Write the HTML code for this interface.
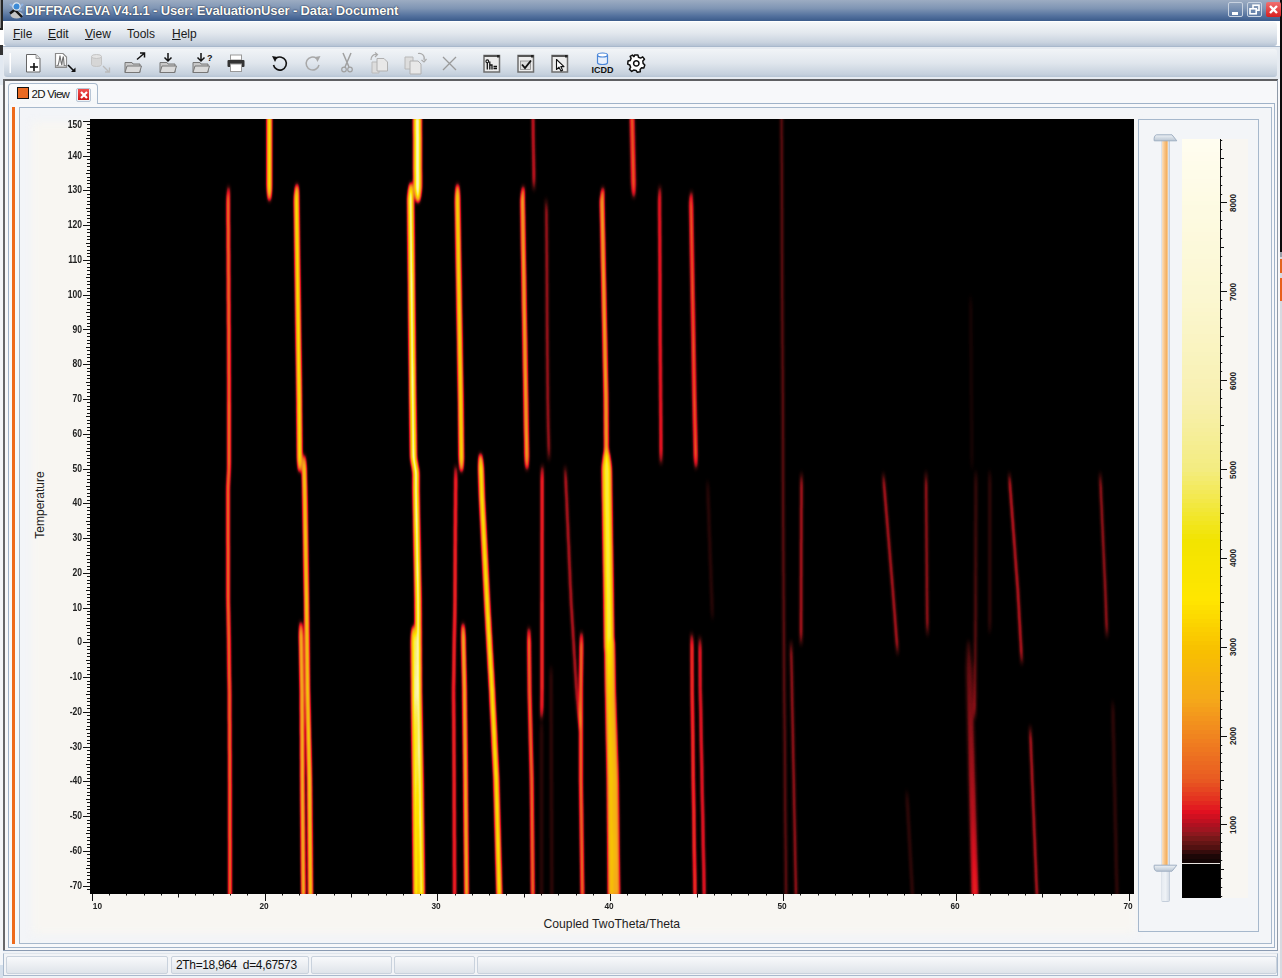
<!DOCTYPE html>
<html><head><meta charset="utf-8">
<style>
*{margin:0;padding:0;box-sizing:border-box}
html,body{width:1282px;height:978px;overflow:hidden;background:#f3f5f8;font-family:"Liberation Sans",sans-serif}
.a{position:absolute}
#title{left:3px;top:0;width:1277px;height:21px;background:linear-gradient(#9cacc2 0%,#7f95b4 40%,#54729e 75%,#3b5b8b 100%)}
#title .t{left:22px;top:3px;font:bold 13px "Liberation Sans",sans-serif;letter-spacing:-0.14px;color:#fdfcf6;text-shadow:0 0 1px #1a2a4a,0 0 2px #2a3a5a;white-space:nowrap}
#menu{left:3px;top:21px;width:1277px;height:26px;background:#fff}
#menu .bg{left:1px;top:1px;width:1273px;height:24px;border-radius:3px;background:linear-gradient(#f5f7f9 0%,#e3e8ee 45%,#c9d3df 85%,#b5c3d4 100%)}
#menu span{position:absolute;top:6px;font-size:12px;color:#1a1a1a;white-space:nowrap}
#tool{left:3px;top:47px;width:1277px;height:33px;background:#e6ebf1}
#tool .bg{left:1px;top:1.5px;width:1273px;height:28px;border-radius:3px;background:linear-gradient(#f1f4f7 0%,#e0e6ed 50%,#c6d1dd 90%,#b6c4d4 100%)}
.yl{position:absolute;left:52px;width:30px;text-align:right;font-weight:bold;font-size:10.3px;line-height:12px;color:#222;transform:scaleX(0.83);transform-origin:right center}
.xl{position:absolute;top:900px;text-align:center;font-weight:bold;font-size:9px;line-height:12px;color:#222;transform:scaleX(0.92)}
.cl{position:absolute;left:1222px;width:22px;height:20px;font-weight:bold;font-size:9px;line-height:20px;color:#222;transform:rotate(-90deg) scaleX(0.9);text-align:center;transform-origin:center}
.tb{position:absolute}
</style></head><body>
<!-- desktop strips -->
<div class="a" style="left:0;top:0;width:3px;height:978px;background:#f4f6f9"></div>
<div class="a" style="left:0;top:55px;width:3px;height:30px;background:#e2e9f1"></div>
<div class="a" style="left:0;top:965px;width:3px;height:13px;background:#d5e0ec"></div>
<div class="a" style="left:0;top:0;width:3px;height:28px;background:#262626;border-left:1px solid #8a8a8a"></div>
<div class="a" style="left:0;top:28px;width:3px;height:18px;background:#fff;border-top:2px solid #222;"></div>
<div class="a" style="left:0;top:45px;width:3px;height:10px;background:#333"></div>
<div class="a" style="left:1280px;top:0;width:2px;height:978px;background:#d6dae0"></div>
<div class="a" style="left:1280px;top:0;width:2px;height:252px;background:#0c0c0c"></div>
<div class="a" style="left:1280px;top:252px;width:2px;height:5px;background:#9aa0a8"></div>
<div class="a" style="left:1280px;top:259px;width:2px;height:14px;background:#e2641e"></div>
<div class="a" style="left:1280px;top:278px;width:2px;height:23px;background:#e8601c"></div>

<div id="title" class="a"><svg class="a" style="left:3px;top:1px" width="20" height="19">
<path d="M4,3 L8,6.5 M17,3 L13,6.5 M16,9 L12,8 M17,14 L13,12" stroke="#8fb2e0" stroke-width="2.2"/>
<ellipse cx="10.5" cy="14" rx="6" ry="3.5" fill="#c4c4c4"/>
<path d="M4,12.5 L11,7 M9,9 L16,16" stroke="#141414" stroke-width="2.4"/>
<circle cx="10.5" cy="5.5" r="3.6" fill="#3c8ad6" stroke="#dfe7ef" stroke-width="1.2"/>
</svg><div class="a t">DIFFRAC.EVA V4.1.1 - User: EvaluationUser - Data: Document</div>
<!-- window buttons -->
<div class="a" style="left:1225px;top:2px;width:15px;height:15px;border:1px solid #c8d2e0;border-radius:2px;background:linear-gradient(#8fa2bc,#5a78a4)"><div class="a" style="left:3px;top:9px;width:6px;height:3px;background:#fff"></div></div>
<div class="a" style="left:1244px;top:2px;width:15px;height:15px;border:1px solid #c8d2e0;border-radius:2px;background:linear-gradient(#8fa2bc,#5a78a4)"><svg class="a" style="left:0;top:0" width="13" height="13"><rect x="5" y="2.2" width="6" height="5" fill="none" stroke="#fff" stroke-width="1.6"/><rect x="2" y="5.8" width="6.2" height="5" fill="#6a86ae" stroke="#fff" stroke-width="1.6"/></svg></div>
<div class="a" style="left:1263px;top:2px;width:15px;height:15px;border-radius:2px;background:linear-gradient(#f07070,#d82020)"><svg class="a" style="left:3px;top:3px" width="9" height="9"><path d="M1,1 L8,8 M8,1 L1,8" stroke="#fff" stroke-width="2.4"/></svg></div>
</div>


<div id="menu" class="a"><div class="a bg"></div>
<span style="left:10px"><u>F</u>ile</span>
<span style="left:45px"><u>E</u>dit</span>
<span style="left:82px"><u>V</u>iew</span>
<span style="left:124px">Tools</span>
<span style="left:169px"><u>H</u>elp</span>
</div>
<div class="a" style="left:3px;top:46px;width:1277px;height:1px;background:#a8b8cc"></div>
<div id="tool" class="a"><div class="a bg"></div></div>
<svg class="a" style="left:0;top:44px" width="700" height="40">
<rect x="9.5" y="9" width="1.5" height="20" fill="#ffffff"/>
<!-- new doc -->
<path d="M26.5,10.5 L36,10.5 L40,14.5 L40,28 L26.5,28 Z" fill="#fff" stroke="#666" stroke-width="1"/>
<path d="M36,10.5 L36,14.5 L40,14.5" fill="#ddd" stroke="#888" stroke-width="0.8"/>
<path d="M30,23 L38,23 M34,19 L34,27" stroke="#111" stroke-width="1.6"/>
<!-- import scan -->
<path d="M55.5,9.5 L63,9.5 L66.5,13 L66.5,23.5 L55.5,23.5 Z" fill="#fff" stroke="#8a8a8a" stroke-width="1.2"/>
<path d="M56.5,21.5 L58,21.5 L59,18 L60,11.5 L61,18 L61.8,21 L62.6,15 L63.4,12.5 L64.2,21.5 L65.8,21.5" fill="none" stroke="#707070" stroke-width="1.1"/>
<path d="M56,22.2 L66,22.2" stroke="#9a9a9a" stroke-width="1"/>
<path d="M68,21 L74,27" stroke="#111" stroke-width="1.6"/><path d="M71,28 L75.5,28 L75.5,23.5 Z" fill="#111"/>
<!-- db grey -->
<path d="M91.5,12.5 L91.5,20.5 A5,2 0 0 0 101.5,20.5 L101.5,12.5" fill="#d6d6d6" stroke="#c4c4c4" stroke-width="1"/>
<ellipse cx="96.5" cy="12.5" rx="5" ry="2" fill="#e4e4e4" stroke="#c4c4c4" stroke-width="1"/>
<path d="M103,22 L109,28 M105,28 L109.5,28 L109.5,23.5" stroke="#bbb" stroke-width="1.3" fill="none"/>
<!-- folder export -->
<path d="M125,28.5 L125,18.5 L132,18.5 L133,20 L140,20 L140,28.5 Z" fill="#c8c8c8" stroke="#777" stroke-width="1"/>
<path d="M125,28.5 L127,22 L141.5,22 L139.5,28.5 Z" fill="#dadada" stroke="#777" stroke-width="1"/>
<path d="M137,15.5 L144,9.5 M140,9 L144.5,9 L144.5,13.5" stroke="#111" stroke-width="1.5" fill="none"/>
<!-- folder import -->
<path d="M160,28.5 L160,18.5 L167,18.5 L168,20 L175,20 L175,28.5 Z" fill="#c8c8c8" stroke="#777" stroke-width="1"/>
<path d="M160,28.5 L162,22 L176.5,22 L174.5,28.5 Z" fill="#dadada" stroke="#777" stroke-width="1"/>
<path d="M168,9 L168,17 M164.5,13.5 L168,17 L171.5,13.5" stroke="#111" stroke-width="1.5" fill="none"/>
<!-- folder import ? -->
<path d="M193,28.5 L193,18.5 L200,18.5 L201,20 L208,20 L208,28.5 Z" fill="#c8c8c8" stroke="#777" stroke-width="1"/>
<path d="M193,28.5 L195,22 L209.5,22 L207.5,28.5 Z" fill="#dadada" stroke="#777" stroke-width="1"/>
<path d="M201,9 L201,17 M197.5,13.5 L201,17 L204.5,13.5" stroke="#111" stroke-width="1.5" fill="none"/>
<text x="207" y="17" font-family="Liberation Sans" font-weight="bold" font-size="9" fill="#111">?</text>
<!-- printer -->
<rect x="230.5" y="11" width="11" height="5" fill="#fff" stroke="#999" stroke-width="1"/>
<rect x="227.5" y="16" width="17" height="7" rx="1" fill="#333"/>
<rect x="230.5" y="20" width="11" height="7.5" fill="#fff" stroke="#999" stroke-width="1"/>
<!-- undo -->
<path d="M273.5,21 A6.5,6.5 0 1 0 276,14.3" fill="none" stroke="#111" stroke-width="1.6"/>
<path d="M272,12 L277.5,13 L275,18 Z" fill="#111"/>
<!-- redo grey -->
<path d="M319,21 A6.5,6.5 0 1 1 316.5,14.3" fill="none" stroke="#a8a8a8" stroke-width="1.5"/>
<path d="M320.5,12 L315,13 L317.5,18 Z" fill="#a8a8a8"/>
<!-- scissors -->
<path d="M343,9 L349,23 M351,9 L345,23" stroke="#a0a0a0" stroke-width="1.5"/>
<circle cx="344" cy="25.5" r="2.3" fill="none" stroke="#a0a0a0" stroke-width="1.2"/>
<circle cx="350" cy="25.5" r="2.3" fill="none" stroke="#a0a0a0" stroke-width="1.2"/>
<!-- copy grey -->
<path d="M372,18 L379,18 L379,29 L372,29 Z" fill="#ddd" stroke="#bbb" stroke-width="1"/>
<path d="M377,14.5 L384,14.5 L387.5,18 L387.5,27 L377,27 Z" fill="#e8e8e8" stroke="#b0b0b0" stroke-width="1"/>
<path d="M371,16 A5,5 0 0 1 377,10.5 M375,8.5 L377.5,10.5 L375,13" stroke="#aaa" stroke-width="1.2" fill="none"/>
<!-- paste grey -->
<path d="M405,13 L413,13 L413,25 L405,25 Z" fill="#ddd" stroke="#b8b8b8" stroke-width="1"/>
<path d="M410,17 L418,17 L421,20 L421,30 L410,30 Z" fill="#e8e8e8" stroke="#b0b0b0" stroke-width="1"/>
<path d="M418,9.5 A5,5 0 0 1 424,16 M421.5,16 L424,18 L426.5,15" stroke="#aaa" stroke-width="1.2" fill="none"/>
<!-- X -->
<path d="M443,13 L456,26 M456,13 L443,26" stroke="#9a9a9a" stroke-width="1.3"/>
<!-- window icons -->
<rect x="484" y="11.5" width="15.5" height="16.5" fill="#ececec" stroke="#6e6e6e" stroke-width="1.5"/>
<rect x="484" y="11" width="15.5" height="2" fill="#555"/><rect x="497" y="11" width="2.5" height="2.5" fill="#222"/>
<circle cx="487.3" cy="17.3" r="1.4" fill="none" stroke="#111" stroke-width="1.1"/>
<path d="M487.3,18.8 L487.3,25.5 M489.8,17.5 L489.8,25.5 M489.8,21 L492,21 L492,25.5 M493.5,22.5 L497,22.5 M493.5,24.5 L497,24.5" stroke="#111" stroke-width="1.3" fill="none"/>
<rect x="518" y="11.5" width="15.5" height="16.5" fill="#ececec" stroke="#6e6e6e" stroke-width="1.5"/>
<rect x="518" y="11" width="15.5" height="2" fill="#555"/><rect x="531" y="11" width="2.5" height="2.5" fill="#222"/>
<rect x="520.5" y="17" width="10" height="8.5" fill="#dcdcdc" stroke="#888" stroke-width="0.8"/>
<path d="M522,20.5 L525,24 L531,16.5" stroke="#111" stroke-width="1.9" fill="none"/>
<rect x="552" y="11.5" width="15.5" height="16.5" fill="#ececec" stroke="#6e6e6e" stroke-width="1.5"/>
<rect x="552" y="11" width="15.5" height="2" fill="#555"/><rect x="565" y="11" width="2.5" height="2.5" fill="#222"/>
<path d="M556.5,15.5 L556.5,25.5 L559,23.2 L561,27 L562.6,26.2 L560.8,22.6 L564,22.6 Z" fill="#fff" stroke="#111" stroke-width="1.1" stroke-linejoin="round"/>
<!-- ICDD -->
<path d="M597.5,11 L597.5,18.5 A5,2 0 0 0 607.5,18.5 L607.5,11" fill="#e8f0fc" stroke="#4a86d8" stroke-width="1.2"/>
<ellipse cx="602.5" cy="11" rx="5" ry="2" fill="#fff" stroke="#4a86d8" stroke-width="1.2"/>
<text x="591.5" y="29" font-family="Liberation Sans" font-weight="bold" font-size="9" fill="#111" textLength="22">ICDD</text>
<!-- gear -->
<g transform="translate(636.3,19.4)">
<path d="M-1.6,-8.5 L1.6,-8.5 L2.2,-6.2 L4.3,-5.3 L6.4,-6.5 L8.2,-4.2 L6.5,-2.4 L6.8,0 L8.5,1.6 L7.6,4.5 L5.3,4.4 L3.8,6.1 L4,8.3 L1,8.9 L-0.2,7 L-2.6,6.7 L-4.6,8 L-6.9,5.9 L-5.7,3.9 L-6.5,1.6 L-8.6,0.7 L-8.3,-2.3 L-6.2,-2.8 L-5.2,-5 L-6.2,-7.1 L-3.9,-8.3 L-2.3,-6.8 Z" fill="#fff" stroke="#111" stroke-width="1.5" stroke-linejoin="round"/>
<circle cx="0" cy="0" r="2.7" fill="none" stroke="#111" stroke-width="1.5"/>
</g>
</svg>

<!-- document area -->
<div class="a" style="left:3px;top:79px;width:1277px;height:873px;background:#f7f8fa"></div>
<div class="a" style="left:3px;top:79px;width:1275px;height:2px;background:#5f6063"></div>
<div class="a" style="left:3px;top:79px;width:2px;height:872px;background:#66676a"></div>
<div class="a" style="left:1277px;top:80px;width:1px;height:871px;background:#8f9aa8"></div>
<div class="a" style="left:3px;top:950px;width:1275px;height:1px;background:#8a9bb2"></div>

<!-- tab -->
<div class="a" style="left:8px;top:103px;width:1267px;height:845px;border:1px solid #9fb2c8;border-top-color:#9fb2c8;background:#f7f8fa"></div>
<div class="a" style="left:8px;top:83px;width:90px;height:21px;border:1px solid #a9bacd;border-bottom:none;border-radius:4px 4px 0 0;background:linear-gradient(#fbfcfd,#f4f6f8)"></div>
<div class="a" style="left:17px;top:87px;width:12px;height:12px;background:#ea6a22;border:1.5px solid #111"></div>
<div class="a" style="left:31.5px;top:87.5px;font-size:11.5px;letter-spacing:-0.7px;color:#111;white-space:nowrap">2D View</div>
<div class="a" style="left:76px;top:88px;width:15px;height:14px;border:1px solid #b8c6d6;border-radius:2px;background:#eef2f6"></div>
<div class="a" style="left:78px;top:89px;width:11px;height:11px;background:linear-gradient(#f05050,#d01818)"><svg class="a" style="left:1.5px;top:1.5px" width="8" height="8"><path d="M1,1 L7,7 M7,1 L1,7" stroke="#fff" stroke-width="2.2"/></svg></div>

<!-- plot panel -->
<div class="a" style="left:12px;top:107px;width:3px;height:837px;background:#ee6a1c"></div>
<div class="a" style="left:19px;top:107px;width:1253px;height:837px;border:1px solid #a6b8cc;background:#f3f5f8;overflow:hidden"><div class="a" style="left:12px;top:14px;width:1104px;height:812px;background:#f8f6f2;filter:blur(5px)"></div></div>

<!-- heat map -->
<svg class="a" style="left:90px;top:119px;overflow:hidden" width="1044" height="775">
<defs>
<filter id="heat" filterUnits="userSpaceOnUse" x="-30" y="-30" width="1104" height="834" color-interpolation-filters="sRGB">
<feGaussianBlur stdDeviation="1.5 2.5"/>
<feComponentTransfer>
<feFuncR type="table" tableValues="0.000 0.047 0.094 0.141 0.188 0.282 0.376 0.471 0.565 0.643 0.722 0.800 0.878 0.885 0.891 0.897 0.904 0.910 0.915 0.920 0.925 0.931 0.936 0.941 0.944 0.948 0.951 0.954 0.958 0.961 0.963 0.965 0.967 0.969 0.971 0.973 0.978 0.984 0.989 0.995 1.000 0.995 0.989 0.984 0.978 0.973 0.978 0.984 0.989 0.995 1.000"/>
<feFuncG type="table" tableValues="0.000 0.008 0.016 0.024 0.031 0.039 0.047 0.055 0.063 0.063 0.063 0.063 0.063 0.113 0.163 0.213 0.264 0.314 0.345 0.376 0.408 0.439 0.471 0.502 0.528 0.554 0.580 0.607 0.633 0.659 0.680 0.701 0.722 0.742 0.763 0.784 0.808 0.831 0.855 0.878 0.902 0.910 0.918 0.925 0.933 0.941 0.951 0.962 0.972 0.982 0.992"/>
<feFuncB type="table" tableValues="0.000 0.008 0.016 0.024 0.031 0.047 0.063 0.078 0.094 0.102 0.110 0.118 0.125 0.125 0.125 0.125 0.125 0.125 0.125 0.125 0.125 0.125 0.125 0.125 0.122 0.118 0.114 0.110 0.106 0.102 0.085 0.068 0.051 0.034 0.017 0.000 0.000 0.000 0.000 0.000 0.000 0.100 0.201 0.301 0.402 0.502 0.590 0.678 0.765 0.853 0.941"/>
<feFuncA type="table" tableValues="1 1"/>
</feComponentTransfer>
</filter>
</defs>
<g filter="url(#heat)">
<rect x="-30" y="-30" width="1104" height="834" fill="#000"/>
<path d="M181.1,-4.0 L181.1,-2.0 L181.1,0.0 L181.1,2.0 L181.1,4.0 L181.1,6.0 L181.1,8.0 L181.1,10.0 L181.1,12.0 L181.1,14.0 L181.1,16.0 L181.1,18.0 L181.1,20.0 L181.1,22.0 L181.1,24.0 L181.1,26.0 L181.1,28.0 L181.1,30.0 L181.1,32.0 L181.1,34.0 L181.1,36.0 L181.1,38.0 L181.1,40.0 L181.1,42.0 L181.1,44.0 L181.1,46.0 L181.1,48.0 L181.1,50.0 L181.1,52.0 L181.1,54.0 L181.1,56.0 L181.1,58.0 L181.1,60.0 L181.1,62.0 L181.1,64.0 L181.1,66.0 L181.1,68.0 L181.0,70.0 L181.0,71.0 L180.9,72.0 L180.7,74.0 L180.5,76.0 L180.3,78.0 L180.1,80.0 L179.4,82.0 L179.4,82.0 L178.7,80.0 L178.5,78.0 L178.3,76.0 L178.1,74.0 L177.9,72.0 L177.8,71.0 L177.8,70.0 L177.6,68.0 L177.6,66.0 L177.6,64.0 L177.6,62.0 L177.6,60.0 L177.6,58.0 L177.6,56.0 L177.6,54.0 L177.6,52.0 L177.6,50.0 L177.6,48.0 L177.6,46.0 L177.6,44.0 L177.6,42.0 L177.6,40.0 L177.6,38.0 L177.6,36.0 L177.6,34.0 L177.6,32.0 L177.6,30.0 L177.6,28.0 L177.6,26.0 L177.6,24.0 L177.6,22.0 L177.6,20.0 L177.6,18.0 L177.6,16.0 L177.6,14.0 L177.6,12.0 L177.6,10.0 L177.6,8.0 L177.6,6.0 L177.6,4.0 L177.6,2.0 L177.6,0.0 L177.6,-2.0 L177.6,-4.0Z" fill="rgb(255,255,255)"/>
<path d="M330.9,-4.0 L330.9,-2.0 L330.9,-0.0 L330.9,2.0 L330.9,4.0 L330.9,6.0 L330.9,8.0 L330.9,10.0 L330.9,12.0 L330.9,14.0 L331.0,16.0 L331.0,18.0 L331.0,20.0 L331.0,22.0 L331.0,24.0 L331.0,26.0 L331.0,28.0 L331.0,30.0 L331.0,32.0 L331.0,34.0 L331.0,36.0 L331.0,38.0 L331.0,40.0 L331.0,42.0 L331.0,44.0 L331.0,46.0 L331.0,48.0 L331.0,50.0 L331.0,52.0 L331.1,54.0 L331.1,56.0 L331.1,58.0 L331.1,60.0 L331.1,62.0 L331.1,64.0 L331.1,66.0 L331.1,68.0 L331.0,70.0 L330.8,71.0 L330.7,71.9 L330.5,73.9 L330.2,75.9 L329.9,77.9 L329.5,79.9 L328.9,82.0 L328.0,83.0 L328.0,83.0 L327.0,82.0 L326.3,80.0 L325.7,78.1 L325.3,76.1 L324.9,74.1 L324.5,72.1 L324.4,71.0 L324.2,70.0 L324.1,68.0 L324.1,66.0 L324.1,64.0 L324.1,62.0 L324.1,60.0 L324.1,58.0 L324.1,56.0 L324.1,54.0 L324.0,52.0 L324.0,50.0 L324.0,48.0 L324.0,46.0 L324.0,44.0 L324.0,42.0 L324.0,40.0 L324.0,38.0 L324.0,36.0 L324.0,34.0 L324.0,32.0 L324.0,30.0 L324.0,28.0 L324.0,26.0 L324.0,24.0 L324.0,22.0 L324.0,20.0 L324.0,18.0 L324.0,16.0 L323.9,14.0 L323.9,12.0 L323.9,10.0 L323.9,8.0 L323.9,6.0 L323.9,4.0 L323.9,2.0 L323.9,0.0 L323.9,-2.0 L323.9,-4.0Z" fill="rgb(242,242,242)"/>
<path d="M443.7,-4.0 L443.8,-2.0 L443.8,-0.0 L443.8,2.0 L443.9,4.0 L443.9,6.0 L443.9,8.0 L443.9,10.0 L444.0,12.0 L444.0,14.0 L444.0,16.0 L444.0,18.0 L444.1,20.0 L444.1,22.0 L444.1,24.0 L444.1,26.0 L444.2,28.0 L444.2,30.0 L444.2,32.0 L444.2,34.0 L444.3,36.0 L444.3,38.0 L444.3,40.0 L444.4,42.0 L444.4,44.0 L444.4,46.0 L444.4,48.0 L444.5,50.0 L444.5,52.0 L444.5,54.0 L444.5,56.0 L444.6,58.0 L444.5,60.0 L444.5,62.0 L444.5,64.0 L444.4,66.0 L444.3,68.0 L444.3,70.0 L444.0,72.0 L444.0,72.0 L444.0,72.0 L444.0,72.0 L443.7,70.0 L443.5,68.0 L443.4,66.0 L443.3,64.0 L443.2,62.0 L443.1,60.0 L443.1,58.0 L443.0,56.0 L443.0,54.0 L443.0,52.0 L443.0,50.0 L442.9,48.0 L442.9,46.0 L442.9,44.0 L442.9,42.0 L442.8,40.0 L442.8,38.0 L442.8,36.0 L442.8,34.0 L442.7,32.0 L442.7,30.0 L442.7,28.0 L442.6,26.0 L442.6,24.0 L442.6,22.0 L442.6,20.0 L442.5,18.0 L442.5,16.0 L442.5,14.0 L442.5,12.0 L442.4,10.0 L442.4,8.0 L442.4,6.0 L442.4,4.0 L442.3,2.0 L442.3,0.0 L442.3,-2.0 L442.3,-4.0Z" fill="rgb(133,133,133)"/>
<path d="M544.0,-4.0 L544.0,-2.0 L544.1,-0.0 L544.1,2.0 L544.2,4.0 L544.2,6.0 L544.3,8.0 L544.3,10.0 L544.3,12.0 L544.4,14.0 L544.4,16.0 L544.5,18.0 L544.5,20.0 L544.6,22.0 L544.6,24.0 L544.6,25.9 L544.7,27.9 L544.7,29.9 L544.8,31.9 L544.8,33.9 L544.9,35.9 L544.9,37.9 L545.0,39.9 L545.0,41.9 L545.0,43.9 L545.1,45.9 L545.1,47.9 L545.2,49.9 L545.2,51.9 L545.3,53.9 L545.3,55.9 L545.3,57.9 L545.4,59.9 L545.4,61.9 L545.5,63.9 L545.4,65.9 L545.3,67.9 L545.2,69.9 L545.1,72.0 L544.9,74.0 L544.7,76.0 L544.3,78.0 L543.8,79.0 L543.8,79.0 L543.2,78.0 L542.8,76.0 L542.5,74.0 L542.2,72.0 L542.0,70.0 L541.8,68.0 L541.6,66.0 L541.5,64.0 L541.4,62.0 L541.4,60.0 L541.3,58.0 L541.3,56.0 L541.3,54.0 L541.2,52.0 L541.2,50.0 L541.1,48.0 L541.1,46.0 L541.0,44.0 L541.0,42.0 L541.0,40.0 L540.9,38.0 L540.9,36.0 L540.8,34.0 L540.8,32.0 L540.7,30.0 L540.7,28.0 L540.7,26.0 L540.6,24.0 L540.6,22.0 L540.5,20.0 L540.5,18.0 L540.4,16.0 L540.4,14.0 L540.3,12.0 L540.3,10.0 L540.3,8.0 L540.2,6.0 L540.2,4.0 L540.1,2.0 L540.1,0.0 L540.0,-2.0 L540.0,-4.0Z" fill="rgb(106,106,106)"/>
<path d="M692.2,-4.0 L692.3,-2.0 L692.3,-0.0 L692.3,2.0 L692.3,4.0 L692.3,6.0 L692.3,8.0 L692.3,10.0 L692.3,12.0 L692.3,14.0 L692.3,16.0 L692.3,18.0 L692.4,20.0 L692.4,22.0 L692.4,24.0 L692.4,26.0 L692.4,28.0 L692.4,30.0 L692.4,32.0 L692.4,34.0 L692.4,36.0 L692.4,38.0 L692.4,40.0 L692.4,42.0 L692.5,44.0 L692.5,46.0 L692.5,48.0 L692.5,50.0 L692.5,52.0 L692.5,54.0 L692.5,56.0 L692.5,58.0 L692.5,60.0 L692.5,62.0 L692.5,64.0 L692.6,66.0 L692.6,68.0 L692.6,70.0 L692.6,72.0 L692.6,74.0 L692.6,76.0 L692.6,78.0 L692.6,80.0 L692.6,82.0 L692.6,84.0 L692.6,86.0 L692.6,88.0 L692.7,90.0 L692.7,92.0 L692.7,94.0 L692.7,96.0 L692.7,98.0 L692.7,100.0 L692.7,102.0 L692.7,104.0 L692.7,106.0 L692.7,108.0 L692.7,110.0 L692.8,112.0 L692.8,114.0 L692.8,116.0 L692.8,118.0 L692.8,120.0 L692.8,122.0 L692.8,124.0 L692.8,126.0 L692.8,128.0 L692.8,130.0 L692.8,132.0 L692.8,134.0 L692.9,136.0 L692.9,138.0 L692.9,140.0 L692.9,142.0 L692.9,144.0 L692.9,146.0 L692.9,148.0 L692.9,150.0 L692.9,152.0 L692.9,154.0 L692.9,156.0 L693.0,158.0 L693.0,160.0 L693.0,162.0 L693.0,164.0 L693.0,166.0 L693.0,168.0 L693.0,170.0 L693.0,172.0 L693.0,174.0 L693.0,176.0 L693.0,178.0 L693.0,180.0 L693.0,181.0 L693.1,182.0 L693.1,184.0 L693.1,186.0 L693.1,188.0 L693.1,190.0 L693.1,192.0 L693.1,194.0 L693.1,196.0 L693.1,198.0 L693.1,200.0 L693.1,202.0 L693.2,204.0 L693.2,206.0 L693.2,208.0 L693.2,210.0 L693.2,212.0 L693.2,214.0 L693.2,216.0 L693.2,218.0 L693.2,220.0 L693.2,222.0 L693.2,224.0 L693.2,226.0 L693.3,228.0 L693.3,230.0 L693.3,232.0 L693.3,234.0 L693.3,236.0 L693.3,238.0 L693.3,240.0 L693.3,242.0 L693.3,244.0 L693.3,246.0 L693.3,248.0 L693.4,250.0 L693.4,252.0 L693.4,254.0 L693.4,256.0 L693.4,258.0 L693.4,260.0 L693.4,262.0 L693.4,264.0 L693.4,266.0 L693.4,268.0 L693.4,270.0 L693.4,272.0 L693.5,274.0 L693.5,276.0 L693.5,278.0 L693.5,280.0 L693.5,282.0 L693.5,284.0 L693.5,286.0 L693.5,288.0 L693.5,290.0 L693.5,292.0 L693.5,294.0 L693.6,296.0 L693.6,298.0 L693.6,300.0 L693.6,302.0 L693.6,304.0 L693.6,306.0 L693.6,308.0 L693.6,310.0 L693.6,312.0 L693.6,314.0 L693.6,316.0 L693.6,318.0 L693.7,320.0 L693.7,322.0 L693.7,324.0 L693.7,326.0 L693.7,328.0 L693.7,330.0 L693.7,332.0 L693.7,334.0 L693.7,336.0 L693.7,338.0 L693.7,340.0 L693.8,342.0 L693.8,344.0 L693.8,346.0 L693.8,348.0 L693.8,350.0 L693.8,352.0 L693.8,354.0 L693.8,356.0 L693.8,358.0 L693.8,360.0 L693.8,362.0 L693.9,364.0 L693.9,366.0 L693.9,368.0 L693.9,370.0 L693.9,372.0 L693.9,374.0 L693.9,376.0 L693.9,378.0 L693.9,380.0 L693.9,382.0 L693.9,384.0 L693.9,386.0 L694.0,388.0 L694.0,390.0 L694.0,392.0 L694.0,394.0 L694.0,396.0 L694.0,398.0 L694.0,400.0 L694.0,402.0 L694.0,404.0 L694.0,406.0 L694.0,408.0 L694.1,410.0 L694.1,412.0 L694.1,414.0 L694.1,416.0 L694.1,418.0 L694.1,420.0 L694.1,422.0 L694.1,424.0 L694.1,426.0 L694.1,428.0 L694.1,430.0 L694.1,432.0 L694.2,434.0 L694.2,436.0 L694.2,438.0 L694.2,440.0 L694.2,442.0 L694.2,444.0 L694.2,446.0 L694.2,448.0 L694.2,450.0 L694.2,452.0 L694.2,454.0 L694.3,456.0 L694.3,458.0 L694.3,460.0 L694.3,462.0 L694.3,464.0 L694.3,466.0 L694.3,468.0 L694.3,470.0 L694.3,472.0 L694.3,474.0 L694.3,476.0 L694.3,478.0 L694.4,480.0 L694.4,482.0 L694.4,484.0 L694.4,486.0 L694.4,488.0 L694.4,490.0 L694.4,492.0 L694.4,494.0 L694.4,496.0 L694.4,498.0 L694.4,500.0 L694.4,501.0 L694.5,502.0 L694.5,504.0 L694.5,506.0 L694.5,508.0 L694.5,510.0 L694.5,512.0 L694.6,514.0 L694.6,516.0 L694.6,518.0 L694.6,520.0 L694.6,522.0 L694.6,524.0 L694.7,526.0 L694.7,528.0 L694.7,530.0 L694.7,532.0 L694.7,534.0 L694.7,536.0 L694.8,538.0 L694.8,540.0 L694.8,542.0 L694.8,544.0 L694.8,546.0 L694.8,548.0 L694.9,550.0 L694.9,552.0 L694.9,554.0 L694.9,556.0 L694.9,558.0 L694.9,560.0 L695.0,562.0 L695.0,564.0 L695.0,566.0 L695.0,568.0 L695.0,570.0 L695.0,572.0 L695.1,574.0 L695.1,576.0 L695.1,578.0 L695.1,580.0 L695.1,582.0 L695.1,584.0 L695.2,586.0 L695.2,588.0 L695.2,590.0 L695.2,592.0 L695.2,594.0 L695.2,596.0 L695.3,598.0 L695.3,600.0 L695.3,602.0 L695.3,604.0 L695.3,606.0 L695.3,608.0 L695.4,610.0 L695.4,612.0 L695.4,614.0 L695.4,616.0 L695.4,618.0 L695.4,620.0 L695.5,622.0 L695.5,624.0 L695.5,626.0 L695.5,628.0 L695.5,630.0 L695.5,632.0 L695.6,634.0 L695.6,636.0 L695.6,638.0 L695.6,640.0 L695.6,642.0 L695.6,644.0 L695.7,646.0 L695.7,648.0 L695.7,650.0 L695.7,652.0 L695.7,654.0 L695.7,656.0 L695.8,658.0 L695.8,660.0 L695.8,662.0 L695.8,664.0 L695.8,666.0 L695.8,668.0 L695.9,670.0 L695.9,672.0 L695.9,674.0 L695.9,676.0 L695.9,678.0 L695.9,680.0 L696.0,682.0 L696.0,684.0 L696.0,686.0 L696.0,688.0 L696.0,690.0 L696.0,692.0 L696.1,694.0 L696.1,696.0 L696.1,698.0 L696.1,700.0 L696.1,702.0 L696.1,704.0 L696.2,706.0 L696.2,708.0 L696.2,710.0 L696.2,712.0 L696.2,714.0 L696.2,716.0 L696.3,718.0 L696.3,720.0 L696.3,722.0 L696.3,724.0 L696.3,726.0 L696.3,728.0 L696.4,730.0 L696.4,732.0 L696.4,734.0 L696.4,736.0 L696.4,738.0 L696.4,740.0 L696.5,742.0 L696.5,744.0 L696.5,746.0 L696.5,748.0 L696.5,750.0 L696.5,752.0 L696.6,754.0 L696.6,756.0 L696.6,758.0 L696.6,760.0 L696.6,762.0 L696.6,764.0 L696.7,766.0 L696.7,768.0 L696.7,770.0 L696.7,772.0 L696.7,774.0 L696.7,776.0 L696.7,778.0 L696.7,778.0 L695.3,778.0 L695.2,778.0 L695.2,776.0 L695.2,774.0 L695.2,772.0 L695.2,770.0 L695.2,768.0 L695.2,766.0 L695.1,764.0 L695.1,762.0 L695.1,760.0 L695.1,758.0 L695.1,756.0 L695.1,754.0 L695.0,752.0 L695.0,750.0 L695.0,748.0 L695.0,746.0 L695.0,744.0 L695.0,742.0 L694.9,740.0 L694.9,738.0 L694.9,736.0 L694.9,734.0 L694.9,732.0 L694.9,730.0 L694.8,728.0 L694.8,726.0 L694.8,724.0 L694.8,722.0 L694.8,720.0 L694.8,718.0 L694.7,716.0 L694.7,714.0 L694.7,712.0 L694.7,710.0 L694.7,708.0 L694.7,706.0 L694.6,704.0 L694.6,702.0 L694.6,700.0 L694.6,698.0 L694.6,696.0 L694.6,694.0 L694.5,692.0 L694.5,690.0 L694.5,688.0 L694.5,686.0 L694.5,684.0 L694.5,682.0 L694.4,680.0 L694.4,678.0 L694.4,676.0 L694.4,674.0 L694.4,672.0 L694.4,670.0 L694.3,668.0 L694.3,666.0 L694.3,664.0 L694.3,662.0 L694.3,660.0 L694.3,658.0 L694.2,656.0 L694.2,654.0 L694.2,652.0 L694.2,650.0 L694.2,648.0 L694.2,646.0 L694.1,644.0 L694.1,642.0 L694.1,640.0 L694.1,638.0 L694.1,636.0 L694.1,634.0 L694.0,632.0 L694.0,630.0 L694.0,628.0 L694.0,626.0 L694.0,624.0 L694.0,622.0 L693.9,620.0 L693.9,618.0 L693.9,616.0 L693.9,614.0 L693.9,612.0 L693.9,610.0 L693.8,608.0 L693.8,606.0 L693.8,604.0 L693.8,602.0 L693.8,600.0 L693.8,598.0 L693.7,596.0 L693.7,594.0 L693.7,592.0 L693.7,590.0 L693.7,588.0 L693.7,586.0 L693.6,584.0 L693.6,582.0 L693.6,580.0 L693.6,578.0 L693.6,576.0 L693.6,574.0 L693.5,572.0 L693.5,570.0 L693.5,568.0 L693.5,566.0 L693.5,564.0 L693.5,562.0 L693.4,560.0 L693.4,558.0 L693.4,556.0 L693.4,554.0 L693.4,552.0 L693.4,550.0 L693.3,548.0 L693.3,546.0 L693.3,544.0 L693.3,542.0 L693.3,540.0 L693.3,538.0 L693.2,536.0 L693.2,534.0 L693.2,532.0 L693.2,530.0 L693.2,528.0 L693.2,526.0 L693.1,524.0 L693.1,522.0 L693.1,520.0 L693.1,518.0 L693.1,516.0 L693.1,514.0 L693.0,512.0 L693.0,510.0 L693.0,508.0 L693.0,506.0 L693.0,504.0 L693.0,502.0 L693.0,501.0 L692.9,500.0 L692.9,498.0 L692.9,496.0 L692.9,494.0 L692.9,492.0 L692.9,490.0 L692.9,488.0 L692.9,486.0 L692.9,484.0 L692.9,482.0 L692.9,480.0 L692.8,478.0 L692.8,476.0 L692.8,474.0 L692.8,472.0 L692.8,470.0 L692.8,468.0 L692.8,466.0 L692.8,464.0 L692.8,462.0 L692.8,460.0 L692.8,458.0 L692.8,456.0 L692.7,454.0 L692.7,452.0 L692.7,450.0 L692.7,448.0 L692.7,446.0 L692.7,444.0 L692.7,442.0 L692.7,440.0 L692.7,438.0 L692.7,436.0 L692.7,434.0 L692.6,432.0 L692.6,430.0 L692.6,428.0 L692.6,426.0 L692.6,424.0 L692.6,422.0 L692.6,420.0 L692.6,418.0 L692.6,416.0 L692.6,414.0 L692.6,412.0 L692.6,410.0 L692.5,408.0 L692.5,406.0 L692.5,404.0 L692.5,402.0 L692.5,400.0 L692.5,398.0 L692.5,396.0 L692.5,394.0 L692.5,392.0 L692.5,390.0 L692.5,388.0 L692.4,386.0 L692.4,384.0 L692.4,382.0 L692.4,380.0 L692.4,378.0 L692.4,376.0 L692.4,374.0 L692.4,372.0 L692.4,370.0 L692.4,368.0 L692.4,366.0 L692.4,364.0 L692.3,362.0 L692.3,360.0 L692.3,358.0 L692.3,356.0 L692.3,354.0 L692.3,352.0 L692.3,350.0 L692.3,348.0 L692.3,346.0 L692.3,344.0 L692.3,342.0 L692.2,340.0 L692.2,338.0 L692.2,336.0 L692.2,334.0 L692.2,332.0 L692.2,330.0 L692.2,328.0 L692.2,326.0 L692.2,324.0 L692.2,322.0 L692.2,320.0 L692.1,318.0 L692.1,316.0 L692.1,314.0 L692.1,312.0 L692.1,310.0 L692.1,308.0 L692.1,306.0 L692.1,304.0 L692.1,302.0 L692.1,300.0 L692.1,298.0 L692.1,296.0 L692.0,294.0 L692.0,292.0 L692.0,290.0 L692.0,288.0 L692.0,286.0 L692.0,284.0 L692.0,282.0 L692.0,280.0 L692.0,278.0 L692.0,276.0 L692.0,274.0 L691.9,272.0 L691.9,270.0 L691.9,268.0 L691.9,266.0 L691.9,264.0 L691.9,262.0 L691.9,260.0 L691.9,258.0 L691.9,256.0 L691.9,254.0 L691.9,252.0 L691.9,250.0 L691.8,248.0 L691.8,246.0 L691.8,244.0 L691.8,242.0 L691.8,240.0 L691.8,238.0 L691.8,236.0 L691.8,234.0 L691.8,232.0 L691.8,230.0 L691.8,228.0 L691.7,226.0 L691.7,224.0 L691.7,222.0 L691.7,220.0 L691.7,218.0 L691.7,216.0 L691.7,214.0 L691.7,212.0 L691.7,210.0 L691.7,208.0 L691.7,206.0 L691.7,204.0 L691.6,202.0 L691.6,200.0 L691.6,198.0 L691.6,196.0 L691.6,194.0 L691.6,192.0 L691.6,190.0 L691.6,188.0 L691.6,186.0 L691.6,184.0 L691.6,182.0 L691.6,181.0 L691.5,180.0 L691.5,178.0 L691.5,176.0 L691.5,174.0 L691.5,172.0 L691.5,170.0 L691.5,168.0 L691.5,166.0 L691.5,164.0 L691.5,162.0 L691.5,160.0 L691.5,158.0 L691.4,156.0 L691.4,154.0 L691.4,152.0 L691.4,150.0 L691.4,148.0 L691.4,146.0 L691.4,144.0 L691.4,142.0 L691.4,140.0 L691.4,138.0 L691.4,136.0 L691.3,134.0 L691.3,132.0 L691.3,130.0 L691.3,128.0 L691.3,126.0 L691.3,124.0 L691.3,122.0 L691.3,120.0 L691.3,118.0 L691.3,116.0 L691.3,114.0 L691.3,112.0 L691.2,110.0 L691.2,108.0 L691.2,106.0 L691.2,104.0 L691.2,102.0 L691.2,100.0 L691.2,98.0 L691.2,96.0 L691.2,94.0 L691.2,92.0 L691.2,90.0 L691.1,88.0 L691.1,86.0 L691.1,84.0 L691.1,82.0 L691.1,80.0 L691.1,78.0 L691.1,76.0 L691.1,74.0 L691.1,72.0 L691.1,70.0 L691.1,68.0 L691.1,66.0 L691.0,64.0 L691.0,62.0 L691.0,60.0 L691.0,58.0 L691.0,56.0 L691.0,54.0 L691.0,52.0 L691.0,50.0 L691.0,48.0 L691.0,46.0 L691.0,44.0 L690.9,42.0 L690.9,40.0 L690.9,38.0 L690.9,36.0 L690.9,34.0 L690.9,32.0 L690.9,30.0 L690.9,28.0 L690.9,26.0 L690.9,24.0 L690.9,22.0 L690.9,20.0 L690.8,18.0 L690.8,16.0 L690.8,14.0 L690.8,12.0 L690.8,10.0 L690.8,8.0 L690.8,6.0 L690.8,4.0 L690.8,2.0 L690.8,0.0 L690.8,-2.0 L690.8,-4.0Z" fill="rgb(73,73,73)"/>
<path d="M138.8,67.0 L139.0,69.0 L139.0,71.0 L139.0,73.0 L139.0,75.0 L139.0,77.0 L139.0,79.0 L138.9,81.0 L138.9,81.0 L139.0,83.0 L139.0,85.0 L139.0,87.0 L139.0,89.0 L139.0,91.0 L139.0,93.0 L139.0,95.0 L139.0,97.0 L139.0,99.0 L139.0,101.0 L139.0,103.0 L139.0,105.0 L139.1,107.0 L139.1,109.0 L139.1,111.0 L139.1,113.0 L139.1,115.0 L139.1,117.0 L139.1,119.0 L139.1,121.0 L139.1,123.0 L139.1,125.0 L139.1,127.0 L139.1,129.0 L139.1,131.0 L139.2,133.0 L139.2,135.0 L139.2,137.0 L139.2,139.0 L139.2,141.0 L139.2,143.0 L139.2,145.0 L139.2,147.0 L139.2,149.0 L139.2,151.0 L139.2,153.0 L139.2,155.0 L139.3,157.0 L139.3,159.0 L139.3,161.0 L139.3,163.0 L139.3,165.0 L139.3,167.0 L139.3,169.0 L139.3,171.0 L139.3,173.0 L139.3,175.0 L139.3,177.0 L139.3,179.0 L139.3,181.0 L139.4,183.0 L139.4,185.0 L139.4,187.0 L139.4,189.0 L139.4,191.0 L139.4,193.0 L139.4,195.0 L139.4,197.0 L139.4,199.0 L139.4,201.0 L139.4,203.0 L139.4,205.0 L139.5,207.0 L139.5,209.0 L139.5,211.0 L139.5,213.0 L139.5,215.0 L139.5,217.0 L139.5,219.0 L139.5,221.0 L139.5,223.0 L139.5,225.0 L139.5,227.0 L139.5,229.0 L139.5,231.0 L139.6,233.0 L139.6,235.0 L139.6,237.0 L139.6,239.0 L139.6,241.0 L139.6,243.0 L139.6,245.0 L139.6,247.0 L139.6,249.0 L139.6,251.0 L139.6,253.0 L139.6,255.0 L139.7,257.0 L139.7,259.0 L139.7,261.0 L139.7,263.0 L139.7,265.0 L139.7,267.0 L139.7,269.0 L139.7,271.0 L139.7,273.0 L139.7,275.0 L139.7,277.0 L139.7,279.0 L139.7,281.0 L139.7,281.0 L139.8,283.0 L139.8,285.0 L139.8,287.0 L139.8,289.0 L139.8,291.0 L139.8,293.0 L139.8,295.0 L139.8,297.0 L139.8,299.0 L139.8,301.0 L139.8,303.0 L139.8,305.0 L139.8,307.0 L139.8,309.0 L139.8,311.0 L139.8,313.0 L139.8,315.0 L139.8,317.0 L139.8,319.0 L139.8,321.0 L139.8,323.0 L139.8,325.0 L139.8,327.0 L139.8,329.0 L139.8,331.0 L139.8,333.0 L139.8,335.0 L139.8,337.0 L139.8,339.0 L139.8,341.0 L139.8,343.0 L139.8,345.0 L139.8,346.0 L139.7,347.0 L139.6,349.0 L139.6,351.0 L139.5,353.0 L139.4,355.0 L139.3,357.0 L139.2,359.0 L139.2,361.0 L139.1,363.0 L139.0,365.0 L138.9,367.0 L138.8,369.0 L138.8,371.0 L138.7,371.0 L138.8,373.0 L138.8,375.0 L138.8,377.0 L138.8,379.0 L138.8,381.0 L138.8,383.0 L138.8,385.0 L138.8,387.0 L138.8,389.0 L138.8,391.0 L138.8,393.0 L138.8,395.0 L138.8,397.0 L138.8,399.0 L138.8,401.0 L138.8,403.0 L138.8,405.0 L138.8,407.0 L138.8,409.0 L138.8,411.0 L138.8,413.0 L138.8,415.0 L138.8,417.0 L138.8,419.0 L138.8,421.0 L138.8,423.0 L138.8,425.0 L138.9,427.0 L138.9,429.0 L138.9,431.0 L138.9,433.0 L138.9,435.0 L138.9,437.0 L138.9,439.0 L138.9,441.0 L138.9,443.0 L138.9,445.0 L138.9,447.0 L138.9,449.0 L138.9,451.0 L138.9,453.0 L138.9,455.0 L138.9,457.0 L138.9,459.0 L138.9,461.0 L138.9,463.0 L138.9,465.0 L138.9,467.0 L138.9,469.0 L138.9,471.0 L138.9,473.0 L138.9,475.0 L138.9,477.0 L138.9,479.0 L138.9,481.0 L138.9,481.0 L139.0,483.0 L139.0,485.0 L139.0,487.0 L139.1,489.0 L139.1,491.0 L139.1,493.0 L139.2,495.0 L139.2,497.0 L139.2,499.0 L139.2,501.0 L139.3,503.0 L139.3,505.0 L139.3,507.0 L139.4,509.0 L139.4,511.0 L139.4,513.0 L139.4,515.0 L139.5,517.0 L139.5,519.0 L139.5,521.0 L139.6,523.0 L139.6,524.9 L139.6,526.9 L139.6,528.9 L139.7,530.9 L139.7,532.9 L139.7,534.9 L139.8,536.9 L139.8,538.9 L139.8,540.9 L139.8,542.9 L139.9,544.9 L139.9,546.9 L139.9,548.9 L140.0,550.9 L140.0,552.9 L140.0,554.9 L140.0,556.9 L140.1,558.9 L140.1,560.9 L140.1,562.9 L140.2,564.9 L140.2,566.9 L140.2,568.9 L140.2,570.9 L140.2,571.0 L140.3,573.0 L140.3,575.0 L140.3,577.0 L140.3,579.0 L140.3,581.0 L140.3,583.0 L140.3,585.0 L140.3,587.0 L140.3,589.0 L140.3,591.0 L140.3,593.0 L140.3,595.0 L140.3,597.0 L140.3,599.0 L140.3,601.0 L140.4,603.0 L140.4,605.0 L140.4,607.0 L140.4,609.0 L140.4,611.0 L140.4,613.0 L140.4,615.0 L140.4,617.0 L140.4,619.0 L140.4,621.0 L140.4,623.0 L140.4,625.0 L140.4,627.0 L140.4,629.0 L140.4,631.0 L140.5,633.0 L140.5,635.0 L140.5,637.0 L140.5,639.0 L140.5,641.0 L140.5,643.0 L140.5,645.0 L140.5,647.0 L140.5,649.0 L140.5,651.0 L140.5,653.0 L140.5,655.0 L140.5,657.0 L140.5,659.0 L140.5,661.0 L140.5,661.0 L140.6,663.0 L140.6,665.0 L140.6,667.0 L140.6,669.0 L140.6,671.0 L140.6,673.0 L140.6,675.0 L140.6,677.0 L140.6,679.0 L140.6,681.0 L140.6,683.0 L140.6,685.0 L140.6,687.0 L140.6,689.0 L140.6,691.0 L140.6,693.0 L140.6,695.0 L140.6,697.0 L140.6,699.0 L140.6,701.0 L140.6,703.0 L140.6,705.0 L140.6,707.0 L140.6,709.0 L140.6,711.0 L140.6,713.0 L140.6,715.0 L140.6,717.0 L140.6,719.0 L140.7,721.0 L140.7,723.0 L140.7,725.0 L140.7,727.0 L140.7,729.0 L140.7,731.0 L140.7,733.0 L140.7,735.0 L140.7,737.0 L140.7,739.0 L140.7,741.0 L140.7,743.0 L140.7,745.0 L140.7,747.0 L140.7,749.0 L140.7,751.0 L140.7,753.0 L140.7,755.0 L140.7,757.0 L140.7,759.0 L140.7,761.0 L140.7,763.0 L140.7,765.0 L140.7,767.0 L140.7,769.0 L140.7,771.0 L140.7,773.0 L140.7,775.0 L140.7,777.0 L140.7,778.0 L139.3,778.0 L139.2,777.0 L139.2,775.0 L139.2,773.0 L139.2,771.0 L139.2,769.0 L139.2,767.0 L139.2,765.0 L139.2,763.0 L139.2,761.0 L139.2,759.0 L139.2,757.0 L139.2,755.0 L139.2,753.0 L139.2,751.0 L139.2,749.0 L139.2,747.0 L139.2,745.0 L139.2,743.0 L139.2,741.0 L139.2,739.0 L139.2,737.0 L139.2,735.0 L139.2,733.0 L139.2,731.0 L139.2,729.0 L139.2,727.0 L139.2,725.0 L139.2,723.0 L139.2,721.0 L139.1,719.0 L139.1,717.0 L139.1,715.0 L139.1,713.0 L139.1,711.0 L139.1,709.0 L139.1,707.0 L139.1,705.0 L139.1,703.0 L139.1,701.0 L139.1,699.0 L139.1,697.0 L139.1,695.0 L139.1,693.0 L139.1,691.0 L139.1,689.0 L139.1,687.0 L139.1,685.0 L139.1,683.0 L139.1,681.0 L139.1,679.0 L139.1,677.0 L139.1,675.0 L139.1,673.0 L139.1,671.0 L139.1,669.0 L139.1,667.0 L139.1,665.0 L139.1,663.0 L139.1,661.0 L139.0,661.0 L139.0,659.0 L139.0,657.0 L139.0,655.0 L139.0,653.0 L139.0,651.0 L139.0,649.0 L139.0,647.0 L139.0,645.0 L139.0,643.0 L139.0,641.0 L139.0,639.0 L139.0,637.0 L139.0,635.0 L139.0,633.0 L138.9,631.0 L138.9,629.0 L138.9,627.0 L138.9,625.0 L138.9,623.0 L138.9,621.0 L138.9,619.0 L138.9,617.0 L138.9,615.0 L138.9,613.0 L138.9,611.0 L138.9,609.0 L138.9,607.0 L138.9,605.0 L138.9,603.0 L138.8,601.0 L138.8,599.0 L138.8,597.0 L138.8,595.0 L138.8,593.0 L138.8,591.0 L138.8,589.0 L138.8,587.0 L138.8,585.0 L138.8,583.0 L138.8,581.0 L138.8,579.0 L138.8,577.0 L138.8,575.0 L138.8,573.0 L138.8,571.0 L138.7,571.0 L138.7,569.0 L138.7,567.0 L138.7,565.0 L138.6,563.0 L138.6,561.0 L138.6,559.0 L138.5,557.0 L138.5,555.0 L138.5,553.0 L138.5,551.0 L138.4,549.0 L138.4,547.0 L138.4,545.0 L138.3,543.0 L138.3,541.0 L138.3,539.0 L138.3,537.0 L138.2,535.0 L138.2,533.0 L138.2,531.0 L138.1,529.0 L138.1,527.0 L138.1,525.0 L138.1,523.0 L138.0,521.0 L138.0,519.0 L138.0,517.0 L137.9,515.0 L137.9,513.0 L137.9,511.0 L137.9,509.0 L137.8,507.0 L137.8,505.0 L137.8,503.0 L137.7,501.0 L137.7,499.0 L137.7,497.0 L137.7,495.0 L137.6,493.0 L137.6,491.0 L137.6,489.0 L137.5,487.0 L137.5,485.0 L137.5,483.0 L137.5,481.0 L137.4,481.0 L137.4,479.0 L137.4,477.0 L137.4,475.0 L137.4,473.0 L137.4,471.0 L137.4,469.0 L137.4,467.0 L137.4,465.0 L137.4,463.0 L137.4,461.0 L137.4,459.0 L137.4,457.0 L137.4,455.0 L137.4,453.0 L137.4,451.0 L137.4,449.0 L137.4,447.0 L137.4,445.0 L137.4,443.0 L137.4,441.0 L137.4,439.0 L137.4,437.0 L137.4,435.0 L137.4,433.0 L137.4,431.0 L137.4,429.0 L137.4,427.0 L137.3,425.0 L137.3,423.0 L137.3,421.0 L137.3,419.0 L137.3,417.0 L137.3,415.0 L137.3,413.0 L137.3,411.0 L137.3,409.0 L137.3,407.0 L137.3,405.0 L137.3,403.0 L137.3,401.0 L137.3,399.0 L137.3,397.0 L137.3,395.0 L137.3,393.0 L137.3,391.0 L137.3,389.0 L137.3,387.0 L137.3,385.0 L137.3,383.0 L137.3,381.0 L137.3,379.0 L137.3,377.0 L137.3,375.0 L137.3,373.0 L137.3,371.0 L137.3,370.9 L137.3,368.9 L137.4,366.9 L137.5,364.9 L137.6,362.9 L137.7,360.9 L137.7,358.9 L137.8,356.9 L137.9,354.9 L138.0,352.9 L138.1,351.0 L138.1,349.0 L138.2,347.0 L138.2,346.0 L138.2,345.0 L138.2,343.0 L138.2,341.0 L138.2,339.0 L138.2,337.0 L138.2,335.0 L138.2,333.0 L138.2,331.0 L138.2,329.0 L138.2,327.0 L138.2,325.0 L138.2,323.0 L138.2,321.0 L138.2,319.0 L138.2,317.0 L138.2,315.0 L138.2,313.0 L138.2,311.0 L138.2,309.0 L138.2,307.0 L138.2,305.0 L138.2,303.0 L138.2,301.0 L138.2,299.0 L138.2,297.0 L138.2,295.0 L138.2,293.0 L138.2,291.0 L138.2,289.0 L138.2,287.0 L138.2,285.0 L138.2,283.0 L138.3,281.0 L138.2,281.0 L138.2,279.0 L138.2,277.0 L138.2,275.0 L138.2,273.0 L138.2,271.0 L138.2,269.0 L138.2,267.0 L138.2,265.0 L138.2,263.0 L138.2,261.0 L138.2,259.0 L138.2,257.0 L138.1,255.0 L138.1,253.0 L138.1,251.0 L138.1,249.0 L138.1,247.0 L138.1,245.0 L138.1,243.0 L138.1,241.0 L138.1,239.0 L138.1,237.0 L138.1,235.0 L138.1,233.0 L138.0,231.0 L138.0,229.0 L138.0,227.0 L138.0,225.0 L138.0,223.0 L138.0,221.0 L138.0,219.0 L138.0,217.0 L138.0,215.0 L138.0,213.0 L138.0,211.0 L138.0,209.0 L138.0,207.0 L137.9,205.0 L137.9,203.0 L137.9,201.0 L137.9,199.0 L137.9,197.0 L137.9,195.0 L137.9,193.0 L137.9,191.0 L137.9,189.0 L137.9,187.0 L137.9,185.0 L137.9,183.0 L137.8,181.0 L137.8,179.0 L137.8,177.0 L137.8,175.0 L137.8,173.0 L137.8,171.0 L137.8,169.0 L137.8,167.0 L137.8,165.0 L137.8,163.0 L137.8,161.0 L137.8,159.0 L137.8,157.0 L137.7,155.0 L137.7,153.0 L137.7,151.0 L137.7,149.0 L137.7,147.0 L137.7,145.0 L137.7,143.0 L137.7,141.0 L137.7,139.0 L137.7,137.0 L137.7,135.0 L137.7,133.0 L137.6,131.0 L137.6,129.0 L137.6,127.0 L137.6,125.0 L137.6,123.0 L137.6,121.0 L137.6,119.0 L137.6,117.0 L137.6,115.0 L137.6,113.0 L137.6,111.0 L137.6,109.0 L137.6,107.0 L137.5,105.0 L137.5,103.0 L137.5,101.0 L137.5,99.0 L137.5,97.0 L137.5,95.0 L137.5,93.0 L137.5,91.0 L137.5,89.0 L137.5,87.0 L137.5,85.0 L137.5,83.0 L137.5,81.0 L137.5,81.0 L137.6,79.0 L137.7,77.0 L137.9,75.0 L138.1,73.0 L138.2,71.0 L138.4,69.0 L138.8,67.0Z" fill="rgb(255,255,255)"/>
<path d="M207.0,65.0 L207.6,67.0 L207.8,69.0 L208.0,71.0 L208.1,73.0 L208.2,75.0 L208.2,77.0 L208.3,79.0 L208.2,81.0 L208.2,81.1 L208.3,83.0 L208.3,85.0 L208.3,87.0 L208.4,89.0 L208.4,91.0 L208.4,93.0 L208.4,95.0 L208.5,97.0 L208.5,99.0 L208.5,101.0 L208.5,103.0 L208.6,105.0 L208.6,107.0 L208.6,109.0 L208.7,111.0 L208.7,113.0 L208.7,115.0 L208.7,117.0 L208.8,119.0 L208.8,121.0 L208.8,123.0 L208.8,125.0 L208.9,127.0 L208.9,129.0 L208.9,131.0 L209.0,133.0 L209.0,135.0 L209.0,137.0 L209.0,139.0 L209.1,141.0 L209.1,143.0 L209.1,145.0 L209.1,147.0 L209.2,149.0 L209.2,151.0 L209.2,153.0 L209.2,155.0 L209.3,157.0 L209.3,159.0 L209.3,161.0 L209.4,163.0 L209.4,165.0 L209.4,167.0 L209.4,169.0 L209.5,171.0 L209.5,173.0 L209.5,175.0 L209.5,177.0 L209.6,179.0 L209.6,181.0 L209.6,183.0 L209.7,185.0 L209.7,187.0 L209.7,189.0 L209.7,191.0 L209.8,193.0 L209.8,195.0 L209.8,197.0 L209.8,199.0 L209.9,201.0 L209.9,203.0 L209.9,205.0 L210.0,207.0 L210.0,209.0 L210.0,211.0 L210.0,213.0 L210.1,215.0 L210.1,217.0 L210.1,219.0 L210.1,221.0 L210.2,223.0 L210.2,225.0 L210.2,227.0 L210.2,229.0 L210.3,231.0 L210.3,233.0 L210.3,235.0 L210.4,237.0 L210.4,239.0 L210.4,241.0 L210.4,243.0 L210.5,245.0 L210.5,247.0 L210.5,249.0 L210.5,251.0 L210.6,253.0 L210.6,255.0 L210.6,257.0 L210.7,259.0 L210.7,261.0 L210.7,263.0 L210.7,265.0 L210.8,267.0 L210.8,269.0 L210.8,271.0 L210.8,273.0 L210.9,275.0 L210.9,277.0 L210.9,279.0 L210.9,281.0 L210.9,281.0 L211.0,283.0 L211.0,285.0 L211.0,287.0 L211.0,289.0 L211.0,291.0 L211.0,293.0 L211.1,295.0 L211.1,297.0 L211.1,299.0 L211.1,301.0 L211.1,303.0 L211.1,305.0 L211.2,307.0 L211.2,309.0 L211.2,311.0 L211.2,313.0 L211.2,315.0 L211.2,317.0 L211.3,319.0 L211.3,321.0 L211.3,323.0 L211.3,325.0 L211.3,327.0 L211.3,329.0 L211.4,331.0 L211.4,333.0 L211.4,335.0 L211.4,337.0 L211.4,339.0 L211.3,341.0 L211.2,343.0 L211.1,345.0 L210.9,347.0 L210.7,349.0 L210.4,351.0 L209.9,353.0 L209.8,353.0 L209.8,353.0 L209.7,353.0 L209.1,351.0 L208.8,349.0 L208.6,347.0 L208.4,345.0 L208.2,343.0 L208.1,341.0 L207.9,339.0 L207.9,337.0 L207.9,335.0 L207.9,333.0 L207.9,331.0 L207.8,329.0 L207.8,327.0 L207.8,325.0 L207.8,323.0 L207.8,321.0 L207.8,319.0 L207.7,317.0 L207.7,315.0 L207.7,313.0 L207.7,311.0 L207.7,309.0 L207.7,307.0 L207.6,305.0 L207.6,303.0 L207.6,301.0 L207.6,299.0 L207.6,297.0 L207.6,295.0 L207.5,293.0 L207.5,291.0 L207.5,289.0 L207.5,287.0 L207.5,285.0 L207.5,283.0 L207.5,281.0 L207.4,281.0 L207.4,279.0 L207.4,277.0 L207.4,275.0 L207.3,273.0 L207.3,271.0 L207.3,269.0 L207.3,267.0 L207.2,265.0 L207.2,263.0 L207.2,261.0 L207.2,259.0 L207.1,257.0 L207.1,255.0 L207.1,253.0 L207.0,251.0 L207.0,249.0 L207.0,247.0 L207.0,245.0 L206.9,243.0 L206.9,241.0 L206.9,239.0 L206.9,237.0 L206.8,235.0 L206.8,233.0 L206.8,231.0 L206.7,229.0 L206.7,227.0 L206.7,225.0 L206.7,223.0 L206.6,221.0 L206.6,219.0 L206.6,217.0 L206.6,215.0 L206.5,213.0 L206.5,211.0 L206.5,209.0 L206.5,207.0 L206.4,205.0 L206.4,203.0 L206.4,201.0 L206.3,199.0 L206.3,197.0 L206.3,195.0 L206.3,193.0 L206.2,191.0 L206.2,189.0 L206.2,187.0 L206.2,185.0 L206.1,183.0 L206.1,181.0 L206.1,179.0 L206.0,177.0 L206.0,175.0 L206.0,173.0 L206.0,171.0 L205.9,169.0 L205.9,167.0 L205.9,165.0 L205.9,163.0 L205.8,161.0 L205.8,159.0 L205.8,157.0 L205.7,155.0 L205.7,153.0 L205.7,151.0 L205.7,149.0 L205.6,147.0 L205.6,145.0 L205.6,143.0 L205.6,141.0 L205.5,139.0 L205.5,137.0 L205.5,135.0 L205.5,133.0 L205.4,131.0 L205.4,129.0 L205.4,127.0 L205.3,125.0 L205.3,123.0 L205.3,121.0 L205.3,119.0 L205.2,117.0 L205.2,115.0 L205.2,113.0 L205.2,111.0 L205.1,109.0 L205.1,107.0 L205.1,105.0 L205.0,103.0 L205.0,101.0 L205.0,99.0 L205.0,97.0 L204.9,95.0 L204.9,93.0 L204.9,91.0 L204.9,89.0 L204.8,87.0 L204.8,85.0 L204.8,83.0 L204.8,80.9 L204.8,80.9 L204.8,78.9 L205.0,76.9 L205.2,74.9 L205.4,73.0 L205.7,71.0 L205.9,69.0 L206.3,67.0 L207.0,65.0Z" fill="rgb(255,255,255)"/>
<linearGradient id="lg1" gradientUnits="userSpaceOnUse" x1="0" y1="64" x2="0" y2="778"><stop offset="0.000" stop-color="rgb(255,255,255)"/><stop offset="0.388" stop-color="rgb(255,255,255)"/><stop offset="0.472" stop-color="rgb(254,254,254)"/><stop offset="1.000" stop-color="rgb(237,237,237)"/></linearGradient>
<path d="M321.0,64.0 L321.9,66.0 L322.2,68.0 L322.5,70.0 L322.7,72.0 L322.9,74.0 L323.0,76.1 L323.2,78.1 L323.1,80.1 L323.1,81.1 L323.1,82.0 L323.1,84.0 L323.2,86.0 L323.2,88.0 L323.2,90.0 L323.2,92.0 L323.2,94.0 L323.3,96.0 L323.3,98.0 L323.3,100.0 L323.3,102.0 L323.3,104.0 L323.4,106.0 L323.4,108.0 L323.4,110.0 L323.4,112.0 L323.4,114.0 L323.5,116.0 L323.5,118.0 L323.5,120.0 L323.5,122.0 L323.6,124.0 L323.6,126.0 L323.6,128.0 L323.6,130.0 L323.6,132.0 L323.7,134.0 L323.7,136.0 L323.7,138.0 L323.7,140.0 L323.7,142.0 L323.8,144.0 L323.8,146.0 L323.8,148.0 L323.8,150.0 L323.8,152.0 L323.9,154.0 L323.9,156.0 L323.9,158.0 L323.9,160.0 L324.0,162.0 L324.0,164.0 L324.0,166.0 L324.0,168.0 L324.0,170.0 L324.1,172.0 L324.1,174.0 L324.1,176.0 L324.1,178.0 L324.1,180.0 L324.2,182.0 L324.2,184.0 L324.2,186.0 L324.2,188.0 L324.2,190.0 L324.3,192.0 L324.3,194.0 L324.3,196.0 L324.3,198.0 L324.3,200.0 L324.4,202.0 L324.4,204.0 L324.4,206.0 L324.4,208.0 L324.5,210.0 L324.5,212.0 L324.5,214.0 L324.5,216.0 L324.5,218.0 L324.6,220.0 L324.6,222.0 L324.6,224.0 L324.6,226.0 L324.6,228.0 L324.7,230.0 L324.7,232.0 L324.7,234.0 L324.7,236.0 L324.7,238.0 L324.8,240.0 L324.8,242.0 L324.8,244.0 L324.8,246.0 L324.9,248.0 L324.9,250.0 L324.9,252.0 L324.9,254.0 L324.9,256.0 L325.0,258.0 L325.0,260.0 L325.0,262.0 L325.0,264.0 L325.0,266.0 L325.1,268.0 L325.1,270.0 L325.1,272.0 L325.1,274.0 L325.1,276.0 L325.2,278.0 L325.2,280.0 L325.2,281.0 L325.2,281.9 L325.2,283.9 L325.3,285.9 L325.3,287.9 L325.3,289.9 L325.4,291.9 L325.4,293.9 L325.4,295.9 L325.4,297.9 L325.5,299.9 L325.5,301.9 L325.5,303.9 L325.5,305.9 L325.6,307.9 L325.6,309.9 L325.6,311.9 L325.7,313.9 L325.7,315.9 L325.7,317.9 L325.7,319.9 L325.8,321.9 L325.8,323.9 L325.8,325.9 L325.8,327.9 L325.9,329.9 L325.9,331.9 L325.9,333.9 L326.0,335.9 L326.0,337.9 L326.0,339.0 L326.1,339.5 L326.5,341.5 L326.8,343.5 L327.2,345.4 L327.5,347.4 L327.9,349.4 L328.2,351.3 L328.5,352.6 L328.5,353.8 L328.5,355.8 L328.5,357.8 L328.5,359.8 L328.5,361.8 L328.5,363.8 L328.5,365.8 L328.5,367.8 L328.5,369.8 L328.5,371.0 L328.5,371.7 L328.5,373.7 L328.6,375.7 L328.6,377.7 L328.7,379.7 L328.7,381.7 L328.7,383.7 L328.8,385.7 L328.8,387.7 L328.8,389.7 L328.9,391.7 L328.9,393.7 L328.9,395.7 L329.0,397.7 L329.0,399.7 L329.1,401.7 L329.1,403.7 L329.1,405.7 L329.2,407.7 L329.2,409.7 L329.2,411.7 L329.3,413.7 L329.3,415.7 L329.3,417.7 L329.4,419.7 L329.4,421.7 L329.5,423.7 L329.5,425.7 L329.5,427.7 L329.6,429.7 L329.6,431.7 L329.6,433.7 L329.7,435.7 L329.7,437.7 L329.7,439.7 L329.8,441.7 L329.8,443.7 L329.9,445.7 L329.9,447.7 L329.9,449.7 L330.0,451.7 L330.0,453.7 L330.0,455.7 L330.1,457.7 L330.1,459.7 L330.1,461.7 L330.2,463.7 L330.2,465.7 L330.3,467.7 L330.3,469.7 L330.3,471.7 L330.4,473.7 L330.4,475.7 L330.4,477.7 L330.5,479.7 L330.5,481.0 L330.5,481.7 L330.5,483.7 L330.5,485.7 L330.5,487.7 L330.5,489.7 L330.6,491.7 L330.6,493.7 L330.6,495.7 L330.6,497.7 L330.6,499.7 L330.6,501.7 L330.6,503.7 L330.6,505.7 L330.6,507.7 L330.7,509.7 L330.7,511.7 L330.7,513.7 L330.7,515.7 L330.7,517.7 L330.7,519.7 L330.7,521.7 L330.7,523.7 L330.7,525.7 L330.8,527.7 L330.8,529.7 L330.8,531.7 L330.8,533.7 L330.8,535.7 L330.8,537.7 L330.8,539.7 L330.8,541.7 L330.8,543.7 L330.9,545.7 L330.9,547.7 L330.9,549.7 L330.9,551.7 L330.9,553.7 L330.9,555.7 L330.9,557.7 L330.9,559.7 L330.9,561.7 L331.0,563.7 L331.0,565.7 L331.0,567.7 L331.0,569.7 L331.0,571.0 L331.0,571.7 L331.0,573.7 L331.1,575.7 L331.1,577.7 L331.1,579.7 L331.2,581.7 L331.2,583.7 L331.2,585.7 L331.3,587.7 L331.3,589.7 L331.3,591.7 L331.4,593.7 L331.4,595.7 L331.4,597.7 L331.5,599.7 L331.5,601.7 L331.5,603.7 L331.6,605.7 L331.6,607.7 L331.6,609.7 L331.7,611.7 L331.7,613.7 L331.7,615.7 L331.8,617.7 L331.8,619.7 L331.8,621.7 L331.9,623.7 L331.9,625.7 L331.9,627.7 L332.0,629.7 L332.0,631.7 L332.0,633.7 L332.1,635.7 L332.1,637.7 L332.1,639.7 L332.2,641.7 L332.2,643.7 L332.2,645.7 L332.3,647.7 L332.3,649.7 L332.3,651.7 L332.4,653.7 L332.4,655.7 L332.4,657.7 L332.5,659.7 L332.5,661.0 L332.5,661.7 L332.5,663.7 L332.6,665.7 L332.6,667.7 L332.6,669.7 L332.6,671.7 L332.7,673.7 L332.7,675.7 L332.7,677.7 L332.7,679.7 L332.8,681.7 L332.8,683.7 L332.8,685.7 L332.8,687.7 L332.9,689.7 L332.9,691.7 L332.9,693.7 L332.9,695.7 L333.0,697.7 L333.0,699.7 L333.0,701.7 L333.0,703.7 L333.1,705.7 L333.1,707.7 L333.1,709.7 L333.2,711.7 L333.2,713.7 L333.2,715.7 L333.2,717.7 L333.3,719.7 L333.3,721.7 L333.3,723.7 L333.3,725.7 L333.4,727.7 L333.4,729.7 L333.4,731.7 L333.4,733.7 L333.5,735.7 L333.5,737.7 L333.5,739.7 L333.5,741.7 L333.6,743.7 L333.6,745.7 L333.6,747.7 L333.6,749.7 L333.7,751.7 L333.7,753.7 L333.7,755.7 L333.7,757.7 L333.8,759.7 L333.8,761.7 L333.8,763.7 L333.8,765.7 L333.9,767.7 L333.9,769.7 L333.9,771.7 L333.9,773.7 L334.0,775.7 L334.0,777.7 L334.0,778.0 L329.0,778.0 L329.0,777.7 L329.0,775.7 L328.9,773.7 L328.9,771.7 L328.9,769.7 L328.9,767.7 L328.8,765.7 L328.8,763.7 L328.8,761.7 L328.8,759.7 L328.7,757.7 L328.7,755.7 L328.7,753.7 L328.7,751.7 L328.6,749.7 L328.6,747.8 L328.6,745.8 L328.6,743.8 L328.5,741.8 L328.5,739.8 L328.5,737.8 L328.5,735.8 L328.4,733.8 L328.4,731.8 L328.4,729.8 L328.4,727.8 L328.3,725.8 L328.3,723.8 L328.3,721.8 L328.3,719.8 L328.2,717.8 L328.2,715.8 L328.2,713.8 L328.2,711.8 L328.1,709.8 L328.1,707.8 L328.1,705.8 L328.0,703.8 L328.0,701.8 L328.0,699.8 L328.0,697.8 L327.9,695.8 L327.9,693.8 L327.9,691.8 L327.9,689.8 L327.8,687.8 L327.8,685.8 L327.8,683.8 L327.8,681.8 L327.7,679.8 L327.7,677.8 L327.7,675.8 L327.7,673.8 L327.6,671.8 L327.6,669.8 L327.6,667.8 L327.6,665.8 L327.5,663.8 L327.5,661.8 L327.5,661.0 L327.5,659.8 L327.4,657.8 L327.4,655.8 L327.4,653.8 L327.3,651.8 L327.3,649.8 L327.3,647.8 L327.2,645.8 L327.2,643.8 L327.2,641.8 L327.1,639.8 L327.1,637.8 L327.1,635.8 L327.0,633.8 L327.0,631.8 L327.0,629.8 L326.9,627.8 L326.9,625.8 L326.9,623.8 L326.8,621.8 L326.8,619.8 L326.8,617.8 L326.7,615.8 L326.7,613.8 L326.7,611.8 L326.6,609.8 L326.6,607.8 L326.6,605.8 L326.5,603.8 L326.5,601.8 L326.5,599.8 L326.4,597.8 L326.4,595.8 L326.4,593.8 L326.3,591.8 L326.3,589.8 L326.3,587.8 L326.2,585.8 L326.2,583.8 L326.2,581.8 L326.1,579.8 L326.1,577.8 L326.1,575.8 L326.0,573.8 L326.0,571.8 L326.0,571.0 L326.0,569.8 L326.0,567.8 L326.0,565.8 L326.0,563.8 L325.9,561.8 L325.9,559.8 L325.9,557.8 L325.9,555.8 L325.9,553.8 L325.9,551.8 L325.9,549.8 L325.9,547.8 L325.9,545.8 L325.8,543.8 L325.8,541.8 L325.8,539.8 L325.8,537.8 L325.8,535.8 L325.8,533.8 L325.8,531.8 L325.8,529.8 L325.8,527.8 L325.7,525.8 L325.7,523.8 L325.7,521.8 L325.7,519.8 L325.7,517.8 L325.7,515.8 L325.7,513.8 L325.7,511.8 L325.7,509.8 L325.6,507.8 L325.6,505.8 L325.6,503.8 L325.6,501.8 L325.6,499.8 L325.6,497.8 L325.6,495.8 L325.6,493.8 L325.6,491.8 L325.5,489.8 L325.5,487.8 L325.5,485.8 L325.5,483.8 L325.5,481.8 L325.5,481.0 L325.5,479.8 L325.4,477.8 L325.4,475.8 L325.4,473.8 L325.3,471.8 L325.3,469.8 L325.3,467.8 L325.2,465.8 L325.2,463.8 L325.2,461.8 L325.1,459.8 L325.1,457.8 L325.0,455.8 L325.0,453.8 L325.0,451.8 L324.9,449.8 L324.9,447.8 L324.9,445.8 L324.8,443.8 L324.8,441.8 L324.8,439.8 L324.7,437.8 L324.7,435.8 L324.6,433.8 L324.6,431.8 L324.6,429.8 L324.5,427.8 L324.5,425.8 L324.5,423.8 L324.4,421.8 L324.4,419.8 L324.4,417.8 L324.3,415.8 L324.3,413.8 L324.2,411.8 L324.2,409.8 L324.2,407.8 L324.1,405.8 L324.1,403.8 L324.1,401.8 L324.0,399.8 L324.0,397.8 L324.0,395.8 L323.9,393.8 L323.9,391.8 L323.8,389.8 L323.8,387.8 L323.8,385.8 L323.7,383.8 L323.7,381.8 L323.7,379.8 L323.6,377.8 L323.6,375.8 L323.6,373.8 L323.5,371.8 L323.5,371.0 L323.5,369.8 L323.5,367.8 L323.5,365.8 L323.5,363.8 L323.5,361.8 L323.5,359.8 L323.5,357.8 L323.5,355.8 L323.5,353.8 L323.5,353.4 L323.3,352.2 L323.0,350.2 L322.6,348.3 L322.3,346.3 L321.9,344.3 L321.6,342.4 L321.2,340.4 L321.0,339.0 L321.0,338.0 L321.0,336.0 L320.9,334.0 L320.9,332.0 L320.9,330.0 L320.8,328.0 L320.8,326.0 L320.8,324.0 L320.8,322.0 L320.7,320.0 L320.7,318.0 L320.7,316.0 L320.7,314.0 L320.6,312.0 L320.6,310.0 L320.6,308.0 L320.5,306.0 L320.5,304.0 L320.5,302.0 L320.5,300.0 L320.4,298.0 L320.4,296.0 L320.4,294.0 L320.4,292.0 L320.3,290.0 L320.3,288.0 L320.3,286.0 L320.2,284.0 L320.2,282.0 L320.2,281.0 L320.2,280.0 L320.2,278.0 L320.1,276.0 L320.1,274.0 L320.1,272.0 L320.1,270.0 L320.1,268.0 L320.0,266.0 L320.0,264.0 L320.0,262.0 L320.0,260.0 L320.0,258.0 L319.9,256.0 L319.9,254.0 L319.9,252.0 L319.9,250.0 L319.9,248.0 L319.8,246.0 L319.8,244.0 L319.8,242.0 L319.8,240.0 L319.7,238.0 L319.7,236.0 L319.7,234.0 L319.7,232.0 L319.7,230.0 L319.6,228.0 L319.6,226.0 L319.6,224.0 L319.6,222.0 L319.6,220.0 L319.5,218.0 L319.5,216.0 L319.5,214.0 L319.5,212.0 L319.5,210.0 L319.4,208.0 L319.4,206.0 L319.4,204.0 L319.4,202.0 L319.3,200.0 L319.3,198.0 L319.3,196.0 L319.3,194.0 L319.3,192.0 L319.2,190.0 L319.2,188.0 L319.2,186.0 L319.2,184.0 L319.2,182.0 L319.1,180.0 L319.1,178.0 L319.1,176.0 L319.1,174.0 L319.1,172.0 L319.0,170.0 L319.0,168.0 L319.0,166.0 L319.0,164.0 L319.0,162.0 L318.9,160.0 L318.9,158.0 L318.9,156.0 L318.9,154.0 L318.8,152.0 L318.8,150.0 L318.8,148.0 L318.8,146.0 L318.8,144.0 L318.7,142.0 L318.7,140.0 L318.7,138.0 L318.7,136.0 L318.7,134.0 L318.6,132.0 L318.6,130.0 L318.6,128.0 L318.6,126.0 L318.6,124.0 L318.5,122.0 L318.5,120.0 L318.5,118.0 L318.5,116.0 L318.4,114.0 L318.4,112.0 L318.4,110.0 L318.4,108.0 L318.4,106.0 L318.3,104.0 L318.3,102.0 L318.3,100.0 L318.3,98.0 L318.3,96.0 L318.2,94.0 L318.2,92.0 L318.2,90.0 L318.2,88.0 L318.2,86.0 L318.1,84.0 L318.1,82.0 L318.1,80.9 L318.1,79.9 L318.2,77.9 L318.4,75.9 L318.7,73.9 L318.9,72.0 L319.2,70.0 L319.6,68.0 L320.0,66.0 L321.0,64.0Z" fill="url(#lg1)"/>
<path d="M367.6,65.0 L368.2,67.0 L368.5,69.0 L368.7,71.0 L368.9,73.0 L369.0,75.0 L369.1,77.0 L369.3,79.0 L369.2,81.0 L369.2,81.0 L369.3,83.0 L369.3,85.0 L369.3,87.0 L369.4,89.0 L369.4,91.0 L369.4,93.0 L369.5,95.0 L369.5,97.0 L369.5,99.0 L369.6,101.0 L369.6,103.0 L369.6,105.0 L369.7,107.0 L369.7,109.0 L369.7,111.0 L369.8,113.0 L369.8,115.0 L369.8,117.0 L369.9,119.0 L369.9,121.0 L369.9,123.0 L370.0,125.0 L370.0,127.0 L370.0,129.0 L370.0,131.0 L370.1,133.0 L370.1,135.0 L370.1,137.0 L370.2,139.0 L370.2,141.0 L370.2,143.0 L370.3,145.0 L370.3,147.0 L370.3,149.0 L370.4,151.0 L370.4,153.0 L370.4,155.0 L370.5,157.0 L370.5,159.0 L370.5,161.0 L370.6,163.0 L370.6,165.0 L370.6,167.0 L370.7,169.0 L370.7,171.0 L370.7,173.0 L370.8,175.0 L370.8,177.0 L370.8,179.0 L370.8,181.0 L370.9,183.0 L370.9,185.0 L370.9,187.0 L371.0,189.0 L371.0,191.0 L371.0,193.0 L371.1,195.0 L371.1,197.0 L371.1,199.0 L371.2,201.0 L371.2,203.0 L371.2,205.0 L371.3,207.0 L371.3,209.0 L371.3,211.0 L371.4,213.0 L371.4,215.0 L371.4,217.0 L371.5,219.0 L371.5,221.0 L371.5,223.0 L371.6,225.0 L371.6,227.0 L371.6,229.0 L371.6,231.0 L371.7,233.0 L371.7,235.0 L371.7,237.0 L371.8,239.0 L371.8,241.0 L371.8,243.0 L371.9,245.0 L371.9,247.0 L371.9,249.0 L372.0,250.9 L372.0,252.9 L372.0,254.9 L372.1,256.9 L372.1,258.9 L372.1,260.9 L372.2,262.9 L372.2,264.9 L372.2,266.9 L372.3,268.9 L372.3,270.9 L372.3,272.9 L372.4,274.9 L372.4,276.9 L372.4,278.9 L372.4,280.9 L372.4,281.0 L372.5,283.0 L372.5,285.0 L372.5,287.0 L372.5,289.0 L372.6,291.0 L372.6,293.0 L372.6,295.0 L372.6,297.0 L372.6,299.0 L372.7,301.0 L372.7,303.0 L372.7,305.0 L372.7,307.0 L372.8,309.0 L372.8,311.0 L372.8,313.0 L372.8,315.0 L372.8,317.0 L372.9,319.0 L372.9,321.0 L372.9,323.0 L372.9,325.0 L373.0,327.0 L373.0,329.0 L373.0,331.0 L373.0,333.0 L373.0,335.0 L373.1,337.0 L373.1,339.0 L373.0,341.0 L372.9,343.0 L372.7,345.0 L372.6,347.0 L372.4,349.0 L372.1,351.0 L371.6,353.0 L371.5,353.0 L371.5,353.0 L371.4,353.0 L370.8,351.0 L370.5,349.0 L370.3,347.0 L370.1,345.0 L369.9,343.0 L369.7,341.0 L369.6,339.0 L369.6,337.0 L369.5,335.0 L369.5,333.0 L369.5,331.0 L369.5,329.0 L369.5,327.0 L369.4,325.0 L369.4,323.0 L369.4,321.0 L369.4,319.0 L369.3,317.0 L369.3,315.0 L369.3,313.0 L369.3,311.0 L369.3,309.0 L369.2,307.0 L369.2,305.0 L369.2,303.0 L369.2,301.0 L369.1,299.0 L369.1,297.0 L369.1,295.0 L369.1,293.0 L369.1,291.0 L369.0,289.0 L369.0,287.0 L369.0,285.0 L369.0,283.0 L369.0,281.0 L368.9,281.0 L368.9,279.0 L368.9,277.0 L368.9,275.0 L368.8,273.0 L368.8,271.0 L368.8,269.0 L368.7,267.0 L368.7,265.0 L368.7,263.0 L368.6,261.0 L368.6,259.0 L368.6,257.0 L368.5,255.0 L368.5,253.0 L368.5,251.0 L368.4,249.0 L368.4,247.0 L368.4,245.0 L368.3,243.0 L368.3,241.0 L368.3,239.0 L368.2,237.0 L368.2,235.0 L368.2,233.0 L368.1,231.0 L368.1,229.0 L368.1,227.0 L368.1,225.0 L368.0,223.0 L368.0,221.0 L368.0,219.0 L367.9,217.0 L367.9,215.0 L367.9,213.0 L367.8,211.0 L367.8,209.0 L367.8,207.0 L367.7,205.0 L367.7,203.0 L367.7,201.0 L367.6,199.0 L367.6,197.0 L367.6,195.0 L367.5,193.0 L367.5,191.0 L367.5,189.0 L367.4,187.0 L367.4,185.0 L367.4,183.0 L367.4,181.0 L367.3,179.0 L367.3,177.0 L367.3,175.0 L367.2,173.0 L367.2,171.0 L367.2,169.0 L367.1,167.0 L367.1,165.0 L367.1,163.0 L367.0,161.0 L367.0,159.0 L367.0,157.0 L366.9,155.0 L366.9,153.0 L366.9,151.0 L366.8,149.0 L366.8,147.0 L366.8,145.0 L366.7,143.0 L366.7,141.0 L366.7,139.0 L366.6,137.0 L366.6,135.0 L366.6,133.0 L366.6,131.0 L366.5,129.0 L366.5,127.0 L366.5,125.0 L366.4,123.0 L366.4,121.0 L366.4,119.0 L366.3,117.0 L366.3,115.0 L366.3,113.0 L366.2,111.0 L366.2,109.0 L366.2,107.0 L366.1,105.0 L366.1,103.0 L366.1,101.0 L366.0,99.0 L366.0,97.0 L366.0,95.0 L365.9,93.0 L365.9,91.0 L365.9,89.0 L365.8,87.0 L365.8,85.0 L365.8,83.0 L365.8,81.0 L365.8,81.0 L365.8,79.0 L365.9,77.0 L366.1,75.0 L366.2,73.0 L366.4,71.0 L366.6,69.0 L366.9,67.0 L367.6,65.0Z" fill="rgb(243,243,243)"/>
<path d="M433.3,67.0 L433.8,69.0 L433.9,71.0 L433.9,73.0 L434.0,75.1 L434.0,77.1 L434.0,79.1 L434.0,81.1 L434.0,81.1 L434.0,83.0 L434.1,85.0 L434.1,87.0 L434.1,89.0 L434.2,91.0 L434.2,93.0 L434.2,95.0 L434.3,97.0 L434.3,98.9 L434.3,100.9 L434.4,102.9 L434.4,104.9 L434.4,106.9 L434.5,108.9 L434.5,110.9 L434.5,112.9 L434.6,114.9 L434.6,116.9 L434.6,118.9 L434.7,120.9 L434.7,122.9 L434.7,124.9 L434.8,126.9 L434.8,128.9 L434.8,130.9 L434.9,132.9 L434.9,134.9 L434.9,136.9 L435.0,138.9 L435.0,140.9 L435.0,142.9 L435.1,144.9 L435.1,146.9 L435.1,148.9 L435.2,150.9 L435.2,152.9 L435.2,154.9 L435.3,156.9 L435.3,158.9 L435.3,160.9 L435.4,162.9 L435.4,164.9 L435.4,166.9 L435.5,168.9 L435.5,170.9 L435.5,172.9 L435.6,174.9 L435.6,176.9 L435.6,178.9 L435.6,180.9 L435.7,182.9 L435.7,184.9 L435.7,186.9 L435.8,188.9 L435.8,190.9 L435.8,192.9 L435.9,194.9 L435.9,196.9 L435.9,198.9 L436.0,200.9 L436.0,202.9 L436.0,204.9 L436.1,206.9 L436.1,208.9 L436.1,210.9 L436.2,212.9 L436.2,214.9 L436.2,216.9 L436.3,218.9 L436.3,220.9 L436.3,222.9 L436.4,224.9 L436.4,226.9 L436.4,228.9 L436.5,230.9 L436.5,232.9 L436.5,234.9 L436.6,236.9 L436.6,238.9 L436.6,240.9 L436.7,242.9 L436.7,244.9 L436.7,246.9 L436.8,248.9 L436.8,250.9 L436.8,252.9 L436.9,254.9 L436.9,256.9 L436.9,258.9 L437.0,260.9 L437.0,262.9 L437.0,264.9 L437.1,266.9 L437.1,268.9 L437.1,270.9 L437.2,272.9 L437.2,274.9 L437.2,276.9 L437.3,278.9 L437.3,280.9 L437.3,281.0 L437.3,282.9 L437.4,284.9 L437.4,286.9 L437.4,288.9 L437.5,290.9 L437.5,292.9 L437.5,294.9 L437.6,296.9 L437.6,298.9 L437.6,300.9 L437.7,302.9 L437.7,304.9 L437.7,306.9 L437.8,308.9 L437.8,310.9 L437.8,312.9 L437.9,314.9 L437.9,316.9 L438.0,318.9 L438.0,320.9 L438.0,322.9 L438.1,324.9 L438.1,326.9 L438.1,328.9 L438.2,330.9 L438.2,332.9 L438.2,334.9 L438.3,336.9 L438.2,338.9 L438.1,340.9 L438.0,342.9 L437.9,344.9 L437.7,346.9 L437.5,348.9 L437.1,350.9 L437.0,351.0 L437.0,351.0 L436.9,350.9 L436.4,348.9 L436.1,347.0 L435.9,345.0 L435.7,343.0 L435.6,341.0 L435.4,339.0 L435.3,337.0 L435.2,335.0 L435.2,333.0 L435.2,331.0 L435.1,329.0 L435.1,327.0 L435.1,325.0 L435.0,323.0 L435.0,321.0 L435.0,319.0 L434.9,317.0 L434.9,315.0 L434.8,313.0 L434.8,311.0 L434.8,309.0 L434.7,307.0 L434.7,305.0 L434.7,303.0 L434.6,301.0 L434.6,299.0 L434.6,297.0 L434.5,295.0 L434.5,293.0 L434.5,291.0 L434.4,289.0 L434.4,287.0 L434.4,285.0 L434.3,283.0 L434.3,281.0 L434.3,281.0 L434.3,279.0 L434.2,277.0 L434.2,275.0 L434.2,273.0 L434.1,271.0 L434.1,269.0 L434.1,267.0 L434.0,265.0 L434.0,263.0 L434.0,261.0 L433.9,259.0 L433.9,257.0 L433.9,255.0 L433.8,253.0 L433.8,251.0 L433.8,249.0 L433.7,247.0 L433.7,245.0 L433.7,243.0 L433.6,241.0 L433.6,239.0 L433.6,237.0 L433.5,235.0 L433.5,233.0 L433.5,231.0 L433.4,229.0 L433.4,227.0 L433.4,225.0 L433.3,223.0 L433.3,221.0 L433.3,219.0 L433.2,217.0 L433.2,215.0 L433.2,213.0 L433.1,211.0 L433.1,209.0 L433.1,207.0 L433.0,205.0 L433.0,203.0 L433.0,201.0 L432.9,199.0 L432.9,197.0 L432.9,195.0 L432.8,193.0 L432.8,191.0 L432.8,189.0 L432.7,187.0 L432.7,185.0 L432.7,183.0 L432.6,181.0 L432.6,179.0 L432.6,177.0 L432.6,175.0 L432.5,173.0 L432.5,171.0 L432.5,169.0 L432.4,167.0 L432.4,165.0 L432.4,163.0 L432.3,161.0 L432.3,159.0 L432.3,157.0 L432.2,155.0 L432.2,153.0 L432.2,151.0 L432.1,149.0 L432.1,147.0 L432.1,145.0 L432.0,143.0 L432.0,141.0 L432.0,139.0 L431.9,137.0 L431.9,135.0 L431.9,133.0 L431.8,131.0 L431.8,129.0 L431.8,127.0 L431.7,125.0 L431.7,123.0 L431.7,121.0 L431.6,119.0 L431.6,117.0 L431.6,115.0 L431.5,113.0 L431.5,111.0 L431.5,109.0 L431.4,107.0 L431.4,105.0 L431.4,103.0 L431.3,101.0 L431.3,99.0 L431.3,97.0 L431.2,95.0 L431.2,93.0 L431.2,91.0 L431.1,89.0 L431.1,87.0 L431.1,85.0 L431.0,83.0 L431.0,80.9 L431.0,80.9 L431.2,78.9 L431.5,76.9 L431.7,74.9 L432.0,72.9 L432.3,70.9 L432.6,69.0 L433.3,67.0Z" fill="rgb(194,194,194)"/>
<path d="M456.0,79.0 L456.3,81.0 L456.5,83.0 L456.7,85.0 L456.8,87.0 L457.0,89.0 L457.1,91.0 L457.1,91.0 L457.2,93.0 L457.2,95.0 L457.2,97.0 L457.2,99.0 L457.2,101.0 L457.2,103.0 L457.2,105.0 L457.3,107.0 L457.3,109.0 L457.3,111.0 L457.3,113.0 L457.3,115.0 L457.3,117.0 L457.3,119.0 L457.4,121.0 L457.4,123.0 L457.4,125.0 L457.4,127.0 L457.4,129.0 L457.4,131.0 L457.4,133.0 L457.5,135.0 L457.5,137.0 L457.5,139.0 L457.5,141.0 L457.5,143.0 L457.5,145.0 L457.5,147.0 L457.5,149.0 L457.6,151.0 L457.6,153.0 L457.6,155.0 L457.6,157.0 L457.6,159.0 L457.6,161.0 L457.6,163.0 L457.7,165.0 L457.7,167.0 L457.7,169.0 L457.7,171.0 L457.7,173.0 L457.7,175.0 L457.7,177.0 L457.8,179.0 L457.8,181.0 L457.8,183.0 L457.8,185.0 L457.8,187.0 L457.8,189.0 L457.8,191.0 L457.8,193.0 L457.9,195.0 L457.9,197.0 L457.9,199.0 L457.9,201.0 L457.9,203.0 L457.9,205.0 L457.9,207.0 L458.0,209.0 L458.0,211.0 L458.0,213.0 L458.0,215.0 L458.0,217.0 L458.0,219.0 L458.0,221.0 L458.1,223.0 L458.1,225.0 L458.1,227.0 L458.1,229.0 L458.1,231.0 L458.1,233.0 L458.1,235.0 L458.1,237.0 L458.2,239.0 L458.2,241.0 L458.2,243.0 L458.2,245.0 L458.2,247.0 L458.2,249.0 L458.2,251.0 L458.3,253.0 L458.3,255.0 L458.3,257.0 L458.3,259.0 L458.3,261.0 L458.3,263.0 L458.3,265.0 L458.4,267.0 L458.4,269.0 L458.4,271.0 L458.4,273.0 L458.4,275.0 L458.4,277.0 L458.4,279.0 L458.4,281.0 L458.4,281.0 L458.5,283.0 L458.5,285.0 L458.6,287.0 L458.6,289.0 L458.7,291.0 L458.7,293.0 L458.7,295.0 L458.8,297.0 L458.8,299.0 L458.9,301.0 L458.9,303.0 L459.0,305.0 L459.0,307.0 L459.0,309.0 L459.1,311.0 L459.1,313.0 L459.2,315.0 L459.2,317.0 L459.3,319.0 L459.3,321.0 L459.3,323.0 L459.4,325.0 L459.4,327.0 L459.4,329.0 L459.4,331.0 L459.4,333.0 L459.4,335.0 L459.3,337.0 L459.3,339.0 L459.2,341.0 L459.0,342.0 L459.0,342.0 L458.8,341.0 L458.6,339.0 L458.4,337.0 L458.3,335.0 L458.2,333.0 L458.1,331.0 L458.0,329.0 L457.9,327.0 L457.9,325.0 L457.8,323.0 L457.8,321.0 L457.8,319.0 L457.7,317.0 L457.7,315.0 L457.6,313.0 L457.6,311.0 L457.5,309.0 L457.5,307.0 L457.5,305.0 L457.4,303.0 L457.4,301.0 L457.3,299.0 L457.3,297.0 L457.2,295.0 L457.2,293.0 L457.2,291.0 L457.1,289.0 L457.1,287.0 L457.0,285.0 L457.0,283.0 L457.0,281.0 L456.9,281.0 L456.9,279.0 L456.9,277.0 L456.9,275.0 L456.9,273.0 L456.9,271.0 L456.9,269.0 L456.9,267.0 L456.8,265.0 L456.8,263.0 L456.8,261.0 L456.8,259.0 L456.8,257.0 L456.8,255.0 L456.8,253.0 L456.7,251.0 L456.7,249.0 L456.7,247.0 L456.7,245.0 L456.7,243.0 L456.7,241.0 L456.7,239.0 L456.6,237.0 L456.6,235.0 L456.6,233.0 L456.6,231.0 L456.6,229.0 L456.6,227.0 L456.6,225.0 L456.6,223.0 L456.5,221.0 L456.5,219.0 L456.5,217.0 L456.5,215.0 L456.5,213.0 L456.5,211.0 L456.5,209.0 L456.4,207.0 L456.4,205.0 L456.4,203.0 L456.4,201.0 L456.4,199.0 L456.4,197.0 L456.4,195.0 L456.3,193.0 L456.3,191.0 L456.3,189.0 L456.3,187.0 L456.3,185.0 L456.3,183.0 L456.3,181.0 L456.3,179.0 L456.2,177.0 L456.2,175.0 L456.2,173.0 L456.2,171.0 L456.2,169.0 L456.2,167.0 L456.2,165.0 L456.1,163.0 L456.1,161.0 L456.1,159.0 L456.1,157.0 L456.1,155.0 L456.1,153.0 L456.1,151.0 L456.0,149.0 L456.0,147.0 L456.0,145.0 L456.0,143.0 L456.0,141.0 L456.0,139.0 L456.0,137.0 L456.0,135.0 L455.9,133.0 L455.9,131.0 L455.9,129.0 L455.9,127.0 L455.9,125.0 L455.9,123.0 L455.9,121.0 L455.8,119.0 L455.8,117.0 L455.8,115.0 L455.8,113.0 L455.8,111.0 L455.8,109.0 L455.8,107.0 L455.7,105.0 L455.7,103.0 L455.7,101.0 L455.7,99.0 L455.7,97.0 L455.7,95.0 L455.7,93.0 L455.7,91.0 L455.7,91.0 L455.7,89.0 L455.7,87.0 L455.7,85.0 L455.7,83.0 L455.8,81.0 L456.0,79.0Z" fill="rgb(107,107,107)"/>
<path d="M513.0,68.0 L513.4,70.0 L513.5,72.0 L513.5,74.1 L513.5,76.1 L513.5,78.1 L513.5,80.1 L513.4,81.1 L513.5,81.9 L513.6,83.9 L513.6,85.9 L513.6,87.9 L513.7,89.9 L513.7,91.9 L513.8,93.9 L513.8,95.9 L513.8,97.9 L513.9,99.9 L513.9,101.9 L514.0,103.9 L514.0,105.9 L514.0,107.9 L514.1,109.9 L514.1,111.9 L514.2,113.9 L514.2,115.9 L514.2,117.9 L514.3,119.9 L514.3,121.9 L514.4,123.9 L514.4,125.9 L514.4,127.9 L514.5,129.9 L514.5,131.9 L514.6,133.9 L514.6,135.9 L514.6,137.9 L514.7,139.9 L514.7,141.9 L514.8,143.9 L514.8,145.9 L514.8,147.9 L514.9,149.9 L514.9,151.9 L515.0,153.9 L515.0,155.9 L515.0,157.9 L515.1,159.9 L515.1,161.9 L515.2,163.9 L515.2,165.9 L515.2,167.9 L515.3,169.9 L515.3,171.9 L515.4,173.9 L515.4,175.9 L515.4,177.9 L515.5,179.9 L515.5,181.9 L515.6,183.9 L515.6,185.9 L515.6,187.9 L515.7,189.9 L515.7,191.9 L515.8,193.9 L515.8,195.9 L515.8,197.9 L515.9,199.9 L515.9,201.9 L516.0,203.9 L516.0,205.9 L516.0,207.9 L516.1,209.9 L516.1,211.9 L516.2,213.9 L516.2,215.9 L516.2,217.9 L516.3,219.9 L516.3,221.9 L516.4,223.9 L516.4,225.9 L516.4,227.9 L516.5,229.9 L516.5,231.9 L516.6,233.9 L516.6,235.9 L516.6,237.9 L516.7,239.9 L516.7,241.9 L516.8,243.9 L516.8,245.9 L516.8,247.9 L516.9,249.9 L516.9,251.9 L517.0,253.9 L517.0,255.9 L517.0,257.9 L517.1,259.9 L517.1,261.9 L517.2,263.9 L517.2,265.9 L517.2,267.9 L517.3,269.9 L517.3,271.9 L517.4,273.9 L517.4,275.9 L517.4,277.9 L517.5,279.9 L517.5,281.0 L517.5,281.9 L517.5,283.9 L517.5,285.9 L517.5,287.9 L517.6,289.9 L517.6,291.9 L517.6,293.9 L517.6,295.9 L517.6,297.9 L517.6,299.9 L517.6,301.9 L517.7,303.9 L517.7,305.9 L517.7,307.9 L517.7,309.9 L517.7,311.9 L517.7,313.9 L517.7,315.9 L517.8,317.9 L517.8,319.9 L517.8,321.9 L517.8,323.9 L517.8,325.9 L517.8,327.9 L517.8,329.9 L517.9,331.9 L517.9,333.9 L517.9,335.9 L517.9,337.9 L517.9,339.9 L517.9,341.9 L517.9,343.9 L518.0,345.9 L518.0,347.9 L518.0,349.9 L518.0,351.0 L515.0,351.0 L515.0,349.9 L515.0,347.9 L515.0,345.9 L514.9,343.9 L514.9,341.9 L514.9,339.9 L514.9,337.9 L514.9,335.9 L514.9,333.9 L514.9,331.9 L514.8,329.9 L514.8,327.9 L514.8,325.9 L514.8,323.9 L514.8,321.9 L514.8,319.9 L514.8,317.9 L514.7,315.9 L514.7,313.9 L514.7,311.9 L514.7,309.9 L514.7,307.9 L514.7,305.9 L514.7,303.9 L514.6,301.9 L514.6,299.9 L514.6,297.9 L514.6,295.9 L514.6,293.9 L514.6,291.9 L514.6,289.9 L514.5,287.9 L514.5,285.9 L514.5,283.9 L514.5,281.9 L514.5,281.0 L514.5,280.0 L514.4,278.0 L514.4,276.0 L514.4,274.0 L514.3,272.0 L514.3,270.0 L514.2,268.0 L514.2,266.0 L514.2,264.0 L514.1,262.0 L514.1,260.0 L514.0,258.0 L514.0,256.0 L514.0,254.0 L513.9,252.0 L513.9,250.0 L513.8,248.0 L513.8,246.0 L513.8,244.0 L513.7,242.0 L513.7,240.0 L513.6,238.0 L513.6,236.0 L513.6,234.0 L513.5,232.0 L513.5,230.0 L513.4,228.0 L513.4,226.0 L513.4,224.0 L513.3,222.0 L513.3,220.0 L513.2,218.0 L513.2,216.0 L513.2,214.0 L513.1,212.0 L513.1,210.0 L513.0,208.0 L513.0,206.0 L513.0,204.0 L512.9,202.0 L512.9,200.0 L512.8,198.0 L512.8,196.0 L512.8,194.0 L512.7,192.0 L512.7,190.0 L512.6,188.0 L512.6,186.0 L512.6,184.0 L512.5,182.0 L512.5,180.0 L512.4,178.0 L512.4,176.0 L512.4,174.0 L512.3,172.0 L512.3,170.0 L512.2,168.0 L512.2,166.0 L512.2,164.0 L512.1,162.0 L512.1,160.0 L512.0,158.0 L512.0,156.0 L512.0,154.0 L511.9,152.0 L511.9,150.0 L511.8,148.0 L511.8,146.0 L511.8,144.0 L511.7,142.0 L511.7,140.0 L511.6,138.0 L511.6,136.0 L511.6,134.0 L511.5,132.0 L511.5,130.0 L511.4,128.0 L511.4,126.0 L511.4,124.0 L511.3,122.0 L511.3,120.0 L511.2,118.0 L511.2,116.0 L511.2,114.0 L511.1,112.0 L511.1,110.0 L511.0,108.0 L511.0,106.0 L511.0,104.0 L510.9,102.0 L510.9,100.0 L510.8,98.0 L510.8,96.0 L510.8,94.0 L510.7,92.0 L510.7,90.0 L510.6,88.0 L510.6,86.0 L510.6,84.0 L510.5,82.0 L510.6,80.9 L510.7,79.9 L511.0,77.9 L511.3,75.9 L511.6,73.9 L511.9,71.9 L512.3,70.0 L513.0,68.0Z" fill="rgb(194,194,194)"/>
<path d="M570.0,66.0 L570.2,68.0 L570.3,70.0 L570.3,72.0 L570.3,74.0 L570.3,76.0 L570.3,78.0 L570.3,80.0 L570.2,81.0 L570.3,82.0 L570.3,84.0 L570.3,86.0 L570.3,88.0 L570.3,90.0 L570.3,92.0 L570.3,94.0 L570.3,96.0 L570.3,98.0 L570.4,100.0 L570.4,102.0 L570.4,104.0 L570.4,106.0 L570.4,108.0 L570.4,110.0 L570.4,112.0 L570.4,114.0 L570.4,116.0 L570.5,118.0 L570.5,120.0 L570.5,122.0 L570.5,124.0 L570.5,126.0 L570.5,128.0 L570.5,130.0 L570.5,132.0 L570.5,134.0 L570.6,136.0 L570.6,138.0 L570.6,140.0 L570.6,142.0 L570.6,144.0 L570.6,146.0 L570.6,148.0 L570.6,150.0 L570.6,152.0 L570.7,154.0 L570.7,156.0 L570.7,158.0 L570.7,160.0 L570.7,162.0 L570.7,164.0 L570.7,166.0 L570.7,168.0 L570.7,170.0 L570.8,172.0 L570.8,174.0 L570.8,176.0 L570.8,178.0 L570.8,180.0 L570.8,182.0 L570.8,184.0 L570.8,186.0 L570.8,188.0 L570.8,190.0 L570.9,192.0 L570.9,194.0 L570.9,196.0 L570.9,198.0 L570.9,200.0 L570.9,202.0 L570.9,204.0 L570.9,206.0 L570.9,208.0 L571.0,210.0 L571.0,212.0 L571.0,214.0 L571.0,216.0 L571.0,218.0 L571.0,220.0 L571.0,222.0 L571.0,224.0 L571.0,226.0 L571.1,228.0 L571.1,230.0 L571.1,232.0 L571.1,234.0 L571.1,236.0 L571.1,238.0 L571.1,240.0 L571.1,242.0 L571.1,244.0 L571.2,246.0 L571.2,248.0 L571.2,250.0 L571.2,252.0 L571.2,254.0 L571.2,256.0 L571.2,258.0 L571.2,260.0 L571.2,262.0 L571.3,264.0 L571.3,266.0 L571.3,268.0 L571.3,270.0 L571.3,272.0 L571.3,274.0 L571.3,276.0 L571.3,278.0 L571.3,280.0 L571.3,281.0 L571.4,282.0 L571.4,284.0 L571.4,286.0 L571.4,288.0 L571.4,290.0 L571.4,292.0 L571.4,294.0 L571.4,296.0 L571.5,298.0 L571.5,300.0 L571.5,302.0 L571.5,304.0 L571.5,306.0 L571.5,308.0 L571.5,310.0 L571.5,312.0 L571.6,314.0 L571.6,316.0 L571.6,318.0 L571.6,320.0 L571.6,322.0 L571.6,324.0 L571.6,326.0 L571.6,328.0 L571.7,330.0 L571.7,332.0 L571.6,334.0 L571.6,336.0 L571.5,338.0 L571.5,340.0 L571.4,342.0 L571.3,344.0 L571.0,346.0 L571.0,346.0 L571.0,346.0 L571.0,346.0 L570.7,344.0 L570.6,342.0 L570.5,340.0 L570.4,338.0 L570.3,336.0 L570.2,334.0 L570.2,332.0 L570.2,330.0 L570.1,328.0 L570.1,326.0 L570.1,324.0 L570.1,322.0 L570.1,320.0 L570.1,318.0 L570.1,316.0 L570.1,314.0 L570.0,312.0 L570.0,310.0 L570.0,308.0 L570.0,306.0 L570.0,304.0 L570.0,302.0 L570.0,300.0 L570.0,298.0 L569.9,296.0 L569.9,294.0 L569.9,292.0 L569.9,290.0 L569.9,288.0 L569.9,286.0 L569.9,284.0 L569.9,282.0 L569.9,281.0 L569.8,280.0 L569.8,278.0 L569.8,276.0 L569.8,274.0 L569.8,272.0 L569.8,270.0 L569.8,268.0 L569.8,266.0 L569.8,264.0 L569.7,262.0 L569.7,260.0 L569.7,258.0 L569.7,256.0 L569.7,254.0 L569.7,252.0 L569.7,250.0 L569.7,248.0 L569.7,246.0 L569.6,244.0 L569.6,242.0 L569.6,240.0 L569.6,238.0 L569.6,236.0 L569.6,234.0 L569.6,232.0 L569.6,230.0 L569.6,228.0 L569.5,226.0 L569.5,224.0 L569.5,222.0 L569.5,220.0 L569.5,218.0 L569.5,216.0 L569.5,214.0 L569.5,212.0 L569.5,210.0 L569.4,208.0 L569.4,206.0 L569.4,204.0 L569.4,202.0 L569.4,200.0 L569.4,198.0 L569.4,196.0 L569.4,194.0 L569.4,192.0 L569.3,190.0 L569.3,188.0 L569.3,186.0 L569.3,184.0 L569.3,182.0 L569.3,180.0 L569.3,178.0 L569.3,176.0 L569.3,174.0 L569.3,172.0 L569.2,170.0 L569.2,168.0 L569.2,166.0 L569.2,164.0 L569.2,162.0 L569.2,160.0 L569.2,158.0 L569.2,156.0 L569.2,154.0 L569.1,152.0 L569.1,150.0 L569.1,148.0 L569.1,146.0 L569.1,144.0 L569.1,142.0 L569.1,140.0 L569.1,138.0 L569.1,136.0 L569.0,134.0 L569.0,132.0 L569.0,130.0 L569.0,128.0 L569.0,126.0 L569.0,124.0 L569.0,122.0 L569.0,120.0 L569.0,118.0 L568.9,116.0 L568.9,114.0 L568.9,112.0 L568.9,110.0 L568.9,108.0 L568.9,106.0 L568.9,104.0 L568.9,102.0 L568.9,100.0 L568.8,98.0 L568.8,96.0 L568.8,94.0 L568.8,92.0 L568.8,90.0 L568.8,88.0 L568.8,86.0 L568.8,84.0 L568.8,82.0 L568.8,81.0 L568.8,80.0 L568.9,78.0 L569.0,76.0 L569.2,74.0 L569.3,72.0 L569.5,70.0 L569.7,68.0 L570.0,66.0Z" fill="rgb(166,166,166)"/>
<path d="M601.6,72.0 L602.0,74.0 L602.1,76.0 L602.2,78.1 L602.2,80.1 L602.2,81.1 L602.3,82.0 L602.4,84.0 L602.6,86.0 L602.6,88.0 L602.7,90.0 L602.7,92.0 L602.7,94.0 L602.8,96.0 L602.8,98.0 L602.8,100.0 L602.9,102.0 L602.9,104.0 L602.9,106.0 L603.0,108.0 L603.0,110.0 L603.0,112.0 L603.1,113.9 L603.1,115.9 L603.1,117.9 L603.2,119.9 L603.2,121.9 L603.2,123.9 L603.3,125.9 L603.3,127.9 L603.3,129.9 L603.4,131.9 L603.4,133.9 L603.4,135.9 L603.5,137.9 L603.5,139.9 L603.5,141.9 L603.6,143.9 L603.6,145.9 L603.6,147.9 L603.7,149.9 L603.7,151.9 L603.7,153.9 L603.8,155.9 L603.8,157.9 L603.8,159.9 L603.9,161.9 L603.9,163.9 L603.9,165.9 L604.0,167.9 L604.0,169.9 L604.0,171.9 L604.1,173.9 L604.1,175.9 L604.1,177.9 L604.2,179.9 L604.2,181.9 L604.3,183.9 L604.3,185.9 L604.3,187.9 L604.4,189.9 L604.4,191.9 L604.4,193.9 L604.5,195.9 L604.5,197.9 L604.5,199.9 L604.6,201.9 L604.6,203.9 L604.6,205.9 L604.7,207.9 L604.7,209.9 L604.7,211.9 L604.8,213.9 L604.8,215.9 L604.8,217.9 L604.9,219.9 L604.9,221.9 L604.9,223.9 L605.0,225.9 L605.0,227.9 L605.0,229.9 L605.1,231.9 L605.1,233.9 L605.1,235.9 L605.2,237.9 L605.2,239.9 L605.2,241.9 L605.3,243.9 L605.3,245.9 L605.3,247.9 L605.4,249.9 L605.4,251.9 L605.4,253.9 L605.5,255.9 L605.5,257.9 L605.5,259.9 L605.6,261.9 L605.6,263.9 L605.6,265.9 L605.7,267.9 L605.7,269.9 L605.7,271.9 L605.8,273.9 L605.8,275.9 L605.8,277.9 L605.9,279.9 L605.9,281.0 L605.9,281.9 L606.0,283.9 L606.0,285.9 L606.1,287.9 L606.1,289.9 L606.2,291.9 L606.2,293.9 L606.2,295.9 L606.3,297.9 L606.3,299.9 L606.4,301.9 L606.4,303.9 L606.5,305.9 L606.5,307.9 L606.6,309.9 L606.6,311.9 L606.7,313.9 L606.7,315.9 L606.8,317.9 L606.8,319.9 L606.8,321.9 L606.9,323.9 L606.9,325.9 L607.0,327.9 L607.0,329.9 L607.1,331.9 L607.1,333.9 L607.2,335.9 L607.1,337.9 L607.0,339.9 L607.0,341.9 L606.8,343.9 L606.7,345.9 L606.5,347.9 L606.1,349.9 L606.0,350.0 L606.0,350.0 L605.9,349.9 L605.4,347.9 L605.1,346.0 L604.9,344.0 L604.7,342.0 L604.5,340.0 L604.3,338.0 L604.2,336.0 L604.1,334.0 L604.1,332.0 L604.0,330.0 L604.0,328.0 L603.9,326.0 L603.9,324.0 L603.8,322.0 L603.8,320.0 L603.8,318.0 L603.7,316.0 L603.7,314.0 L603.6,312.0 L603.6,310.0 L603.5,308.0 L603.5,306.0 L603.4,304.0 L603.4,302.0 L603.3,300.0 L603.3,298.0 L603.2,296.0 L603.2,294.0 L603.2,292.0 L603.1,290.0 L603.1,288.0 L603.0,286.0 L603.0,284.0 L602.9,282.0 L602.9,281.0 L602.9,280.0 L602.8,278.0 L602.8,276.0 L602.8,274.0 L602.7,272.0 L602.7,270.0 L602.7,268.0 L602.6,266.0 L602.6,264.0 L602.6,262.0 L602.5,260.0 L602.5,258.0 L602.5,256.0 L602.4,254.0 L602.4,252.0 L602.4,250.0 L602.3,248.0 L602.3,246.0 L602.3,244.0 L602.2,242.0 L602.2,240.0 L602.2,238.0 L602.1,236.0 L602.1,234.0 L602.1,232.0 L602.0,230.0 L602.0,228.0 L602.0,226.0 L601.9,224.0 L601.9,222.0 L601.9,220.0 L601.8,218.0 L601.8,216.0 L601.8,214.0 L601.7,212.0 L601.7,210.0 L601.7,208.0 L601.6,206.0 L601.6,204.0 L601.6,202.0 L601.5,200.0 L601.5,198.0 L601.5,196.0 L601.4,194.0 L601.4,192.0 L601.4,190.0 L601.3,188.0 L601.3,186.0 L601.3,184.0 L601.2,182.0 L601.2,180.0 L601.1,178.0 L601.1,176.0 L601.1,174.0 L601.0,172.0 L601.0,170.0 L601.0,168.0 L600.9,166.0 L600.9,164.0 L600.9,162.0 L600.8,160.0 L600.8,158.0 L600.8,156.0 L600.7,154.0 L600.7,152.0 L600.7,150.0 L600.6,148.0 L600.6,146.0 L600.6,144.0 L600.5,142.0 L600.5,140.0 L600.5,138.0 L600.4,136.0 L600.4,134.0 L600.4,132.0 L600.3,130.0 L600.3,128.0 L600.3,126.0 L600.2,124.0 L600.2,122.0 L600.2,120.0 L600.1,118.0 L600.1,116.0 L600.1,114.0 L600.0,112.0 L600.0,110.0 L600.0,108.0 L599.9,106.0 L599.9,104.0 L599.9,102.0 L599.8,100.0 L599.8,98.0 L599.8,96.0 L599.7,94.0 L599.7,92.0 L599.7,90.0 L599.6,88.0 L599.6,86.0 L599.7,84.0 L599.7,82.0 L599.8,80.9 L599.9,79.9 L600.2,77.9 L600.5,75.9 L600.9,74.0 L601.6,72.0Z" fill="rgb(123,123,123)"/>
<path d="M880.6,176.0 L880.9,178.0 L881.0,180.0 L881.1,182.0 L881.2,184.0 L881.3,186.0 L881.4,188.0 L881.5,190.0 L881.5,192.0 L881.5,194.0 L881.5,196.0 L881.5,198.0 L881.5,200.0 L881.6,202.0 L881.6,204.0 L881.6,206.0 L881.6,208.0 L881.6,210.0 L881.6,212.0 L881.7,214.0 L881.7,216.0 L881.7,218.0 L881.7,220.0 L881.7,222.0 L881.7,224.0 L881.7,226.0 L881.8,228.0 L881.8,230.0 L881.8,232.0 L881.8,234.0 L881.8,236.0 L881.8,238.0 L881.9,240.0 L881.9,242.0 L881.9,244.0 L881.9,246.0 L881.9,248.0 L881.9,250.0 L882.0,252.0 L882.0,254.0 L882.0,256.0 L882.0,258.0 L882.0,260.0 L882.0,262.0 L882.1,264.0 L882.1,266.0 L882.1,268.0 L882.1,270.0 L882.1,272.0 L882.1,274.0 L882.1,276.0 L882.2,278.0 L882.2,280.0 L882.2,282.0 L882.2,284.0 L882.2,286.0 L882.2,288.0 L882.3,290.0 L882.3,292.0 L882.3,294.0 L882.3,296.0 L882.3,298.0 L882.3,300.0 L882.4,302.0 L882.4,304.0 L882.4,306.0 L882.4,308.0 L882.4,310.0 L882.4,312.0 L882.5,314.0 L882.5,316.0 L882.5,318.0 L882.5,320.0 L882.5,322.0 L882.5,324.0 L882.5,326.0 L882.6,328.0 L882.6,330.0 L882.6,332.0 L882.6,334.0 L882.6,336.0 L882.6,338.0 L882.6,340.0 L882.5,342.0 L882.5,344.0 L882.4,346.0 L882.3,348.0 L882.2,350.0 L882.0,351.0 L882.0,351.0 L881.8,350.0 L881.6,348.0 L881.5,346.0 L881.4,344.0 L881.3,342.0 L881.2,340.0 L881.2,338.0 L881.1,336.0 L881.1,334.0 L881.1,332.0 L881.1,330.0 L881.1,328.0 L881.0,326.0 L881.0,324.0 L881.0,322.0 L881.0,320.0 L881.0,318.0 L881.0,316.0 L881.0,314.0 L880.9,312.0 L880.9,310.0 L880.9,308.0 L880.9,306.0 L880.9,304.0 L880.9,302.0 L880.8,300.0 L880.8,298.0 L880.8,296.0 L880.8,294.0 L880.8,292.0 L880.8,290.0 L880.7,288.0 L880.7,286.0 L880.7,284.0 L880.7,282.0 L880.7,280.0 L880.7,278.0 L880.6,276.0 L880.6,274.0 L880.6,272.0 L880.6,270.0 L880.6,268.0 L880.6,266.0 L880.6,264.0 L880.5,262.0 L880.5,260.0 L880.5,258.0 L880.5,256.0 L880.5,254.0 L880.5,252.0 L880.4,250.0 L880.4,248.0 L880.4,246.0 L880.4,244.0 L880.4,242.0 L880.4,240.0 L880.3,238.0 L880.3,236.0 L880.3,234.0 L880.3,232.0 L880.3,230.0 L880.3,228.0 L880.3,226.0 L880.2,224.0 L880.2,222.0 L880.2,220.0 L880.2,218.0 L880.2,216.0 L880.2,214.0 L880.1,212.0 L880.1,210.0 L880.1,208.0 L880.1,206.0 L880.1,204.0 L880.1,202.0 L880.0,200.0 L880.0,198.0 L880.0,196.0 L880.0,194.0 L880.0,192.0 L880.0,190.0 L880.0,188.0 L880.0,186.0 L880.1,184.0 L880.2,182.0 L880.2,180.0 L880.3,178.0 L880.6,176.0Z" fill="rgb(23,23,23)"/>
<path d="M213.9,336.0 L214.5,338.0 L214.8,340.0 L215.0,342.0 L215.2,344.0 L215.4,346.0 L215.6,348.0 L215.7,350.0 L215.8,352.0 L215.8,354.0 L215.8,356.0 L215.9,358.0 L215.9,360.0 L216.0,362.0 L216.0,364.0 L216.1,366.0 L216.1,368.0 L216.2,370.0 L216.2,372.0 L216.2,374.0 L216.3,376.0 L216.3,378.0 L216.4,380.0 L216.4,381.0 L216.4,382.0 L216.4,384.0 L216.5,386.0 L216.5,388.0 L216.5,390.0 L216.6,392.0 L216.6,394.0 L216.6,396.0 L216.7,398.0 L216.7,400.0 L216.7,402.0 L216.8,404.0 L216.8,406.0 L216.8,408.0 L216.9,410.0 L216.9,412.0 L216.9,414.0 L217.0,416.0 L217.0,418.0 L217.0,420.0 L217.1,422.0 L217.1,424.0 L217.1,426.0 L217.2,428.0 L217.2,430.0 L217.2,432.0 L217.2,434.0 L217.3,436.0 L217.3,438.0 L217.3,440.0 L217.4,442.0 L217.4,444.0 L217.4,446.0 L217.5,448.0 L217.5,450.0 L217.5,452.0 L217.6,454.0 L217.6,456.0 L217.6,458.0 L217.7,460.0 L217.7,462.0 L217.7,464.0 L217.8,466.0 L217.8,468.0 L217.8,470.0 L217.9,472.0 L217.9,474.0 L217.9,476.0 L218.0,478.0 L218.0,480.0 L218.0,481.0 L218.0,482.0 L218.0,484.0 L218.1,486.0 L218.1,488.0 L218.1,490.0 L218.1,492.0 L218.1,494.0 L218.2,496.0 L218.2,498.0 L218.2,500.0 L218.2,502.0 L218.3,504.0 L218.3,506.0 L218.3,508.0 L218.3,510.0 L218.3,512.0 L218.4,514.0 L218.4,516.0 L218.4,518.0 L218.4,520.0 L218.5,522.0 L218.5,524.0 L218.5,526.0 L218.5,528.0 L218.5,530.0 L218.6,532.0 L218.6,534.0 L218.6,536.0 L218.6,538.0 L218.7,540.0 L218.7,542.0 L218.7,544.0 L218.7,546.0 L218.7,548.0 L218.8,550.0 L218.8,552.0 L218.8,554.0 L218.8,556.0 L218.9,558.0 L218.9,560.0 L218.9,562.0 L218.9,564.0 L218.9,566.0 L219.0,568.0 L219.0,570.0 L219.0,571.0 L219.0,571.9 L219.1,573.9 L219.1,575.9 L219.2,577.9 L219.2,579.9 L219.2,581.9 L219.3,583.9 L219.3,585.9 L219.4,587.9 L219.4,589.9 L219.5,591.9 L219.5,593.9 L219.6,595.9 L219.6,597.9 L219.6,599.9 L219.7,601.9 L219.7,603.9 L219.8,605.9 L219.8,607.9 L219.9,609.9 L219.9,611.9 L220.0,613.9 L220.0,615.9 L220.0,617.9 L220.1,619.9 L220.1,621.9 L220.2,623.9 L220.2,625.9 L220.3,627.9 L220.3,629.9 L220.4,631.9 L220.4,633.9 L220.4,635.9 L220.5,637.9 L220.5,639.9 L220.6,641.9 L220.6,643.9 L220.7,645.9 L220.7,647.9 L220.8,649.9 L220.8,651.9 L220.8,653.9 L220.9,655.9 L220.9,657.9 L221.0,659.9 L221.0,661.0 L221.0,661.9 L221.0,663.9 L221.0,665.9 L221.1,667.9 L221.1,669.9 L221.1,671.9 L221.1,673.9 L221.1,675.9 L221.1,677.9 L221.2,679.9 L221.2,681.9 L221.2,683.9 L221.2,685.9 L221.2,687.9 L221.2,689.9 L221.3,691.9 L221.3,693.9 L221.3,695.9 L221.3,697.9 L221.3,699.9 L221.3,701.9 L221.4,703.9 L221.4,705.9 L221.4,707.9 L221.4,709.9 L221.4,711.9 L221.5,713.9 L221.5,715.9 L221.5,717.9 L221.5,719.9 L221.5,721.9 L221.5,723.9 L221.6,725.9 L221.6,727.9 L221.6,729.9 L221.6,731.9 L221.6,733.9 L221.6,735.9 L221.7,737.9 L221.7,739.9 L221.7,741.9 L221.7,743.9 L221.7,745.9 L221.7,747.9 L221.8,749.9 L221.8,751.9 L221.8,753.9 L221.8,755.9 L221.8,757.9 L221.8,759.9 L221.9,761.9 L221.9,763.9 L221.9,765.9 L221.9,767.9 L221.9,769.9 L221.9,771.9 L222.0,773.9 L222.0,775.9 L222.0,777.9 L222.0,778.0 L219.0,778.0 L219.0,778.0 L219.0,776.0 L219.0,774.0 L218.9,772.0 L218.9,770.0 L218.9,768.0 L218.9,766.0 L218.9,764.0 L218.9,762.0 L218.8,760.0 L218.8,758.0 L218.8,756.0 L218.8,754.0 L218.8,752.0 L218.8,750.0 L218.7,748.0 L218.7,746.0 L218.7,744.0 L218.7,742.0 L218.7,740.0 L218.7,738.0 L218.6,736.0 L218.6,734.0 L218.6,732.0 L218.6,730.0 L218.6,728.0 L218.6,726.0 L218.5,724.0 L218.5,722.0 L218.5,720.0 L218.5,718.0 L218.5,716.0 L218.5,714.0 L218.4,712.0 L218.4,710.0 L218.4,708.0 L218.4,706.0 L218.4,704.0 L218.4,702.0 L218.3,700.0 L218.3,698.0 L218.3,696.0 L218.3,694.0 L218.3,692.0 L218.2,690.0 L218.2,688.0 L218.2,686.0 L218.2,684.0 L218.2,682.0 L218.2,680.0 L218.1,678.0 L218.1,676.0 L218.1,674.0 L218.1,672.0 L218.1,670.0 L218.1,668.0 L218.0,666.0 L218.0,664.0 L218.0,662.0 L218.0,661.0 L218.0,660.0 L217.9,658.0 L217.9,656.0 L217.8,654.0 L217.8,652.0 L217.8,650.0 L217.7,648.0 L217.7,646.0 L217.6,644.0 L217.6,642.0 L217.5,640.0 L217.5,638.0 L217.4,636.0 L217.4,634.0 L217.4,632.0 L217.3,630.0 L217.3,628.0 L217.2,626.0 L217.2,624.0 L217.1,622.0 L217.1,620.0 L217.0,618.0 L217.0,616.0 L217.0,614.0 L216.9,612.0 L216.9,610.0 L216.8,608.0 L216.8,606.0 L216.7,604.0 L216.7,602.0 L216.6,600.0 L216.6,598.0 L216.6,596.0 L216.5,594.0 L216.5,592.0 L216.4,590.0 L216.4,588.0 L216.3,586.0 L216.3,584.0 L216.2,582.0 L216.2,580.0 L216.2,578.0 L216.1,576.0 L216.1,574.0 L216.0,572.0 L216.0,571.0 L216.0,570.0 L216.0,568.0 L215.9,566.0 L215.9,564.0 L215.9,562.0 L215.9,560.0 L215.9,558.0 L215.8,556.0 L215.8,554.0 L215.8,552.0 L215.8,550.0 L215.7,548.0 L215.7,546.0 L215.7,544.0 L215.7,542.0 L215.7,540.0 L215.6,538.0 L215.6,536.0 L215.6,534.0 L215.6,532.0 L215.5,530.0 L215.5,528.0 L215.5,526.0 L215.5,524.0 L215.5,522.0 L215.4,520.0 L215.4,518.0 L215.4,516.0 L215.4,514.0 L215.3,512.0 L215.3,510.0 L215.3,508.0 L215.3,506.0 L215.3,504.0 L215.2,502.0 L215.2,500.0 L215.2,498.0 L215.2,496.0 L215.1,494.0 L215.1,492.0 L215.1,490.0 L215.1,488.0 L215.1,486.0 L215.0,484.0 L215.0,482.0 L215.0,481.0 L215.0,480.0 L215.0,478.0 L214.9,476.0 L214.9,474.0 L214.9,472.0 L214.8,470.0 L214.8,468.0 L214.8,466.0 L214.7,464.0 L214.7,462.0 L214.7,460.0 L214.6,458.0 L214.6,456.0 L214.6,454.0 L214.5,452.0 L214.5,450.0 L214.5,448.0 L214.4,446.0 L214.4,444.0 L214.4,442.0 L214.3,440.0 L214.3,438.0 L214.3,436.0 L214.2,434.0 L214.2,432.0 L214.2,430.0 L214.2,428.0 L214.1,426.0 L214.1,424.0 L214.1,422.0 L214.0,420.0 L214.0,418.0 L214.0,416.0 L213.9,414.0 L213.9,412.0 L213.9,410.0 L213.8,408.0 L213.8,406.0 L213.8,404.0 L213.7,402.0 L213.7,400.0 L213.7,398.0 L213.6,396.0 L213.6,394.0 L213.6,392.0 L213.5,390.0 L213.5,388.0 L213.5,386.0 L213.4,384.0 L213.4,382.0 L213.4,381.0 L213.4,380.0 L213.3,378.0 L213.3,376.0 L213.2,374.0 L213.2,372.0 L213.2,370.0 L213.1,368.0 L213.1,366.0 L213.0,364.0 L213.0,362.0 L212.9,360.0 L212.9,358.0 L212.8,356.0 L212.8,354.0 L212.8,352.0 L212.7,350.0 L212.8,348.0 L212.9,346.0 L212.9,344.0 L213.1,342.0 L213.2,340.0 L213.4,338.0 L213.9,336.0Z" fill="rgb(247,247,247)"/>
<path d="M365.7,346.0 L366.0,348.0 L366.1,350.0 L366.2,352.0 L366.2,354.0 L366.3,356.0 L366.3,358.0 L366.4,360.0 L366.4,362.0 L366.4,364.0 L366.4,366.0 L366.4,368.0 L366.4,370.0 L366.3,371.0 L366.3,372.0 L366.3,374.0 L366.3,376.0 L366.3,378.0 L366.3,380.0 L366.3,382.0 L366.3,384.0 L366.3,386.0 L366.3,388.0 L366.2,390.0 L366.2,392.0 L366.2,394.0 L366.2,396.0 L366.2,398.0 L366.2,400.0 L366.2,402.0 L366.2,404.0 L366.2,406.0 L366.1,408.0 L366.1,410.0 L366.1,412.0 L366.1,414.0 L366.1,416.0 L366.1,418.0 L366.1,420.0 L366.1,422.0 L366.1,424.0 L366.0,426.0 L366.0,428.0 L366.0,430.0 L366.0,432.0 L366.0,434.0 L366.0,436.0 L366.0,438.0 L366.0,440.0 L366.0,442.0 L366.0,444.0 L365.9,446.0 L365.9,448.0 L365.9,450.0 L365.9,452.0 L365.9,454.0 L365.9,456.0 L365.9,458.0 L365.9,460.0 L365.9,462.0 L365.8,464.0 L365.8,466.0 L365.8,468.0 L365.8,470.0 L365.8,472.0 L365.8,474.0 L365.8,476.0 L365.8,478.0 L365.8,480.0 L365.7,481.0 L365.7,482.0 L365.7,484.0 L365.7,486.0 L365.6,488.0 L365.6,490.0 L365.6,492.0 L365.5,494.0 L365.5,496.0 L365.5,498.0 L365.4,500.0 L365.4,502.0 L365.4,504.0 L365.3,506.0 L365.3,508.0 L365.3,510.0 L365.2,512.0 L365.2,514.0 L365.2,516.0 L365.1,518.0 L365.1,520.0 L365.1,522.0 L365.0,524.0 L365.0,526.0 L365.0,528.0 L364.9,530.0 L364.9,532.0 L364.9,534.0 L364.8,536.0 L364.8,538.0 L364.8,540.0 L364.7,542.0 L364.7,544.0 L364.7,546.0 L364.6,548.0 L364.6,550.0 L364.6,552.0 L364.5,554.0 L364.5,556.0 L364.5,558.0 L364.4,560.0 L364.4,562.0 L364.4,564.0 L364.3,566.0 L364.3,568.0 L364.3,570.0 L364.2,571.0 L364.3,572.0 L364.3,574.0 L364.3,576.0 L364.3,578.0 L364.3,580.0 L364.3,582.0 L364.4,584.0 L364.4,586.0 L364.4,588.0 L364.4,590.0 L364.4,592.0 L364.4,594.0 L364.4,596.0 L364.5,598.0 L364.5,600.0 L364.5,602.0 L364.5,604.0 L364.5,606.0 L364.5,608.0 L364.6,610.0 L364.6,612.0 L364.6,614.0 L364.6,616.0 L364.6,618.0 L364.6,620.0 L364.6,622.0 L364.7,624.0 L364.7,626.0 L364.7,628.0 L364.7,630.0 L364.7,632.0 L364.7,634.0 L364.8,636.0 L364.8,638.0 L364.8,640.0 L364.8,642.0 L364.8,644.0 L364.8,646.0 L364.8,648.0 L364.9,650.0 L364.9,652.0 L364.9,654.0 L364.9,656.0 L364.9,658.0 L364.9,660.0 L364.9,661.0 L365.0,662.0 L365.0,664.0 L365.0,666.0 L365.0,668.0 L365.0,670.0 L365.0,672.0 L365.0,674.0 L365.0,676.0 L365.0,678.0 L365.0,680.0 L365.0,682.0 L365.0,684.0 L365.0,686.0 L365.0,688.0 L365.0,690.0 L365.1,692.0 L365.1,694.0 L365.1,696.0 L365.1,698.0 L365.1,700.0 L365.1,702.0 L365.1,704.0 L365.1,706.0 L365.1,708.0 L365.1,710.0 L365.1,712.0 L365.1,714.0 L365.1,716.0 L365.1,718.0 L365.2,720.0 L365.2,722.0 L365.2,724.0 L365.2,726.0 L365.2,728.0 L365.2,730.0 L365.2,732.0 L365.2,734.0 L365.2,736.0 L365.2,738.0 L365.2,740.0 L365.2,742.0 L365.2,744.0 L365.2,746.0 L365.2,748.0 L365.3,750.0 L365.3,752.0 L365.3,754.0 L365.3,756.0 L365.3,758.0 L365.3,760.0 L365.3,762.0 L365.3,764.0 L365.3,766.0 L365.3,768.0 L365.3,770.0 L365.3,772.0 L365.3,774.0 L365.3,776.0 L365.3,778.0 L365.3,778.0 L363.9,778.0 L363.8,778.0 L363.8,776.0 L363.8,774.0 L363.8,772.0 L363.8,770.0 L363.8,768.0 L363.8,766.0 L363.8,764.0 L363.8,762.0 L363.8,760.0 L363.8,758.0 L363.8,756.0 L363.8,754.0 L363.8,752.0 L363.8,750.0 L363.7,748.0 L363.7,746.0 L363.7,744.0 L363.7,742.0 L363.7,740.0 L363.7,738.0 L363.7,736.0 L363.7,734.0 L363.7,732.0 L363.7,730.0 L363.7,728.0 L363.7,726.0 L363.7,724.0 L363.7,722.0 L363.7,720.0 L363.6,718.0 L363.6,716.0 L363.6,714.0 L363.6,712.0 L363.6,710.0 L363.6,708.0 L363.6,706.0 L363.6,704.0 L363.6,702.0 L363.6,700.0 L363.6,698.0 L363.6,696.0 L363.6,694.0 L363.6,692.0 L363.5,690.0 L363.5,688.0 L363.5,686.0 L363.5,684.0 L363.5,682.0 L363.5,680.0 L363.5,678.0 L363.5,676.0 L363.5,674.0 L363.5,672.0 L363.5,670.0 L363.5,668.0 L363.5,666.0 L363.5,664.0 L363.5,662.0 L363.5,661.0 L363.4,660.0 L363.4,658.0 L363.4,656.0 L363.4,654.0 L363.4,652.0 L363.4,650.0 L363.3,648.0 L363.3,646.0 L363.3,644.0 L363.3,642.0 L363.3,640.0 L363.3,638.0 L363.3,636.0 L363.2,634.0 L363.2,632.0 L363.2,630.0 L363.2,628.0 L363.2,626.0 L363.2,624.0 L363.1,622.0 L363.1,620.0 L363.1,618.0 L363.1,616.0 L363.1,614.0 L363.1,612.0 L363.1,610.0 L363.0,608.0 L363.0,606.0 L363.0,604.0 L363.0,602.0 L363.0,600.0 L363.0,598.0 L362.9,596.0 L362.9,594.0 L362.9,592.0 L362.9,590.0 L362.9,588.0 L362.9,586.0 L362.9,584.0 L362.8,582.0 L362.8,580.0 L362.8,578.0 L362.8,576.0 L362.8,574.0 L362.8,572.0 L362.8,571.0 L362.8,570.0 L362.8,568.0 L362.8,566.0 L362.9,564.0 L362.9,562.0 L362.9,560.0 L363.0,558.0 L363.0,556.0 L363.0,554.0 L363.1,552.0 L363.1,550.0 L363.1,548.0 L363.2,546.0 L363.2,544.0 L363.2,542.0 L363.3,540.0 L363.3,538.0 L363.3,536.0 L363.4,534.0 L363.4,532.0 L363.4,530.0 L363.5,528.0 L363.5,526.0 L363.5,524.0 L363.6,522.0 L363.6,520.0 L363.6,518.0 L363.7,516.0 L363.7,514.0 L363.7,512.0 L363.8,510.0 L363.8,508.0 L363.8,506.0 L363.9,504.0 L363.9,502.0 L363.9,500.0 L364.0,498.0 L364.0,496.0 L364.0,494.0 L364.1,492.0 L364.1,490.0 L364.1,488.0 L364.2,486.0 L364.2,484.0 L364.2,482.0 L364.3,481.0 L364.3,480.0 L364.3,478.0 L364.3,476.0 L364.3,474.0 L364.3,472.0 L364.3,470.0 L364.3,468.0 L364.3,466.0 L364.3,464.0 L364.4,462.0 L364.4,460.0 L364.4,458.0 L364.4,456.0 L364.4,454.0 L364.4,452.0 L364.4,450.0 L364.4,448.0 L364.4,446.0 L364.5,444.0 L364.5,442.0 L364.5,440.0 L364.5,438.0 L364.5,436.0 L364.5,434.0 L364.5,432.0 L364.5,430.0 L364.5,428.0 L364.6,426.0 L364.6,424.0 L364.6,422.0 L364.6,420.0 L364.6,418.0 L364.6,416.0 L364.6,414.0 L364.6,412.0 L364.6,410.0 L364.6,408.0 L364.7,406.0 L364.7,404.0 L364.7,402.0 L364.7,400.0 L364.7,398.0 L364.7,396.0 L364.7,394.0 L364.7,392.0 L364.7,390.0 L364.8,388.0 L364.8,386.0 L364.8,384.0 L364.8,382.0 L364.8,380.0 L364.8,378.0 L364.8,376.0 L364.8,374.0 L364.8,372.0 L364.9,371.0 L364.9,370.0 L364.9,368.0 L364.9,366.0 L364.9,364.0 L364.9,362.0 L364.9,360.0 L365.0,358.0 L365.0,356.0 L365.1,354.0 L365.2,352.0 L365.3,350.0 L365.4,348.0 L365.7,346.0Z" fill="rgb(186,186,186)"/>
<path d="M390.4,334.5 L391.2,336.5 L391.6,338.5 L391.9,340.5 L392.2,342.4 L392.4,344.4 L392.7,346.4 L392.9,348.4 L392.9,350.4 L393.0,352.4 L393.1,354.4 L393.2,356.4 L393.2,358.4 L393.3,360.4 L393.4,362.4 L393.4,364.4 L393.5,366.4 L393.6,368.4 L393.6,370.4 L393.7,372.4 L393.8,374.4 L393.8,376.4 L393.9,378.4 L394.0,380.4 L394.0,380.9 L394.1,382.4 L394.2,384.4 L394.3,386.4 L394.4,388.4 L394.5,390.4 L394.6,392.4 L394.7,394.4 L394.8,396.4 L394.9,398.4 L395.0,400.3 L395.1,402.3 L395.2,404.3 L395.3,406.3 L395.4,408.3 L395.5,410.3 L395.6,412.3 L395.7,414.3 L395.8,416.3 L395.9,418.3 L396.0,420.3 L396.1,422.3 L396.2,424.3 L396.3,426.3 L396.4,428.3 L396.5,430.3 L396.6,432.3 L396.7,434.3 L396.8,436.3 L396.9,438.3 L397.0,440.3 L397.1,442.3 L397.2,444.3 L397.3,446.3 L397.4,448.3 L397.5,450.3 L397.6,452.3 L397.7,454.3 L397.8,456.3 L397.9,458.3 L398.0,460.3 L398.1,462.3 L398.2,464.3 L398.3,466.3 L398.4,468.3 L398.5,470.3 L398.6,472.3 L398.7,474.3 L398.8,476.3 L398.9,478.3 L399.0,480.2 L399.0,480.9 L399.1,482.2 L399.2,484.2 L399.3,486.2 L399.4,488.2 L399.5,490.2 L399.6,492.2 L399.7,494.2 L399.8,496.2 L400.0,498.2 L400.1,500.2 L400.2,502.2 L400.3,504.2 L400.4,506.2 L400.5,508.2 L400.6,510.2 L400.7,512.2 L400.8,514.2 L401.0,516.2 L401.1,518.2 L401.2,520.2 L401.3,522.2 L401.4,524.2 L401.5,526.2 L401.6,528.2 L401.7,530.2 L401.8,532.2 L402.0,534.2 L402.1,536.2 L402.2,538.1 L402.3,540.1 L402.4,542.1 L402.5,544.1 L402.6,546.1 L402.7,548.1 L402.8,550.1 L403.0,552.1 L403.1,554.1 L403.2,556.1 L403.3,558.1 L403.4,560.1 L403.5,562.1 L403.6,564.1 L403.7,566.1 L403.8,568.1 L404.0,570.1 L404.0,570.9 L404.1,572.1 L404.2,574.1 L404.2,576.1 L404.3,578.1 L404.4,580.1 L404.5,582.1 L404.6,584.1 L404.7,586.1 L404.8,588.1 L404.9,590.1 L405.0,592.1 L405.1,594.1 L405.2,596.1 L405.3,598.1 L405.4,600.1 L405.5,602.1 L405.6,604.1 L405.7,606.1 L405.8,608.1 L405.9,610.1 L406.0,612.1 L406.1,614.1 L406.2,616.1 L406.3,618.1 L406.3,620.1 L406.4,622.1 L406.5,624.1 L406.6,626.1 L406.7,628.0 L406.8,630.0 L406.9,632.0 L407.0,634.0 L407.1,636.0 L407.2,638.0 L407.3,640.0 L407.4,642.0 L407.5,644.0 L407.6,646.0 L407.7,648.0 L407.8,650.0 L407.9,652.0 L408.0,654.0 L408.1,656.0 L408.2,658.0 L408.3,660.0 L408.3,660.9 L408.3,662.1 L408.4,664.1 L408.4,666.1 L408.5,668.1 L408.5,670.0 L408.6,672.0 L408.6,674.0 L408.7,676.0 L408.8,678.0 L408.8,680.0 L408.9,682.0 L408.9,684.0 L409.0,686.0 L409.0,688.0 L409.1,690.0 L409.1,692.0 L409.2,694.0 L409.2,696.0 L409.3,698.0 L409.3,700.0 L409.4,702.0 L409.4,704.0 L409.5,706.0 L409.5,708.0 L409.6,710.0 L409.7,712.0 L409.7,714.0 L409.8,716.0 L409.8,718.0 L409.9,720.0 L409.9,722.0 L410.0,724.0 L410.0,726.0 L410.1,728.0 L410.1,730.0 L410.2,732.0 L410.2,734.0 L410.3,736.0 L410.3,738.0 L410.4,740.0 L410.4,742.0 L410.5,744.0 L410.6,746.0 L410.6,748.0 L410.7,750.0 L410.7,752.0 L410.8,754.0 L410.8,756.0 L410.9,758.0 L410.9,760.0 L411.0,762.0 L411.0,764.0 L411.1,766.0 L411.1,768.0 L411.2,770.0 L411.2,772.0 L411.3,774.0 L411.3,776.0 L411.4,777.9 L407.4,778.1 L407.3,776.1 L407.3,774.1 L407.2,772.1 L407.2,770.1 L407.1,768.1 L407.1,766.1 L407.0,764.1 L407.0,762.1 L406.9,760.1 L406.9,758.1 L406.8,756.1 L406.8,754.1 L406.7,752.1 L406.7,750.1 L406.6,748.1 L406.6,746.1 L406.5,744.1 L406.4,742.1 L406.4,740.1 L406.3,738.1 L406.3,736.1 L406.2,734.1 L406.2,732.1 L406.1,730.1 L406.1,728.1 L406.0,726.1 L406.0,724.1 L405.9,722.1 L405.9,720.1 L405.8,718.1 L405.8,716.1 L405.7,714.1 L405.7,712.1 L405.6,710.1 L405.5,708.1 L405.5,706.1 L405.4,704.1 L405.4,702.1 L405.3,700.1 L405.3,698.1 L405.2,696.1 L405.2,694.1 L405.1,692.1 L405.1,690.1 L405.0,688.1 L405.0,686.2 L404.9,684.2 L404.9,682.2 L404.8,680.2 L404.8,678.2 L404.7,676.2 L404.6,674.2 L404.6,672.2 L404.5,670.2 L404.5,668.2 L404.4,666.2 L404.4,664.2 L404.3,662.2 L404.3,661.1 L404.3,660.2 L404.2,658.2 L404.1,656.2 L404.0,654.2 L403.9,652.2 L403.8,650.2 L403.7,648.2 L403.6,646.2 L403.5,644.2 L403.4,642.2 L403.3,640.2 L403.2,638.2 L403.1,636.2 L403.0,634.2 L402.9,632.2 L402.8,630.2 L402.7,628.2 L402.6,626.2 L402.5,624.2 L402.4,622.2 L402.4,620.2 L402.3,618.3 L402.2,616.3 L402.1,614.3 L402.0,612.3 L401.9,610.3 L401.8,608.3 L401.7,606.3 L401.6,604.3 L401.5,602.3 L401.4,600.3 L401.3,598.3 L401.2,596.3 L401.1,594.3 L401.0,592.3 L400.9,590.3 L400.8,588.3 L400.7,586.3 L400.6,584.3 L400.5,582.3 L400.4,580.3 L400.3,578.3 L400.3,576.3 L400.2,574.3 L400.1,572.3 L400.0,571.1 L400.0,570.3 L399.8,568.3 L399.7,566.3 L399.6,564.3 L399.5,562.3 L399.4,560.3 L399.3,558.3 L399.2,556.3 L399.1,554.3 L399.0,552.3 L398.8,550.4 L398.7,548.4 L398.6,546.4 L398.5,544.4 L398.4,542.4 L398.3,540.4 L398.2,538.4 L398.1,536.4 L398.0,534.4 L397.9,532.4 L397.7,530.4 L397.6,528.4 L397.5,526.4 L397.4,524.4 L397.3,522.4 L397.2,520.4 L397.1,518.4 L397.0,516.4 L396.9,514.4 L396.7,512.4 L396.6,510.4 L396.5,508.4 L396.4,506.4 L396.3,504.4 L396.2,502.4 L396.1,500.4 L396.0,498.4 L395.9,496.4 L395.7,494.4 L395.6,492.4 L395.5,490.4 L395.4,488.4 L395.3,486.5 L395.2,484.5 L395.1,482.5 L395.0,481.1 L395.0,480.4 L394.9,478.5 L394.8,476.5 L394.7,474.5 L394.6,472.5 L394.5,470.5 L394.4,468.5 L394.3,466.5 L394.2,464.5 L394.1,462.5 L394.0,460.5 L393.9,458.5 L393.8,456.5 L393.7,454.5 L393.6,452.5 L393.5,450.5 L393.4,448.5 L393.3,446.5 L393.2,444.5 L393.1,442.5 L393.0,440.5 L392.9,438.5 L392.8,436.5 L392.7,434.5 L392.6,432.5 L392.5,430.5 L392.4,428.5 L392.3,426.5 L392.2,424.5 L392.1,422.5 L392.0,420.5 L391.9,418.5 L391.8,416.5 L391.7,414.5 L391.6,412.5 L391.5,410.5 L391.4,408.5 L391.3,406.5 L391.2,404.5 L391.1,402.5 L391.0,400.5 L390.9,398.6 L390.8,396.6 L390.7,394.6 L390.6,392.6 L390.5,390.6 L390.4,388.6 L390.3,386.6 L390.2,384.6 L390.1,382.6 L390.0,381.1 L390.0,380.5 L389.9,378.5 L389.8,376.5 L389.8,374.5 L389.7,372.5 L389.6,370.5 L389.6,368.5 L389.5,366.5 L389.4,364.6 L389.4,362.6 L389.3,360.6 L389.2,358.6 L389.2,356.6 L389.1,354.6 L389.0,352.6 L389.0,350.6 L388.9,348.6 L389.0,346.6 L389.1,344.6 L389.2,342.5 L389.3,340.5 L389.5,338.5 L389.7,336.5 L390.4,334.5Z" fill="rgb(237,237,237)"/>
<path d="M452.2,345.4 L452.5,347.4 L452.6,349.4 L452.7,351.4 L452.8,353.4 L452.8,355.4 L452.9,357.4 L452.9,359.4 L452.9,361.4 L452.9,363.4 L452.9,365.4 L452.9,367.4 L452.9,369.4 L452.9,371.4 L452.9,373.4 L452.9,375.4 L452.9,377.4 L452.9,379.4 L452.9,381.4 L452.9,383.4 L452.9,385.4 L452.9,387.4 L452.9,389.4 L452.9,391.4 L452.9,393.4 L452.9,395.4 L452.9,397.4 L452.9,399.4 L452.9,401.4 L452.9,403.4 L452.9,405.4 L452.9,407.4 L452.9,409.4 L452.9,411.4 L452.8,413.4 L452.8,415.4 L452.8,417.4 L452.8,419.4 L452.8,421.4 L452.8,423.4 L452.8,425.4 L452.8,427.4 L452.8,429.4 L452.8,431.4 L452.8,433.4 L452.8,435.4 L452.8,437.4 L452.8,439.4 L452.8,441.4 L452.8,443.4 L452.8,445.4 L452.8,447.4 L452.8,449.4 L452.8,451.4 L452.8,453.4 L452.8,455.4 L452.8,457.4 L452.8,459.4 L452.8,461.4 L452.8,463.4 L452.8,465.4 L452.8,467.4 L452.8,469.4 L452.8,471.4 L452.8,473.4 L452.8,475.4 L452.8,477.4 L452.8,479.4 L452.7,481.0 L452.8,481.4 L452.8,483.4 L452.8,485.4 L452.8,487.4 L452.8,489.4 L452.8,491.4 L452.8,493.4 L452.8,495.4 L452.8,497.4 L452.8,499.4 L452.8,501.4 L452.8,503.4 L452.8,505.4 L452.8,507.4 L452.8,509.4 L452.8,511.4 L452.8,513.4 L452.8,515.4 L452.8,517.4 L452.8,519.4 L452.8,521.4 L452.8,523.4 L452.8,525.4 L452.8,527.4 L452.8,529.4 L452.8,531.4 L452.8,533.4 L452.8,535.4 L452.8,537.4 L452.8,539.4 L452.8,541.4 L452.8,543.4 L452.8,545.4 L452.8,547.4 L452.8,549.4 L452.8,551.4 L452.8,553.4 L452.8,555.4 L452.8,557.4 L452.8,559.4 L452.8,561.4 L452.8,563.4 L452.8,565.4 L452.8,567.4 L452.8,569.4 L452.8,571.0 L452.7,571.4 L452.7,573.4 L452.7,575.4 L452.6,577.4 L452.6,579.4 L452.6,581.4 L452.5,583.4 L452.5,585.4 L452.5,587.4 L452.4,589.4 L452.3,591.4 L452.2,593.4 L452.1,595.4 L451.9,597.4 L451.8,599.4 L451.5,601.0 L451.5,601.0 L451.3,599.4 L451.2,597.4 L451.1,595.4 L451.1,593.4 L451.0,591.4 L451.0,589.4 L451.0,587.4 L451.0,585.4 L451.0,583.4 L451.1,581.4 L451.1,579.4 L451.1,577.4 L451.2,575.4 L451.2,573.4 L451.2,571.4 L451.2,571.0 L451.2,569.4 L451.2,567.4 L451.2,565.4 L451.2,563.4 L451.2,561.4 L451.2,559.4 L451.2,557.4 L451.2,555.4 L451.2,553.4 L451.2,551.4 L451.2,549.4 L451.2,547.4 L451.2,545.4 L451.2,543.4 L451.2,541.4 L451.2,539.4 L451.2,537.4 L451.2,535.4 L451.2,533.4 L451.2,531.4 L451.2,529.4 L451.2,527.4 L451.2,525.4 L451.2,523.4 L451.2,521.4 L451.2,519.4 L451.2,517.4 L451.2,515.4 L451.2,513.4 L451.2,511.4 L451.2,509.4 L451.2,507.4 L451.2,505.4 L451.2,503.4 L451.2,501.4 L451.2,499.4 L451.2,497.4 L451.2,495.4 L451.2,493.4 L451.2,491.4 L451.2,489.4 L451.2,487.4 L451.2,485.4 L451.2,483.4 L451.2,481.4 L451.3,481.0 L451.3,479.4 L451.3,477.4 L451.3,475.4 L451.3,473.4 L451.3,471.4 L451.3,469.4 L451.3,467.4 L451.3,465.4 L451.3,463.4 L451.3,461.4 L451.3,459.4 L451.3,457.4 L451.3,455.4 L451.3,453.4 L451.3,451.4 L451.3,449.4 L451.3,447.4 L451.3,445.4 L451.3,443.4 L451.3,441.4 L451.3,439.4 L451.3,437.4 L451.3,435.4 L451.3,433.4 L451.3,431.4 L451.3,429.4 L451.3,427.4 L451.3,425.4 L451.3,423.4 L451.3,421.4 L451.3,419.4 L451.3,417.4 L451.3,415.4 L451.3,413.4 L451.4,411.4 L451.4,409.4 L451.4,407.4 L451.4,405.4 L451.4,403.4 L451.4,401.4 L451.4,399.4 L451.4,397.4 L451.4,395.4 L451.4,393.4 L451.4,391.4 L451.4,389.4 L451.4,387.4 L451.4,385.4 L451.4,383.4 L451.4,381.4 L451.4,379.4 L451.4,377.4 L451.4,375.4 L451.4,373.4 L451.4,371.4 L451.4,369.4 L451.4,367.4 L451.4,365.4 L451.4,363.4 L451.4,361.4 L451.4,359.4 L451.5,357.4 L451.6,355.4 L451.6,353.4 L451.7,351.4 L451.8,349.4 L451.9,347.4 L452.2,345.4Z" fill="rgb(180,180,180)"/>
<path d="M451.5,601.0 L451.8,603.0 L451.9,605.0 L452.0,607.0 L452.1,609.0 L452.1,611.0 L452.2,613.0 L452.2,615.0 L452.2,617.0 L452.2,619.0 L452.2,621.0 L452.2,623.0 L452.2,625.0 L452.2,627.0 L452.2,629.0 L452.2,631.0 L452.2,633.0 L452.2,635.0 L452.2,637.0 L452.2,639.0 L452.2,641.0 L452.2,643.0 L452.2,645.0 L452.2,647.0 L452.2,649.0 L452.2,651.0 L452.2,653.0 L452.2,655.0 L452.2,657.0 L452.2,659.0 L452.2,661.0 L452.2,663.0 L452.2,665.0 L452.2,667.0 L452.2,669.0 L452.2,671.0 L452.2,673.0 L452.2,675.0 L452.2,677.0 L452.2,679.0 L452.2,681.0 L452.2,683.0 L452.2,685.0 L452.2,687.0 L452.2,689.0 L452.2,691.0 L452.2,693.0 L452.2,695.0 L452.2,697.0 L452.2,699.0 L452.2,701.0 L452.2,703.0 L452.2,705.0 L452.2,707.0 L452.2,709.0 L452.2,711.0 L452.2,713.0 L452.2,715.0 L452.2,717.0 L452.2,719.0 L452.2,721.0 L452.2,723.0 L452.2,725.0 L452.2,727.0 L452.2,729.0 L452.2,731.0 L452.2,733.0 L452.2,735.0 L452.2,737.0 L452.2,739.0 L452.2,741.0 L452.2,743.0 L452.2,745.0 L452.2,747.0 L452.2,749.0 L452.2,751.0 L452.2,753.0 L452.2,755.0 L452.2,757.0 L452.2,759.0 L452.2,761.0 L452.2,763.0 L452.2,765.0 L452.2,767.0 L452.2,769.0 L452.2,771.0 L452.2,773.0 L452.2,775.0 L452.2,777.0 L452.2,778.0 L450.8,778.0 L450.8,777.0 L450.8,775.0 L450.8,773.0 L450.8,771.0 L450.8,769.0 L450.8,767.0 L450.8,765.0 L450.8,763.0 L450.8,761.0 L450.8,759.0 L450.8,757.0 L450.8,755.0 L450.8,753.0 L450.8,751.0 L450.8,749.0 L450.8,747.0 L450.8,745.0 L450.8,743.0 L450.8,741.0 L450.8,739.0 L450.8,737.0 L450.8,735.0 L450.8,733.0 L450.8,731.0 L450.8,729.0 L450.8,727.0 L450.8,725.0 L450.8,723.0 L450.8,721.0 L450.8,719.0 L450.8,717.0 L450.8,715.0 L450.8,713.0 L450.8,711.0 L450.8,709.0 L450.8,707.0 L450.8,705.0 L450.8,703.0 L450.8,701.0 L450.8,699.0 L450.8,697.0 L450.8,695.0 L450.8,693.0 L450.8,691.0 L450.8,689.0 L450.8,687.0 L450.8,685.0 L450.8,683.0 L450.8,681.0 L450.8,679.0 L450.8,677.0 L450.8,675.0 L450.8,673.0 L450.8,671.0 L450.8,669.0 L450.8,667.0 L450.8,665.0 L450.8,663.0 L450.8,661.0 L450.8,659.0 L450.8,657.0 L450.8,655.0 L450.8,653.0 L450.8,651.0 L450.8,649.0 L450.8,647.0 L450.8,645.0 L450.8,643.0 L450.8,641.0 L450.8,639.0 L450.8,637.0 L450.8,635.0 L450.8,633.0 L450.8,631.0 L450.8,629.0 L450.8,627.0 L450.8,625.0 L450.8,623.0 L450.8,621.0 L450.8,619.0 L450.8,617.0 L450.8,615.0 L450.8,613.0 L450.9,611.0 L450.9,609.0 L451.0,607.0 L451.1,605.0 L451.2,603.0 L451.5,601.0Z" fill="rgb(47,47,47)"/>
<path d="M475.0,346.5 L475.4,348.5 L475.6,350.5 L475.8,352.5 L476.0,354.5 L476.1,356.5 L476.3,358.5 L476.4,360.4 L476.5,362.4 L476.6,364.4 L476.7,366.4 L476.8,368.4 L476.9,370.4 L476.9,371.0 L477.0,372.4 L477.1,374.4 L477.2,376.4 L477.3,378.4 L477.4,380.4 L477.4,382.4 L477.5,384.4 L477.6,386.4 L477.7,388.4 L477.8,390.4 L477.9,392.4 L478.0,394.4 L478.1,396.4 L478.1,398.4 L478.2,400.4 L478.3,402.4 L478.4,404.4 L478.5,406.4 L478.6,408.4 L478.7,410.4 L478.8,412.4 L478.8,414.4 L478.9,416.4 L479.0,418.4 L479.1,420.4 L479.2,422.4 L479.3,424.4 L479.4,426.4 L479.5,428.4 L479.5,430.4 L479.6,432.4 L479.7,434.4 L479.8,436.4 L479.9,438.4 L480.0,440.4 L480.1,442.4 L480.2,444.4 L480.2,446.4 L480.3,448.4 L480.4,450.4 L480.5,452.4 L480.6,454.4 L480.7,456.4 L480.8,458.4 L480.8,460.4 L480.9,462.4 L481.0,464.3 L481.1,466.3 L481.2,468.3 L481.3,470.3 L481.4,472.3 L481.5,474.3 L481.5,476.3 L481.6,478.3 L481.7,480.3 L481.7,481.0 L481.8,482.3 L482.0,484.3 L482.1,486.3 L482.2,488.3 L482.3,490.3 L482.4,492.3 L482.6,494.3 L482.7,496.3 L482.8,498.3 L482.9,500.3 L483.1,502.3 L483.2,504.3 L483.3,506.3 L483.4,508.3 L483.5,510.3 L483.7,512.3 L483.8,514.3 L483.9,516.3 L484.0,518.3 L484.1,520.2 L484.3,522.2 L484.4,524.2 L484.5,526.2 L484.6,528.2 L484.8,530.2 L484.9,532.2 L485.0,534.2 L485.1,536.2 L485.2,538.2 L485.4,540.2 L485.5,542.2 L485.6,544.2 L485.7,546.2 L485.9,548.2 L486.0,550.2 L486.1,552.2 L486.2,554.2 L486.3,556.2 L486.5,558.2 L486.6,560.2 L486.7,562.2 L486.8,564.2 L487.0,566.2 L487.1,568.2 L487.2,570.2 L487.2,571.0 L487.4,572.1 L487.5,574.1 L487.7,576.1 L487.9,578.1 L488.0,580.1 L488.2,582.1 L488.4,584.1 L488.6,586.1 L488.7,588.1 L488.9,590.1 L489.1,592.1 L489.3,594.0 L489.4,596.0 L489.6,598.0 L489.7,600.0 L489.8,602.0 L489.9,604.0 L490.0,606.0 L490.1,608.0 L490.1,610.0 L490.0,611.0 L490.0,611.0 L489.7,610.1 L489.4,608.1 L489.1,606.1 L488.9,604.1 L488.6,602.1 L488.4,600.1 L488.2,598.2 L487.9,596.2 L487.8,594.2 L487.6,592.2 L487.4,590.2 L487.3,588.2 L487.1,586.2 L486.9,584.2 L486.7,582.2 L486.6,580.2 L486.4,578.2 L486.2,576.2 L486.0,574.3 L485.9,572.3 L485.8,571.0 L485.7,570.2 L485.6,568.2 L485.5,566.3 L485.3,564.3 L485.2,562.3 L485.1,560.3 L485.0,558.3 L484.8,556.3 L484.7,554.3 L484.6,552.3 L484.5,550.3 L484.4,548.3 L484.2,546.3 L484.1,544.3 L484.0,542.3 L483.9,540.3 L483.8,538.3 L483.6,536.3 L483.5,534.3 L483.4,532.3 L483.3,530.3 L483.1,528.3 L483.0,526.3 L482.9,524.3 L482.8,522.3 L482.7,520.3 L482.5,518.3 L482.4,516.3 L482.3,514.3 L482.2,512.4 L482.0,510.4 L481.9,508.4 L481.8,506.4 L481.7,504.4 L481.6,502.4 L481.4,500.4 L481.3,498.4 L481.2,496.4 L481.1,494.4 L480.9,492.4 L480.8,490.4 L480.7,488.4 L480.6,486.4 L480.5,484.4 L480.3,482.4 L480.3,481.0 L480.2,480.4 L480.1,478.4 L480.0,476.4 L480.0,474.4 L479.9,472.4 L479.8,470.4 L479.7,468.4 L479.6,466.4 L479.5,464.4 L479.4,462.4 L479.4,460.4 L479.3,458.4 L479.2,456.4 L479.1,454.4 L479.0,452.4 L478.9,450.4 L478.8,448.4 L478.7,446.4 L478.7,444.4 L478.6,442.4 L478.5,440.4 L478.4,438.4 L478.3,436.4 L478.2,434.4 L478.1,432.4 L478.0,430.4 L478.0,428.4 L477.9,426.5 L477.8,424.5 L477.7,422.5 L477.6,420.5 L477.5,418.5 L477.4,416.5 L477.3,414.5 L477.3,412.5 L477.2,410.5 L477.1,408.5 L477.0,406.5 L476.9,404.5 L476.8,402.5 L476.7,400.5 L476.6,398.5 L476.6,396.5 L476.5,394.5 L476.4,392.5 L476.3,390.5 L476.2,388.5 L476.1,386.5 L476.0,384.5 L476.0,382.5 L475.9,380.5 L475.8,378.5 L475.7,376.5 L475.6,374.5 L475.5,372.5 L475.5,371.0 L475.4,370.5 L475.3,368.5 L475.2,366.5 L475.1,364.5 L475.0,362.5 L474.9,360.5 L474.9,358.5 L474.9,356.5 L474.8,354.5 L474.8,352.5 L474.8,350.5 L474.8,348.5 L475.0,346.5Z" fill="rgb(120,120,120)"/>
<path d="M461.0,546.0 L461.3,548.0 L461.4,550.0 L461.5,552.0 L461.6,554.0 L461.7,556.0 L461.7,558.0 L461.8,560.0 L461.8,562.0 L461.8,564.0 L461.8,566.0 L461.8,568.0 L461.8,570.0 L461.8,572.0 L461.8,574.0 L461.9,576.0 L461.9,578.0 L461.9,580.0 L461.9,582.0 L461.9,584.0 L461.9,586.0 L461.9,588.0 L461.9,590.0 L461.9,592.0 L461.9,594.0 L461.9,596.0 L461.9,598.0 L461.9,600.0 L461.9,602.0 L461.9,604.0 L462.0,606.0 L462.0,608.0 L462.0,610.0 L462.0,612.0 L462.0,614.0 L462.0,616.0 L462.0,618.0 L462.0,620.0 L462.0,622.0 L462.0,624.0 L462.0,626.0 L462.0,628.0 L462.0,630.0 L462.0,632.0 L462.1,634.0 L462.1,636.0 L462.1,638.0 L462.1,640.0 L462.1,642.0 L462.1,644.0 L462.1,646.0 L462.1,648.0 L462.1,650.0 L462.1,652.0 L462.1,654.0 L462.1,656.0 L462.1,658.0 L462.1,660.0 L462.1,662.0 L462.2,664.0 L462.2,666.0 L462.2,668.0 L462.2,670.0 L462.2,672.0 L462.2,674.0 L462.2,676.0 L462.2,678.0 L462.2,680.0 L462.2,682.0 L462.2,684.0 L462.2,686.0 L462.2,688.0 L462.2,690.0 L462.3,692.0 L462.3,694.0 L462.3,696.0 L462.3,698.0 L462.3,700.0 L462.3,702.0 L462.3,704.0 L462.3,706.0 L462.3,708.0 L462.3,710.0 L462.3,712.0 L462.3,714.0 L462.3,716.0 L462.3,718.0 L462.3,720.0 L462.4,722.0 L462.4,724.0 L462.4,726.0 L462.4,728.0 L462.4,730.0 L462.4,732.0 L462.4,734.0 L462.4,736.0 L462.4,738.0 L462.4,740.0 L462.4,742.0 L462.4,744.0 L462.4,746.0 L462.4,748.0 L462.5,750.0 L462.5,752.0 L462.5,754.0 L462.5,756.0 L462.5,758.0 L462.5,760.0 L462.5,762.0 L462.5,764.0 L462.5,766.0 L462.5,768.0 L462.5,770.0 L462.5,772.0 L462.5,774.0 L462.5,776.0 L462.5,778.0 L462.5,778.0 L461.1,778.0 L461.0,778.0 L461.0,776.0 L461.0,774.0 L461.0,772.0 L461.0,770.0 L461.0,768.0 L461.0,766.0 L461.0,764.0 L461.0,762.0 L461.0,760.0 L461.0,758.0 L461.0,756.0 L461.0,754.0 L461.0,752.0 L461.0,750.0 L460.9,748.0 L460.9,746.0 L460.9,744.0 L460.9,742.0 L460.9,740.0 L460.9,738.0 L460.9,736.0 L460.9,734.0 L460.9,732.0 L460.9,730.0 L460.9,728.0 L460.9,726.0 L460.9,724.0 L460.9,722.0 L460.9,720.0 L460.8,718.0 L460.8,716.0 L460.8,714.0 L460.8,712.0 L460.8,710.0 L460.8,708.0 L460.8,706.0 L460.8,704.0 L460.8,702.0 L460.8,700.0 L460.8,698.0 L460.8,696.0 L460.8,694.0 L460.8,692.0 L460.7,690.0 L460.7,688.0 L460.7,686.0 L460.7,684.0 L460.7,682.0 L460.7,680.0 L460.7,678.0 L460.7,676.0 L460.7,674.0 L460.7,672.0 L460.7,670.0 L460.7,668.0 L460.7,666.0 L460.7,664.0 L460.7,662.0 L460.6,660.0 L460.6,658.0 L460.6,656.0 L460.6,654.0 L460.6,652.0 L460.6,650.0 L460.6,648.0 L460.6,646.0 L460.6,644.0 L460.6,642.0 L460.6,640.0 L460.6,638.0 L460.6,636.0 L460.6,634.0 L460.5,632.0 L460.5,630.0 L460.5,628.0 L460.5,626.0 L460.5,624.0 L460.5,622.0 L460.5,620.0 L460.5,618.0 L460.5,616.0 L460.5,614.0 L460.5,612.0 L460.5,610.0 L460.5,608.0 L460.5,606.0 L460.5,604.0 L460.4,602.0 L460.4,600.0 L460.4,598.0 L460.4,596.0 L460.4,594.0 L460.4,592.0 L460.4,590.0 L460.4,588.0 L460.4,586.0 L460.4,584.0 L460.4,582.0 L460.4,580.0 L460.4,578.0 L460.4,576.0 L460.3,574.0 L460.3,572.0 L460.3,570.0 L460.3,568.0 L460.3,566.0 L460.3,564.0 L460.3,562.0 L460.3,560.0 L460.3,558.0 L460.4,556.0 L460.5,554.0 L460.5,552.0 L460.6,550.0 L460.7,548.0 L461.0,546.0Z" fill="rgb(47,47,47)"/>
<path d="M516.5,329.0 L517.9,331.0 L518.4,333.0 L518.9,335.0 L519.3,337.0 L519.6,339.0 L519.9,341.0 L520.2,343.0 L520.5,345.0 L520.7,347.0 L521.0,348.9 L521.0,350.9 L521.0,352.9 L521.1,354.9 L521.1,356.9 L521.1,358.9 L521.1,360.9 L521.2,362.9 L521.2,364.9 L521.2,366.9 L521.2,368.9 L521.2,370.9 L521.2,370.9 L521.3,372.9 L521.3,374.9 L521.3,376.9 L521.4,378.9 L521.4,380.9 L521.4,382.9 L521.5,384.9 L521.5,386.9 L521.5,388.9 L521.5,390.9 L521.6,392.9 L521.6,394.9 L521.6,396.9 L521.7,398.9 L521.7,400.9 L521.7,402.9 L521.7,404.9 L521.8,406.9 L521.8,408.9 L521.8,410.9 L521.9,412.9 L521.9,414.9 L521.9,416.9 L521.9,418.9 L522.0,420.9 L522.0,422.9 L522.0,424.9 L522.1,426.9 L522.1,428.9 L522.1,430.9 L522.2,432.9 L522.2,434.9 L522.2,436.9 L522.2,438.9 L522.3,440.9 L522.3,442.9 L522.3,444.9 L522.4,446.9 L522.4,448.9 L522.4,450.9 L522.4,452.9 L522.5,454.9 L522.5,456.9 L522.5,458.9 L522.6,460.9 L522.6,462.9 L522.6,464.9 L522.6,466.9 L522.7,468.9 L522.7,470.9 L522.7,472.9 L522.8,474.9 L522.8,476.9 L522.8,478.9 L522.8,480.9 L522.8,480.9 L522.9,482.9 L522.9,484.9 L522.9,486.9 L522.9,488.9 L523.0,490.9 L523.0,492.9 L523.0,494.9 L523.0,496.9 L523.1,498.9 L523.1,500.9 L523.1,502.9 L523.1,504.9 L523.2,506.9 L523.2,508.9 L523.2,510.9 L523.2,512.9 L523.3,514.9 L523.3,516.9 L523.3,518.9 L523.3,520.9 L523.4,522.9 L523.4,524.9 L523.4,526.9 L523.4,528.9 L523.4,530.9 L523.4,530.9 L515.0,531.1 L515.0,531.0 L514.9,529.0 L514.9,527.0 L514.9,525.0 L514.9,523.0 L514.8,521.0 L514.8,519.0 L514.8,517.0 L514.8,515.0 L514.7,513.0 L514.7,511.0 L514.7,509.0 L514.7,507.0 L514.6,505.0 L514.6,503.0 L514.6,501.0 L514.6,499.0 L514.5,497.0 L514.5,495.0 L514.5,493.0 L514.5,491.0 L514.4,489.0 L514.4,487.0 L514.4,485.0 L514.4,483.0 L514.4,481.1 L514.4,481.0 L514.3,479.0 L514.3,477.0 L514.3,475.0 L514.2,473.0 L514.2,471.0 L514.2,469.0 L514.1,467.0 L514.1,465.0 L514.1,463.0 L514.1,461.0 L514.0,459.0 L514.0,457.0 L514.0,455.0 L513.9,453.1 L513.9,451.1 L513.9,449.1 L513.9,447.1 L513.8,445.1 L513.8,443.1 L513.8,441.1 L513.7,439.1 L513.7,437.1 L513.7,435.1 L513.7,433.1 L513.6,431.1 L513.6,429.1 L513.6,427.1 L513.5,425.1 L513.5,423.1 L513.5,421.1 L513.4,419.1 L513.4,417.1 L513.4,415.1 L513.4,413.1 L513.3,411.1 L513.3,409.1 L513.3,407.1 L513.2,405.1 L513.2,403.1 L513.2,401.1 L513.2,399.1 L513.1,397.1 L513.1,395.1 L513.1,393.1 L513.0,391.1 L513.0,389.1 L513.0,387.1 L513.0,385.1 L512.9,383.1 L512.9,381.1 L512.9,379.1 L512.8,377.1 L512.8,375.1 L512.8,373.1 L512.8,371.1 L512.8,371.0 L512.7,369.0 L512.7,367.0 L512.7,365.0 L512.7,363.0 L512.6,361.0 L512.6,359.0 L512.6,357.0 L512.6,355.0 L512.5,353.0 L512.5,351.0 L512.5,349.0 L512.7,347.0 L512.9,345.0 L513.1,343.0 L513.4,341.0 L513.6,339.0 L513.9,337.0 L514.2,335.0 L514.6,333.0 L515.2,331.0 L516.5,329.0Z" fill="rgb(215,215,215)"/>
<linearGradient id="lg2" gradientUnits="userSpaceOnUse" x1="0" y1="521" x2="0" y2="778"><stop offset="0.000" stop-color="rgb(214,214,214)"/><stop offset="0.233" stop-color="rgb(182,182,182)"/><stop offset="1.000" stop-color="rgb(171,171,171)"/></linearGradient>
<path d="M521.2,521.0 L521.2,523.0 L521.2,525.0 L521.3,527.0 L521.3,529.0 L521.3,531.0 L521.3,533.0 L521.4,535.0 L521.4,537.0 L521.4,539.0 L521.4,541.0 L521.5,543.0 L521.5,545.0 L521.5,547.0 L521.5,549.0 L521.6,551.0 L521.6,553.0 L521.6,555.0 L521.6,557.0 L521.7,559.0 L521.7,561.0 L521.7,563.0 L521.7,565.0 L521.8,567.0 L521.8,569.0 L521.8,571.0 L521.8,571.0 L521.8,572.9 L521.9,574.9 L521.9,576.9 L522.0,578.9 L522.0,580.9 L522.0,582.9 L522.1,584.9 L522.1,586.9 L522.1,588.9 L522.2,590.9 L522.2,592.9 L522.3,594.9 L522.3,596.9 L522.3,598.9 L522.4,600.9 L522.4,602.9 L522.4,604.9 L522.5,606.9 L522.5,608.9 L522.6,610.9 L522.6,612.9 L522.6,614.9 L522.7,616.9 L522.7,618.9 L522.7,620.9 L522.8,622.9 L522.8,624.9 L522.9,626.9 L522.9,628.9 L522.9,630.9 L523.0,632.9 L523.0,634.9 L523.0,636.9 L523.1,638.9 L523.1,640.9 L523.2,642.9 L523.2,644.9 L523.2,646.9 L523.3,648.9 L523.3,650.9 L523.3,652.9 L523.4,654.9 L523.4,656.9 L523.5,658.9 L523.5,660.9 L523.5,660.9 L523.5,663.0 L523.5,665.0 L523.6,667.0 L523.6,669.0 L523.6,671.0 L523.6,673.0 L523.6,675.0 L523.6,677.0 L523.7,679.0 L523.7,681.0 L523.7,683.0 L523.7,685.0 L523.7,687.0 L523.7,689.0 L523.8,691.0 L523.8,693.0 L523.8,695.0 L523.8,697.0 L523.8,699.0 L523.8,701.0 L523.9,703.0 L523.9,705.0 L523.9,707.0 L523.9,709.0 L523.9,711.0 L523.9,713.0 L524.0,715.0 L524.0,717.0 L524.0,719.0 L524.0,721.0 L524.0,723.0 L524.0,725.0 L524.1,727.0 L524.1,729.0 L524.1,731.0 L524.1,733.0 L524.1,735.0 L524.1,737.0 L524.2,739.0 L524.2,741.0 L524.2,743.0 L524.2,745.0 L524.2,747.0 L524.3,749.0 L524.3,751.0 L524.3,753.0 L524.3,755.0 L524.3,757.0 L524.3,759.0 L524.4,761.0 L524.4,763.0 L524.4,765.0 L524.4,767.0 L524.4,769.0 L524.4,771.0 L524.5,773.0 L524.5,775.0 L524.5,777.0 L524.5,778.0 L518.5,778.0 L518.5,777.0 L518.5,775.0 L518.5,773.0 L518.4,771.0 L518.4,769.0 L518.4,767.0 L518.4,765.0 L518.4,763.0 L518.4,761.0 L518.3,759.0 L518.3,757.0 L518.3,755.0 L518.3,753.0 L518.3,751.0 L518.3,749.0 L518.2,747.0 L518.2,745.0 L518.2,743.0 L518.2,741.0 L518.2,739.0 L518.1,737.0 L518.1,735.0 L518.1,733.0 L518.1,731.0 L518.1,729.0 L518.1,727.0 L518.0,725.0 L518.0,723.0 L518.0,721.0 L518.0,719.0 L518.0,717.0 L518.0,715.0 L517.9,713.0 L517.9,711.0 L517.9,709.0 L517.9,707.0 L517.9,705.0 L517.9,703.0 L517.8,701.0 L517.8,699.0 L517.8,697.0 L517.8,695.0 L517.8,693.0 L517.8,691.0 L517.7,689.0 L517.7,687.0 L517.7,685.0 L517.7,683.0 L517.7,681.0 L517.7,679.0 L517.6,677.0 L517.6,675.0 L517.6,673.0 L517.6,671.0 L517.6,669.0 L517.6,667.0 L517.5,665.0 L517.5,663.0 L517.5,661.1 L517.5,661.0 L517.5,659.0 L517.4,657.0 L517.4,655.0 L517.3,653.0 L517.3,651.0 L517.3,649.0 L517.2,647.0 L517.2,645.0 L517.2,643.0 L517.1,641.0 L517.1,639.0 L517.0,637.0 L517.0,635.0 L517.0,633.0 L516.9,631.0 L516.9,629.0 L516.9,627.0 L516.8,625.0 L516.8,623.0 L516.7,621.0 L516.7,619.0 L516.7,617.0 L516.6,615.0 L516.6,613.0 L516.6,611.0 L516.5,609.0 L516.5,607.0 L516.4,605.0 L516.4,603.0 L516.4,601.0 L516.3,599.0 L516.3,597.0 L516.3,595.0 L516.2,593.0 L516.2,591.0 L516.1,589.0 L516.1,587.1 L516.1,585.1 L516.0,583.1 L516.0,581.1 L516.0,579.1 L515.9,577.1 L515.9,575.1 L515.8,573.1 L515.8,571.0 L515.8,571.0 L515.8,569.0 L515.8,567.0 L515.7,565.0 L515.7,563.0 L515.7,561.0 L515.7,559.0 L515.6,557.0 L515.6,555.0 L515.6,553.0 L515.6,551.0 L515.5,549.0 L515.5,547.0 L515.5,545.0 L515.5,543.0 L515.4,541.0 L515.4,539.0 L515.4,537.0 L515.4,535.0 L515.3,533.0 L515.3,531.0 L515.3,529.0 L515.3,527.0 L515.2,525.0 L515.2,523.0 L515.2,521.0Z" fill="url(#lg2)"/>
<linearGradient id="lg3" gradientUnits="userSpaceOnUse" x1="0" y1="521" x2="0" y2="778"><stop offset="0.000" stop-color="rgb(197,197,197)"/><stop offset="0.233" stop-color="rgb(164,164,164)"/><stop offset="1.000" stop-color="rgb(155,155,155)"/></linearGradient>
<path d="M524.0,521.0 L524.0,522.9 L524.1,524.9 L524.1,526.9 L524.2,528.9 L524.2,530.9 L524.2,532.9 L524.3,534.9 L524.3,536.9 L524.4,538.9 L524.4,540.9 L524.4,542.9 L524.5,544.9 L524.5,546.9 L524.6,548.9 L524.6,550.9 L524.6,552.9 L524.7,554.9 L524.7,556.9 L524.8,558.9 L524.8,560.9 L524.8,562.9 L524.9,564.9 L524.9,566.9 L525.0,568.9 L525.0,570.9 L525.0,571.0 L525.1,572.9 L525.1,574.9 L525.2,576.9 L525.3,578.9 L525.3,580.9 L525.4,582.9 L525.5,584.9 L525.5,586.9 L525.6,588.9 L525.7,590.9 L525.7,592.9 L525.8,594.9 L525.9,596.9 L525.9,598.9 L526.0,600.9 L526.1,602.9 L526.1,604.9 L526.2,606.9 L526.3,608.9 L526.3,610.9 L526.4,612.9 L526.5,614.9 L526.5,616.9 L526.6,618.9 L526.7,620.9 L526.7,622.9 L526.8,624.9 L526.9,626.9 L526.9,628.9 L527.0,630.9 L527.1,632.9 L527.1,634.9 L527.2,636.9 L527.3,638.9 L527.3,640.9 L527.4,642.9 L527.5,644.9 L527.5,646.9 L527.6,648.9 L527.7,650.9 L527.7,652.9 L527.8,654.9 L527.9,656.9 L527.9,658.9 L528.0,660.9 L528.0,660.9 L528.0,662.9 L528.1,664.9 L528.1,666.9 L528.1,668.9 L528.1,670.9 L528.2,672.9 L528.2,674.9 L528.2,676.9 L528.2,678.9 L528.3,680.9 L528.3,682.9 L528.3,684.9 L528.3,686.9 L528.4,688.9 L528.4,690.9 L528.4,692.9 L528.4,694.9 L528.5,696.9 L528.5,698.9 L528.5,700.9 L528.5,702.9 L528.6,704.9 L528.6,706.9 L528.6,708.9 L528.6,710.9 L528.7,712.9 L528.7,714.9 L528.7,716.9 L528.7,718.9 L528.8,720.9 L528.8,722.9 L528.8,724.9 L528.8,726.9 L528.9,728.9 L528.9,730.9 L528.9,732.9 L528.9,734.9 L529.0,736.9 L529.0,738.9 L529.0,740.9 L529.1,742.9 L529.1,744.9 L529.1,746.9 L529.1,748.9 L529.2,750.9 L529.2,752.9 L529.2,754.9 L529.2,756.9 L529.3,758.9 L529.3,760.9 L529.3,762.9 L529.3,764.9 L529.4,766.9 L529.4,768.9 L529.4,770.9 L529.4,772.9 L529.5,774.9 L529.5,776.9 L529.5,778.0 L524.5,778.0 L524.5,777.0 L524.5,775.0 L524.4,773.0 L524.4,771.0 L524.4,769.0 L524.4,767.0 L524.3,765.0 L524.3,763.0 L524.3,761.0 L524.3,759.0 L524.2,757.0 L524.2,755.0 L524.2,753.0 L524.2,751.0 L524.1,749.0 L524.1,747.0 L524.1,745.0 L524.1,743.0 L524.0,741.0 L524.0,739.0 L524.0,737.0 L523.9,735.0 L523.9,733.0 L523.9,731.0 L523.9,729.0 L523.8,727.0 L523.8,725.0 L523.8,723.0 L523.8,721.0 L523.7,719.0 L523.7,717.0 L523.7,715.0 L523.7,713.0 L523.6,711.0 L523.6,709.0 L523.6,707.0 L523.6,705.0 L523.5,703.0 L523.5,701.0 L523.5,699.0 L523.5,697.0 L523.4,695.0 L523.4,693.0 L523.4,691.0 L523.4,689.0 L523.3,687.0 L523.3,685.0 L523.3,683.0 L523.3,681.0 L523.2,679.0 L523.2,677.0 L523.2,675.0 L523.2,673.0 L523.1,671.0 L523.1,669.0 L523.1,667.0 L523.1,665.0 L523.0,663.0 L523.0,661.1 L523.0,661.0 L522.9,659.0 L522.9,657.0 L522.8,655.0 L522.7,653.0 L522.7,651.0 L522.6,649.0 L522.5,647.0 L522.5,645.0 L522.4,643.0 L522.3,641.0 L522.3,639.0 L522.2,637.0 L522.1,635.0 L522.1,633.0 L522.0,631.0 L521.9,629.0 L521.9,627.0 L521.8,625.0 L521.7,623.0 L521.7,621.0 L521.6,619.0 L521.5,617.0 L521.5,615.0 L521.4,613.0 L521.3,611.1 L521.3,609.1 L521.2,607.1 L521.1,605.1 L521.1,603.1 L521.0,601.1 L520.9,599.1 L520.9,597.1 L520.8,595.1 L520.7,593.1 L520.7,591.1 L520.6,589.1 L520.5,587.1 L520.5,585.1 L520.4,583.1 L520.3,581.1 L520.3,579.1 L520.2,577.1 L520.1,575.1 L520.1,573.1 L520.0,571.0 L520.0,571.0 L520.0,569.0 L519.9,567.0 L519.9,565.0 L519.8,563.0 L519.8,561.0 L519.8,559.0 L519.7,557.0 L519.7,555.0 L519.6,553.0 L519.6,551.0 L519.6,549.0 L519.5,547.0 L519.5,545.0 L519.4,543.0 L519.4,541.0 L519.4,539.0 L519.3,537.0 L519.3,535.0 L519.2,533.0 L519.2,531.0 L519.2,529.0 L519.1,527.0 L519.1,525.0 L519.0,523.0 L519.0,521.0Z" fill="url(#lg3)"/>
<path d="M617.5,361.0 L617.9,363.0 L618.0,365.0 L618.2,367.0 L618.4,369.0 L618.5,371.0 L618.6,373.0 L618.7,375.0 L618.8,377.0 L618.9,379.0 L619.0,381.0 L619.0,383.0 L619.1,385.0 L619.2,387.0 L619.2,389.0 L619.3,391.0 L619.4,393.0 L619.5,395.0 L619.5,397.0 L619.6,398.9 L619.7,400.9 L619.7,402.9 L619.8,404.9 L619.9,406.9 L620.0,408.9 L620.0,410.9 L620.1,412.9 L620.2,414.9 L620.2,416.9 L620.3,418.9 L620.4,420.9 L620.5,422.9 L620.5,424.9 L620.6,426.9 L620.7,428.9 L620.7,430.9 L620.8,432.9 L620.9,434.9 L621.0,436.9 L621.0,438.9 L621.1,440.9 L621.2,442.9 L621.2,444.9 L621.3,446.9 L621.4,448.9 L621.5,450.9 L621.5,452.9 L621.6,454.9 L621.7,456.9 L621.7,458.9 L621.8,460.9 L621.9,462.9 L622.0,464.9 L622.0,466.9 L622.1,468.9 L622.2,470.9 L622.2,472.9 L622.3,474.9 L622.4,476.9 L622.5,478.9 L622.5,480.9 L622.6,482.9 L622.7,484.9 L622.7,486.9 L622.8,488.9 L622.8,490.9 L622.8,492.9 L622.8,494.9 L622.8,496.9 L622.7,498.9 L622.6,500.9 L622.5,501.0 L622.5,501.0 L622.4,500.9 L622.1,498.9 L621.9,496.9 L621.8,494.9 L621.6,492.9 L621.5,490.9 L621.4,488.9 L621.2,486.9 L621.2,484.9 L621.1,482.9 L621.0,481.0 L621.0,479.0 L620.9,477.0 L620.8,475.0 L620.7,473.0 L620.7,471.0 L620.6,469.0 L620.5,467.0 L620.5,465.0 L620.4,463.0 L620.3,461.0 L620.2,459.0 L620.2,457.0 L620.1,455.0 L620.0,453.0 L620.0,451.0 L619.9,449.0 L619.8,447.0 L619.7,445.0 L619.7,443.0 L619.6,441.0 L619.5,439.0 L619.5,437.0 L619.4,435.0 L619.3,433.0 L619.2,431.0 L619.2,429.0 L619.1,427.0 L619.0,425.0 L619.0,423.0 L618.9,421.0 L618.8,419.0 L618.7,417.0 L618.7,415.0 L618.6,413.0 L618.5,411.0 L618.5,409.0 L618.4,407.0 L618.3,405.0 L618.2,403.0 L618.2,401.0 L618.1,399.0 L618.0,397.0 L618.0,395.0 L617.9,393.0 L617.8,391.0 L617.7,389.0 L617.7,387.0 L617.6,385.0 L617.5,383.0 L617.5,381.0 L617.4,379.0 L617.3,377.0 L617.3,375.0 L617.2,373.0 L617.2,371.0 L617.2,369.0 L617.2,367.0 L617.2,365.0 L617.3,363.0 L617.5,361.0Z" fill="rgb(40,40,40)"/>
<path d="M711.5,353.0 L711.8,355.0 L711.9,357.0 L712.0,359.0 L712.0,361.0 L712.1,363.0 L712.2,365.0 L712.2,367.0 L712.2,369.0 L712.2,371.0 L712.2,373.0 L712.2,375.0 L712.2,377.0 L712.2,379.0 L712.2,381.0 L712.2,383.0 L712.2,385.0 L712.2,387.0 L712.1,389.0 L712.1,391.0 L712.1,393.0 L712.1,395.0 L712.1,397.0 L712.1,399.0 L712.1,401.0 L712.1,403.0 L712.1,405.0 L712.1,407.0 L712.1,409.0 L712.1,411.0 L712.1,413.0 L712.1,415.0 L712.1,417.0 L712.1,419.0 L712.1,421.0 L712.0,423.0 L712.0,425.0 L712.0,427.0 L712.0,429.0 L712.0,431.0 L712.0,433.0 L712.0,435.0 L712.0,437.0 L712.0,439.0 L712.0,441.0 L712.0,443.0 L712.0,445.0 L712.0,447.0 L712.0,449.0 L712.0,451.0 L712.0,453.0 L712.0,455.0 L712.0,457.0 L711.9,459.0 L711.9,461.0 L711.9,463.0 L711.9,465.0 L711.9,467.0 L711.9,469.0 L711.9,471.0 L711.9,473.0 L711.9,475.0 L711.9,477.0 L711.9,479.0 L711.9,481.0 L711.9,483.0 L711.9,485.0 L711.9,487.0 L711.9,489.0 L711.9,491.0 L711.8,493.0 L711.8,495.0 L711.8,497.0 L711.8,499.0 L711.8,501.0 L711.8,503.0 L711.8,505.0 L711.8,507.0 L711.8,509.0 L711.8,511.0 L711.8,513.0 L711.7,515.0 L711.7,517.0 L711.6,519.0 L711.5,521.0 L711.4,523.0 L711.3,525.0 L711.0,527.0 L711.0,527.0 L711.0,527.0 L711.0,527.0 L710.7,525.0 L710.6,523.0 L710.5,521.0 L710.5,519.0 L710.4,517.0 L710.3,515.0 L710.3,513.0 L710.3,511.0 L710.3,509.0 L710.3,507.0 L710.3,505.0 L710.3,503.0 L710.3,501.0 L710.3,499.0 L710.3,497.0 L710.3,495.0 L710.3,493.0 L710.4,491.0 L710.4,489.0 L710.4,487.0 L710.4,485.0 L710.4,483.0 L710.4,481.0 L710.4,479.0 L710.4,477.0 L710.4,475.0 L710.4,473.0 L710.4,471.0 L710.4,469.0 L710.4,467.0 L710.4,465.0 L710.4,463.0 L710.4,461.0 L710.4,459.0 L710.5,457.0 L710.5,455.0 L710.5,453.0 L710.5,451.0 L710.5,449.0 L710.5,447.0 L710.5,445.0 L710.5,443.0 L710.5,441.0 L710.5,439.0 L710.5,437.0 L710.5,435.0 L710.5,433.0 L710.5,431.0 L710.5,429.0 L710.5,427.0 L710.5,425.0 L710.5,423.0 L710.6,421.0 L710.6,419.0 L710.6,417.0 L710.6,415.0 L710.6,413.0 L710.6,411.0 L710.6,409.0 L710.6,407.0 L710.6,405.0 L710.6,403.0 L710.6,401.0 L710.6,399.0 L710.6,397.0 L710.6,395.0 L710.6,393.0 L710.6,391.0 L710.6,389.0 L710.7,387.0 L710.7,385.0 L710.7,383.0 L710.7,381.0 L710.7,379.0 L710.7,377.0 L710.7,375.0 L710.7,373.0 L710.7,371.0 L710.7,369.0 L710.7,367.0 L710.8,365.0 L710.8,363.0 L710.9,361.0 L711.0,359.0 L711.1,357.0 L711.2,355.0 L711.5,353.0Z" fill="rgb(113,113,113)"/>
<path d="M793.0,353.0 L793.4,355.0 L793.7,357.0 L794.0,358.9 L794.2,360.9 L794.5,362.9 L794.7,364.9 L794.9,366.9 L795.1,368.9 L795.2,370.9 L795.4,372.9 L795.6,374.9 L795.7,376.9 L795.9,378.8 L796.1,380.8 L796.2,382.8 L796.4,384.8 L796.6,386.8 L796.7,388.8 L796.9,390.8 L797.1,392.8 L797.2,394.8 L797.4,396.8 L797.6,398.8 L797.7,400.8 L797.9,402.8 L798.1,404.8 L798.2,406.8 L798.4,408.7 L798.5,410.7 L798.7,412.7 L798.9,414.7 L799.0,416.7 L799.2,418.7 L799.4,420.7 L799.5,422.7 L799.7,424.7 L799.9,426.7 L800.0,428.7 L800.2,430.7 L800.4,432.7 L800.5,434.7 L800.7,436.6 L800.9,438.6 L801.0,440.6 L801.2,442.6 L801.4,444.6 L801.5,446.6 L801.7,448.6 L801.9,450.6 L802.0,452.6 L802.2,454.6 L802.4,456.6 L802.5,458.6 L802.7,460.6 L802.9,462.6 L803.0,464.6 L803.2,466.5 L803.3,468.5 L803.5,470.5 L803.5,470.9 L803.7,472.5 L803.8,474.5 L804.0,476.5 L804.1,478.5 L804.3,480.5 L804.4,482.5 L804.6,484.5 L804.7,486.5 L804.9,488.5 L805.1,490.5 L805.2,492.5 L805.4,494.5 L805.5,496.5 L805.7,498.5 L805.8,500.4 L806.0,502.4 L806.1,504.4 L806.3,506.4 L806.4,508.4 L806.6,510.4 L806.7,512.4 L806.9,514.4 L807.0,516.4 L807.2,518.4 L807.4,520.4 L807.5,522.4 L807.6,524.4 L807.7,526.4 L807.8,528.4 L807.8,530.4 L807.9,532.4 L807.9,534.4 L807.8,536.0 L807.8,536.0 L807.4,534.4 L807.1,532.4 L806.9,530.5 L806.7,528.5 L806.4,526.5 L806.2,524.5 L806.0,522.5 L805.9,520.5 L805.7,518.5 L805.5,516.5 L805.4,514.5 L805.2,512.5 L805.1,510.5 L804.9,508.5 L804.8,506.5 L804.6,504.6 L804.5,502.6 L804.3,500.6 L804.2,498.6 L804.0,496.6 L803.9,494.6 L803.7,492.6 L803.6,490.6 L803.4,488.6 L803.2,486.6 L803.1,484.6 L802.9,482.6 L802.8,480.6 L802.6,478.6 L802.5,476.6 L802.3,474.6 L802.2,472.6 L802.1,471.1 L802.0,470.7 L801.9,468.7 L801.7,466.7 L801.5,464.7 L801.4,462.7 L801.2,460.7 L801.0,458.7 L800.9,456.7 L800.7,454.7 L800.5,452.7 L800.4,450.7 L800.2,448.7 L800.0,446.7 L799.9,444.7 L799.7,442.8 L799.5,440.8 L799.4,438.8 L799.2,436.8 L799.0,434.8 L798.9,432.8 L798.7,430.8 L798.5,428.8 L798.4,426.8 L798.2,424.8 L798.0,422.8 L797.9,420.8 L797.7,418.8 L797.5,416.8 L797.4,414.8 L797.2,412.9 L797.1,410.9 L796.9,408.9 L796.7,406.9 L796.6,404.9 L796.4,402.9 L796.2,400.9 L796.1,398.9 L795.9,396.9 L795.7,394.9 L795.6,392.9 L795.4,390.9 L795.2,388.9 L795.1,386.9 L794.9,385.0 L794.7,383.0 L794.6,381.0 L794.4,379.0 L794.2,377.0 L794.1,375.0 L793.9,373.0 L793.7,371.0 L793.6,369.0 L793.4,367.0 L793.3,365.0 L793.2,363.0 L793.1,361.0 L793.0,359.0 L792.9,357.0 L792.9,355.0 L793.0,353.0Z" fill="rgb(113,113,113)"/>
<path d="M836.0,352.0 L836.3,354.0 L836.4,356.0 L836.5,358.0 L836.6,360.0 L836.7,362.0 L836.8,364.0 L836.9,366.0 L836.9,368.0 L836.9,370.0 L836.9,372.0 L836.9,374.0 L836.9,376.0 L836.9,378.0 L837.0,380.0 L837.0,382.0 L837.0,384.0 L837.0,386.0 L837.0,388.0 L837.0,390.0 L837.1,392.0 L837.1,394.0 L837.1,396.0 L837.1,398.0 L837.1,400.0 L837.1,402.0 L837.1,404.0 L837.2,406.0 L837.2,408.0 L837.2,410.0 L837.2,412.0 L837.2,414.0 L837.2,416.0 L837.2,418.0 L837.3,420.0 L837.3,422.0 L837.3,424.0 L837.3,426.0 L837.3,428.0 L837.3,430.0 L837.4,432.0 L837.4,434.0 L837.4,436.0 L837.4,438.0 L837.4,440.0 L837.4,442.0 L837.4,444.0 L837.5,446.0 L837.5,448.0 L837.5,450.0 L837.5,452.0 L837.5,454.0 L837.5,456.0 L837.6,458.0 L837.6,460.0 L837.6,462.0 L837.6,464.0 L837.6,466.0 L837.6,468.0 L837.6,470.0 L837.6,471.0 L837.7,472.0 L837.7,474.0 L837.7,476.0 L837.7,478.0 L837.8,480.0 L837.8,482.0 L837.8,484.0 L837.8,486.0 L837.9,488.0 L837.9,490.0 L837.9,492.0 L837.9,494.0 L838.0,496.0 L838.0,498.0 L838.0,500.0 L838.1,502.0 L838.1,504.0 L838.0,506.0 L838.0,508.0 L837.9,510.0 L837.9,512.0 L837.8,514.0 L837.7,516.0 L837.5,517.0 L837.5,517.0 L837.3,516.0 L837.1,514.0 L837.0,512.0 L836.9,510.0 L836.8,508.0 L836.7,506.0 L836.6,504.0 L836.6,502.0 L836.5,500.0 L836.5,498.0 L836.5,496.0 L836.4,494.0 L836.4,492.0 L836.4,490.0 L836.4,488.0 L836.3,486.0 L836.3,484.0 L836.3,482.0 L836.3,480.0 L836.2,478.0 L836.2,476.0 L836.2,474.0 L836.2,472.0 L836.2,471.0 L836.1,470.0 L836.1,468.0 L836.1,466.0 L836.1,464.0 L836.1,462.0 L836.1,460.0 L836.1,458.0 L836.0,456.0 L836.0,454.0 L836.0,452.0 L836.0,450.0 L836.0,448.0 L836.0,446.0 L835.9,444.0 L835.9,442.0 L835.9,440.0 L835.9,438.0 L835.9,436.0 L835.9,434.0 L835.9,432.0 L835.8,430.0 L835.8,428.0 L835.8,426.0 L835.8,424.0 L835.8,422.0 L835.8,420.0 L835.7,418.0 L835.7,416.0 L835.7,414.0 L835.7,412.0 L835.7,410.0 L835.7,408.0 L835.7,406.0 L835.6,404.0 L835.6,402.0 L835.6,400.0 L835.6,398.0 L835.6,396.0 L835.6,394.0 L835.6,392.0 L835.5,390.0 L835.5,388.0 L835.5,386.0 L835.5,384.0 L835.5,382.0 L835.5,380.0 L835.4,378.0 L835.4,376.0 L835.4,374.0 L835.4,372.0 L835.4,370.0 L835.4,368.0 L835.4,366.0 L835.4,364.0 L835.4,362.0 L835.5,360.0 L835.6,358.0 L835.6,356.0 L835.7,354.0 L836.0,352.0Z" fill="rgb(100,100,100)"/>
<linearGradient id="lg4" gradientUnits="userSpaceOnUse" x1="0" y1="351" x2="0" y2="601"><stop offset="0.000" stop-color="rgb(47,47,47)"/><stop offset="0.520" stop-color="rgb(67,67,67)"/><stop offset="1.000" stop-color="rgb(80,80,80)"/></linearGradient>
<path d="M885.8,351.0 L886.1,353.0 L886.2,355.0 L886.3,357.0 L886.4,359.0 L886.4,361.0 L886.5,363.0 L886.5,365.0 L886.5,367.0 L886.5,369.0 L886.5,371.0 L886.5,373.0 L886.5,375.0 L886.5,377.0 L886.5,379.0 L886.5,381.0 L886.5,383.0 L886.5,385.0 L886.5,387.0 L886.5,389.0 L886.5,391.0 L886.5,393.0 L886.5,395.0 L886.5,397.0 L886.5,399.0 L886.4,401.0 L886.4,403.0 L886.4,405.0 L886.4,407.0 L886.4,409.0 L886.4,411.0 L886.4,413.0 L886.4,415.0 L886.4,417.0 L886.4,419.0 L886.4,421.0 L886.4,423.0 L886.4,425.0 L886.4,427.0 L886.4,429.0 L886.4,431.0 L886.4,433.0 L886.4,435.0 L886.4,437.0 L886.4,439.0 L886.4,441.0 L886.4,443.0 L886.4,445.0 L886.4,447.0 L886.4,449.0 L886.3,451.0 L886.3,453.0 L886.3,455.0 L886.3,457.0 L886.3,459.0 L886.3,461.0 L886.3,463.0 L886.3,465.0 L886.3,467.0 L886.3,469.0 L886.3,471.0 L886.3,473.0 L886.3,475.0 L886.3,477.0 L886.3,479.0 L886.3,481.0 L886.3,483.0 L886.3,485.0 L886.3,487.0 L886.3,489.0 L886.3,491.0 L886.3,493.0 L886.3,495.0 L886.3,497.0 L886.3,499.0 L886.2,501.0 L886.2,501.0 L886.2,503.0 L886.2,505.0 L886.2,507.0 L886.2,509.0 L886.2,511.0 L886.2,513.0 L886.2,515.0 L886.2,517.0 L886.2,519.0 L886.1,521.0 L886.1,523.0 L886.1,525.0 L886.1,527.0 L886.1,529.0 L886.1,531.0 L886.1,533.0 L886.1,535.0 L886.1,537.0 L886.1,539.0 L886.0,541.0 L886.0,543.0 L886.0,545.0 L886.0,547.0 L886.0,549.0 L886.0,551.0 L886.0,553.0 L886.0,555.0 L886.0,557.0 L886.0,559.0 L885.9,561.0 L885.9,563.0 L885.9,565.0 L885.9,567.0 L885.9,569.0 L885.9,571.0 L885.9,573.0 L885.9,575.0 L885.9,577.0 L885.9,579.0 L885.8,581.0 L885.8,583.0 L885.8,585.0 L885.8,587.0 L885.8,589.0 L885.7,591.0 L885.6,593.0 L885.5,595.0 L885.4,597.0 L885.3,599.0 L885.0,601.0 L885.0,601.0 L885.0,601.0 L885.0,601.0 L884.7,599.0 L884.6,597.0 L884.5,595.0 L884.5,593.0 L884.4,591.0 L884.4,589.0 L884.3,587.0 L884.3,585.0 L884.3,583.0 L884.4,581.0 L884.4,579.0 L884.4,577.0 L884.4,575.0 L884.4,573.0 L884.4,571.0 L884.4,569.0 L884.4,567.0 L884.4,565.0 L884.4,563.0 L884.5,561.0 L884.5,559.0 L884.5,557.0 L884.5,555.0 L884.5,553.0 L884.5,551.0 L884.5,549.0 L884.5,547.0 L884.5,545.0 L884.5,543.0 L884.6,541.0 L884.6,539.0 L884.6,537.0 L884.6,535.0 L884.6,533.0 L884.6,531.0 L884.6,529.0 L884.6,527.0 L884.6,525.0 L884.6,523.0 L884.7,521.0 L884.7,519.0 L884.7,517.0 L884.7,515.0 L884.7,513.0 L884.7,511.0 L884.7,509.0 L884.7,507.0 L884.7,505.0 L884.7,503.0 L884.8,501.0 L884.8,501.0 L884.8,499.0 L884.8,497.0 L884.8,495.0 L884.8,493.0 L884.8,491.0 L884.8,489.0 L884.8,487.0 L884.8,485.0 L884.8,483.0 L884.8,481.0 L884.8,479.0 L884.8,477.0 L884.8,475.0 L884.8,473.0 L884.8,471.0 L884.8,469.0 L884.8,467.0 L884.8,465.0 L884.8,463.0 L884.8,461.0 L884.8,459.0 L884.8,457.0 L884.8,455.0 L884.8,453.0 L884.9,451.0 L884.9,449.0 L884.9,447.0 L884.9,445.0 L884.9,443.0 L884.9,441.0 L884.9,439.0 L884.9,437.0 L884.9,435.0 L884.9,433.0 L884.9,431.0 L884.9,429.0 L884.9,427.0 L884.9,425.0 L884.9,423.0 L884.9,421.0 L884.9,419.0 L884.9,417.0 L884.9,415.0 L884.9,413.0 L884.9,411.0 L884.9,409.0 L884.9,407.0 L884.9,405.0 L884.9,403.0 L885.0,401.0 L885.0,399.0 L885.0,397.0 L885.0,395.0 L885.0,393.0 L885.0,391.0 L885.0,389.0 L885.0,387.0 L885.0,385.0 L885.0,383.0 L885.0,381.0 L885.0,379.0 L885.0,377.0 L885.0,375.0 L885.0,373.0 L885.0,371.0 L885.0,369.0 L885.0,367.0 L885.0,365.0 L885.1,363.0 L885.1,361.0 L885.2,359.0 L885.3,357.0 L885.4,355.0 L885.5,353.0 L885.8,351.0Z" fill="url(#lg4)"/>
<path d="M899.7,351.0 L900.0,353.0 L900.1,355.0 L900.2,357.0 L900.3,359.0 L900.3,361.0 L900.4,363.0 L900.5,365.0 L900.5,367.0 L900.5,369.0 L900.5,371.0 L900.5,373.0 L900.5,375.0 L900.5,377.0 L900.5,379.0 L900.5,381.0 L900.5,383.0 L900.5,385.0 L900.5,387.0 L900.5,389.0 L900.5,391.0 L900.5,393.0 L900.5,395.0 L900.5,397.0 L900.5,399.0 L900.5,401.0 L900.5,403.0 L900.5,405.0 L900.5,407.0 L900.5,409.0 L900.5,411.0 L900.5,413.0 L900.5,415.0 L900.5,417.0 L900.5,419.0 L900.5,421.0 L900.5,423.0 L900.5,425.0 L900.5,427.0 L900.5,429.0 L900.5,431.0 L900.5,433.0 L900.5,435.0 L900.5,437.0 L900.5,439.0 L900.5,441.0 L900.5,443.0 L900.5,445.0 L900.5,447.0 L900.5,449.0 L900.5,451.0 L900.5,453.0 L900.5,455.0 L900.5,457.0 L900.5,459.0 L900.5,461.0 L900.5,463.0 L900.5,465.0 L900.5,467.0 L900.5,469.0 L900.5,471.0 L900.5,473.0 L900.5,475.0 L900.5,477.0 L900.5,479.0 L900.5,481.0 L900.5,483.0 L900.5,485.0 L900.5,487.0 L900.5,489.0 L900.5,491.0 L900.5,493.0 L900.5,495.0 L900.5,497.0 L900.5,499.0 L900.5,501.0 L900.4,503.0 L900.3,505.0 L900.3,507.0 L900.2,509.0 L900.1,511.0 L900.0,513.0 L899.7,515.0 L899.7,515.0 L899.4,513.0 L899.3,511.0 L899.2,509.0 L899.1,507.0 L899.1,505.0 L899.0,503.0 L899.0,501.0 L899.0,499.0 L899.0,497.0 L899.0,495.0 L899.0,493.0 L899.0,491.0 L899.0,489.0 L899.0,487.0 L899.0,485.0 L899.0,483.0 L899.0,481.0 L899.0,479.0 L899.0,477.0 L899.0,475.0 L899.0,473.0 L899.0,471.0 L899.0,469.0 L899.0,467.0 L899.0,465.0 L899.0,463.0 L899.0,461.0 L899.0,459.0 L899.0,457.0 L899.0,455.0 L899.0,453.0 L899.0,451.0 L899.0,449.0 L899.0,447.0 L899.0,445.0 L899.0,443.0 L899.0,441.0 L899.0,439.0 L899.0,437.0 L899.0,435.0 L899.0,433.0 L899.0,431.0 L899.0,429.0 L899.0,427.0 L899.0,425.0 L899.0,423.0 L899.0,421.0 L899.0,419.0 L899.0,417.0 L899.0,415.0 L899.0,413.0 L899.0,411.0 L899.0,409.0 L899.0,407.0 L899.0,405.0 L899.0,403.0 L899.0,401.0 L899.0,399.0 L899.0,397.0 L899.0,395.0 L899.0,393.0 L899.0,391.0 L899.0,389.0 L899.0,387.0 L899.0,385.0 L899.0,383.0 L899.0,381.0 L899.0,379.0 L899.0,377.0 L899.0,375.0 L899.0,373.0 L899.0,371.0 L899.0,369.0 L899.0,367.0 L899.0,365.0 L899.0,363.0 L899.1,361.0 L899.1,359.0 L899.2,357.0 L899.3,355.0 L899.4,353.0 L899.7,351.0Z" fill="rgb(47,47,47)"/>
<path d="M919.0,353.0 L919.4,355.0 L919.7,357.0 L919.9,358.9 L920.2,360.9 L920.4,362.9 L920.6,364.9 L920.8,366.9 L920.9,368.9 L921.1,370.9 L921.2,372.9 L921.4,374.9 L921.5,376.9 L921.7,378.9 L921.8,380.9 L922.0,382.9 L922.1,384.9 L922.3,386.9 L922.4,388.8 L922.6,390.8 L922.7,392.8 L922.9,394.8 L923.0,396.8 L923.2,398.8 L923.3,400.8 L923.5,402.8 L923.6,404.8 L923.8,406.8 L923.9,408.8 L924.1,410.8 L924.2,412.8 L924.4,414.8 L924.5,416.8 L924.7,418.8 L924.8,420.8 L925.0,422.8 L925.1,424.7 L925.3,426.7 L925.4,428.7 L925.5,430.7 L925.7,432.7 L925.8,434.7 L926.0,436.7 L926.1,438.7 L926.3,440.7 L926.4,442.7 L926.6,444.7 L926.7,446.7 L926.9,448.7 L927.0,450.7 L927.2,452.7 L927.3,454.7 L927.5,456.7 L927.6,458.7 L927.8,460.6 L927.9,462.6 L928.1,464.6 L928.2,466.6 L928.4,468.6 L928.5,470.6 L928.5,470.9 L928.6,472.6 L928.8,474.6 L928.9,476.6 L929.0,478.6 L929.1,480.6 L929.2,482.6 L929.3,484.6 L929.4,486.6 L929.5,488.6 L929.6,490.6 L929.8,492.6 L929.9,494.6 L930.0,496.6 L930.1,498.6 L930.2,500.6 L930.3,502.6 L930.4,504.6 L930.5,506.6 L930.7,508.6 L930.8,510.6 L930.9,512.6 L931.0,514.6 L931.1,516.6 L931.2,518.6 L931.3,520.6 L931.4,522.5 L931.5,524.5 L931.7,526.5 L931.8,528.5 L931.9,530.5 L932.0,532.5 L932.0,534.5 L932.1,536.5 L932.1,538.5 L932.2,540.5 L932.2,542.5 L932.2,544.5 L932.0,546.0 L932.0,546.0 L931.7,544.6 L931.4,542.6 L931.2,540.6 L931.0,538.6 L930.9,536.6 L930.7,534.6 L930.5,532.6 L930.4,530.6 L930.3,528.6 L930.2,526.6 L930.1,524.6 L929.9,522.6 L929.8,520.6 L929.7,518.6 L929.6,516.6 L929.5,514.6 L929.4,512.6 L929.3,510.7 L929.2,508.7 L929.0,506.7 L928.9,504.7 L928.8,502.7 L928.7,500.7 L928.6,498.7 L928.5,496.7 L928.4,494.7 L928.3,492.7 L928.2,490.7 L928.0,488.7 L927.9,486.7 L927.8,484.7 L927.7,482.7 L927.6,480.7 L927.5,478.7 L927.4,476.7 L927.3,474.7 L927.1,472.7 L927.1,471.1 L927.0,470.7 L926.9,468.7 L926.7,466.7 L926.6,464.7 L926.4,462.8 L926.3,460.8 L926.1,458.8 L926.0,456.8 L925.8,454.8 L925.7,452.8 L925.5,450.8 L925.4,448.8 L925.2,446.8 L925.1,444.8 L924.9,442.8 L924.8,440.8 L924.6,438.8 L924.5,436.8 L924.4,434.8 L924.2,432.8 L924.1,430.8 L923.9,428.8 L923.8,426.9 L923.6,424.9 L923.5,422.9 L923.3,420.9 L923.2,418.9 L923.0,416.9 L922.9,414.9 L922.7,412.9 L922.6,410.9 L922.4,408.9 L922.3,406.9 L922.1,404.9 L922.0,402.9 L921.8,400.9 L921.7,398.9 L921.5,396.9 L921.4,394.9 L921.2,392.9 L921.1,391.0 L920.9,389.0 L920.8,387.0 L920.6,385.0 L920.5,383.0 L920.3,381.0 L920.2,379.0 L920.0,377.0 L919.9,375.0 L919.7,373.0 L919.6,371.0 L919.4,369.0 L919.3,367.0 L919.2,365.0 L919.1,363.0 L919.0,361.0 L919.0,359.0 L918.9,357.0 L918.9,355.0 L919.0,353.0Z" fill="rgb(120,120,120)"/>
<path d="M1010.0,353.0 L1010.4,355.0 L1010.6,357.0 L1010.8,359.0 L1010.9,361.0 L1011.1,363.0 L1011.2,365.0 L1011.4,367.0 L1011.5,369.0 L1011.6,370.9 L1011.6,372.9 L1011.7,374.9 L1011.8,376.9 L1011.9,378.9 L1012.0,380.9 L1012.1,382.9 L1012.2,384.9 L1012.3,386.9 L1012.4,388.9 L1012.5,390.9 L1012.5,392.9 L1012.6,394.9 L1012.7,396.9 L1012.8,398.9 L1012.9,400.9 L1013.0,402.9 L1013.1,404.9 L1013.2,406.9 L1013.3,408.9 L1013.4,410.9 L1013.4,412.9 L1013.5,414.9 L1013.6,416.9 L1013.7,418.9 L1013.8,420.9 L1013.9,422.9 L1014.0,424.9 L1014.1,426.9 L1014.2,428.9 L1014.2,430.9 L1014.3,432.9 L1014.4,434.9 L1014.5,436.9 L1014.6,438.9 L1014.7,440.9 L1014.8,442.9 L1014.9,444.9 L1015.0,446.9 L1015.1,448.9 L1015.1,450.9 L1015.2,452.9 L1015.3,454.9 L1015.4,456.9 L1015.5,458.9 L1015.6,460.9 L1015.7,462.9 L1015.8,464.9 L1015.9,466.9 L1016.0,468.8 L1016.0,470.8 L1016.0,471.0 L1016.1,472.9 L1016.2,474.9 L1016.3,476.9 L1016.3,478.8 L1016.4,480.8 L1016.5,482.8 L1016.5,484.8 L1016.6,486.8 L1016.7,488.8 L1016.8,490.8 L1016.8,492.8 L1016.9,494.8 L1017.0,496.8 L1017.0,498.8 L1017.1,500.8 L1017.2,502.8 L1017.2,504.8 L1017.3,506.8 L1017.3,508.8 L1017.3,510.8 L1017.3,512.8 L1017.3,514.8 L1017.2,516.8 L1017.1,518.8 L1017.0,519.0 L1017.0,519.0 L1016.9,518.9 L1016.6,516.9 L1016.4,514.9 L1016.3,512.9 L1016.1,510.9 L1016.0,508.9 L1015.9,506.9 L1015.7,504.9 L1015.7,502.9 L1015.6,500.9 L1015.5,498.9 L1015.5,496.9 L1015.4,494.9 L1015.3,492.9 L1015.3,490.9 L1015.2,488.9 L1015.1,486.9 L1015.0,484.9 L1015.0,482.9 L1014.9,480.9 L1014.8,478.9 L1014.8,476.9 L1014.7,474.9 L1014.6,472.9 L1014.6,471.0 L1014.5,470.9 L1014.5,468.9 L1014.4,466.9 L1014.3,464.9 L1014.2,462.9 L1014.1,460.9 L1014.0,458.9 L1013.9,456.9 L1013.8,454.9 L1013.7,452.9 L1013.6,450.9 L1013.6,448.9 L1013.5,446.9 L1013.4,444.9 L1013.3,442.9 L1013.2,440.9 L1013.1,438.9 L1013.0,436.9 L1012.9,435.0 L1012.8,433.0 L1012.8,431.0 L1012.7,429.0 L1012.6,427.0 L1012.5,425.0 L1012.4,423.0 L1012.3,421.0 L1012.2,419.0 L1012.1,417.0 L1012.0,415.0 L1011.9,413.0 L1011.9,411.0 L1011.8,409.0 L1011.7,407.0 L1011.6,405.0 L1011.5,403.0 L1011.4,401.0 L1011.3,399.0 L1011.2,397.0 L1011.1,395.0 L1011.0,393.0 L1011.0,391.0 L1010.9,389.0 L1010.8,387.0 L1010.7,385.0 L1010.6,383.0 L1010.5,381.0 L1010.4,379.0 L1010.3,377.0 L1010.2,375.0 L1010.1,373.0 L1010.1,371.0 L1010.0,369.0 L1009.9,367.0 L1009.8,365.0 L1009.8,363.0 L1009.8,361.0 L1009.8,359.0 L1009.8,357.0 L1009.8,355.0 L1010.0,353.0Z" fill="rgb(100,100,100)"/>
<path d="M323.5,507.0 L324.3,509.0 L324.6,511.0 L324.8,513.0 L325.1,515.0 L325.3,517.0 L325.4,519.0 L325.6,521.0 L325.6,523.0 L325.6,525.0 L325.6,527.0 L325.6,529.0 L325.7,531.0 L325.7,533.0 L325.7,535.0 L325.7,537.0 L325.7,539.0 L325.7,541.0 L325.7,543.0 L325.8,545.0 L325.8,547.0 L325.8,549.0 L325.8,551.0 L325.8,553.0 L325.8,555.0 L325.8,557.0 L325.9,559.0 L325.9,561.0 L325.9,563.0 L325.9,565.0 L325.9,567.0 L325.9,569.0 L325.9,571.0 L325.9,573.0 L326.0,575.0 L326.0,577.0 L326.0,579.0 L326.0,581.0 L326.0,581.0 L326.0,583.0 L326.0,585.0 L326.1,587.0 L326.1,589.0 L326.1,591.0 L326.1,593.0 L326.2,595.0 L326.2,597.0 L326.2,599.0 L326.2,601.0 L326.3,603.0 L326.3,605.0 L326.3,607.0 L326.3,609.0 L326.4,611.0 L326.4,613.0 L326.4,615.0 L326.4,617.0 L326.5,619.0 L326.5,621.0 L326.5,623.0 L326.5,625.0 L326.6,627.0 L326.6,629.0 L326.6,631.0 L326.6,633.0 L326.7,635.0 L326.7,637.0 L326.7,639.0 L326.7,641.0 L326.8,643.0 L326.8,645.0 L326.8,647.0 L326.8,649.0 L326.9,651.0 L326.9,653.0 L326.9,655.0 L326.9,657.0 L327.0,659.0 L327.0,661.0 L327.0,661.0 L327.0,663.0 L327.0,665.0 L327.1,667.0 L327.1,669.0 L327.1,671.0 L327.1,673.0 L327.1,675.0 L327.1,677.0 L327.2,679.0 L327.2,681.0 L327.2,683.0 L327.2,685.0 L327.2,687.0 L327.2,689.0 L327.3,691.0 L327.3,693.0 L327.3,695.0 L327.3,697.0 L327.3,699.0 L327.3,701.0 L327.4,703.0 L327.4,705.0 L327.4,707.0 L327.4,709.0 L327.4,711.0 L327.4,713.0 L327.5,715.0 L327.5,717.0 L327.5,719.0 L327.5,721.0 L327.5,723.0 L327.5,725.0 L327.6,727.0 L327.6,729.0 L327.6,731.0 L327.6,733.0 L327.6,735.0 L327.6,737.0 L327.7,739.0 L327.7,741.0 L327.7,743.0 L327.7,745.0 L327.7,747.0 L327.8,749.0 L327.8,751.0 L327.8,753.0 L327.8,755.0 L327.8,757.0 L327.8,759.0 L327.9,761.0 L327.9,763.0 L327.9,765.0 L327.9,767.0 L327.9,769.0 L327.9,771.0 L328.0,773.0 L328.0,775.0 L328.0,777.0 L328.0,778.0 L324.0,778.0 L324.0,777.0 L324.0,775.0 L324.0,773.0 L323.9,771.0 L323.9,769.0 L323.9,767.0 L323.9,765.0 L323.9,763.0 L323.9,761.0 L323.8,759.0 L323.8,757.0 L323.8,755.0 L323.8,753.0 L323.8,751.0 L323.8,749.0 L323.7,747.0 L323.7,745.0 L323.7,743.0 L323.7,741.0 L323.7,739.0 L323.6,737.0 L323.6,735.0 L323.6,733.0 L323.6,731.0 L323.6,729.0 L323.6,727.0 L323.5,725.0 L323.5,723.0 L323.5,721.0 L323.5,719.0 L323.5,717.0 L323.5,715.0 L323.4,713.0 L323.4,711.0 L323.4,709.0 L323.4,707.0 L323.4,705.0 L323.4,703.0 L323.3,701.0 L323.3,699.0 L323.3,697.0 L323.3,695.0 L323.3,693.0 L323.3,691.0 L323.2,689.0 L323.2,687.0 L323.2,685.0 L323.2,683.0 L323.2,681.0 L323.2,679.0 L323.1,677.0 L323.1,675.0 L323.1,673.0 L323.1,671.0 L323.1,669.0 L323.1,667.0 L323.0,665.0 L323.0,663.0 L323.0,661.0 L323.0,661.0 L323.0,659.0 L323.0,657.0 L322.9,655.0 L322.9,653.0 L322.9,651.0 L322.9,649.0 L322.8,647.0 L322.8,645.0 L322.8,643.0 L322.8,641.0 L322.7,639.0 L322.7,637.0 L322.7,635.0 L322.7,633.0 L322.6,631.0 L322.6,629.0 L322.6,627.0 L322.6,625.0 L322.5,623.0 L322.5,621.0 L322.5,619.0 L322.5,617.0 L322.4,615.0 L322.4,613.0 L322.4,611.0 L322.4,609.0 L322.3,607.0 L322.3,605.0 L322.3,603.0 L322.3,601.0 L322.2,599.0 L322.2,597.0 L322.2,595.0 L322.2,593.0 L322.1,591.0 L322.1,589.0 L322.1,587.0 L322.1,585.0 L322.0,583.0 L322.0,581.0 L322.0,581.0 L322.0,579.0 L322.0,577.0 L322.0,575.0 L321.9,573.0 L321.9,571.0 L321.9,569.0 L321.9,567.0 L321.9,565.0 L321.9,563.0 L321.9,561.0 L321.9,559.0 L321.8,557.0 L321.8,555.0 L321.8,553.0 L321.8,551.0 L321.8,549.0 L321.8,547.0 L321.8,545.0 L321.7,543.0 L321.7,541.0 L321.7,539.0 L321.7,537.0 L321.7,535.0 L321.7,533.0 L321.7,531.0 L321.6,529.0 L321.6,527.0 L321.6,525.0 L321.6,523.0 L321.6,521.0 L321.7,519.0 L321.9,517.0 L322.0,515.0 L322.2,513.0 L322.5,511.0 L322.8,509.0 L323.5,507.0Z" fill="rgb(237,237,237)"/>
<path d="M210.8,502.4 L211.3,504.4 L211.5,506.4 L211.7,508.4 L211.9,510.4 L212.0,512.4 L212.2,514.4 L212.3,516.4 L212.3,518.4 L212.4,520.4 L212.4,522.4 L212.4,524.4 L212.5,526.4 L212.5,528.4 L212.5,530.4 L212.6,532.4 L212.6,534.4 L212.6,536.4 L212.7,538.4 L212.7,540.4 L212.7,542.4 L212.8,544.4 L212.8,546.4 L212.9,548.4 L212.9,550.4 L212.9,552.4 L213.0,554.4 L213.0,556.4 L213.0,558.4 L213.1,560.4 L213.1,562.4 L213.1,564.4 L213.2,566.4 L213.2,568.4 L213.2,570.4 L213.2,571.0 L213.3,572.4 L213.3,574.4 L213.3,576.4 L213.3,578.4 L213.3,580.4 L213.3,582.4 L213.3,584.4 L213.3,586.4 L213.3,588.4 L213.3,590.4 L213.3,592.4 L213.4,594.4 L213.4,596.4 L213.4,598.4 L213.4,600.4 L213.4,602.4 L213.4,604.4 L213.4,606.4 L213.4,608.4 L213.4,610.4 L213.4,612.4 L213.4,614.4 L213.5,616.4 L213.5,618.4 L213.5,620.4 L213.5,622.4 L213.5,624.4 L213.5,626.4 L213.5,628.4 L213.5,630.4 L213.5,632.4 L213.5,634.4 L213.5,636.4 L213.5,638.4 L213.6,640.4 L213.6,642.4 L213.6,644.4 L213.6,646.4 L213.6,648.4 L213.6,650.4 L213.6,652.4 L213.6,654.4 L213.6,656.4 L213.6,658.4 L213.6,660.4 L213.6,661.0 L213.7,662.4 L213.7,664.4 L213.7,666.4 L213.7,668.4 L213.7,670.4 L213.7,672.4 L213.8,674.4 L213.8,676.4 L213.8,678.4 L213.8,680.4 L213.8,682.4 L213.8,684.4 L213.9,686.4 L213.9,688.4 L213.9,690.4 L213.9,692.4 L213.9,694.4 L214.0,696.4 L214.0,698.4 L214.0,700.4 L214.0,702.4 L214.0,704.4 L214.0,706.4 L214.1,708.4 L214.1,710.4 L214.1,712.4 L214.1,714.4 L214.1,716.4 L214.1,718.4 L214.2,720.4 L214.2,722.4 L214.2,724.4 L214.2,726.4 L214.2,728.4 L214.2,730.4 L214.3,732.4 L214.3,734.4 L214.3,736.4 L214.3,738.4 L214.3,740.4 L214.3,742.4 L214.4,744.4 L214.4,746.4 L214.4,748.4 L214.4,750.4 L214.4,752.4 L214.4,754.4 L214.5,756.4 L214.5,758.4 L214.5,760.4 L214.5,762.4 L214.5,764.4 L214.6,766.4 L214.6,768.4 L214.6,770.4 L214.6,772.4 L214.6,774.4 L214.6,776.4 L214.6,778.0 L212.2,778.0 L212.1,776.4 L212.1,774.4 L212.1,772.4 L212.1,770.4 L212.1,768.4 L212.1,766.4 L212.0,764.4 L212.0,762.4 L212.0,760.4 L212.0,758.4 L212.0,756.4 L211.9,754.4 L211.9,752.4 L211.9,750.4 L211.9,748.4 L211.9,746.4 L211.9,744.4 L211.8,742.4 L211.8,740.4 L211.8,738.4 L211.8,736.4 L211.8,734.4 L211.8,732.4 L211.7,730.4 L211.7,728.4 L211.7,726.4 L211.7,724.4 L211.7,722.4 L211.7,720.4 L211.6,718.4 L211.6,716.4 L211.6,714.4 L211.6,712.4 L211.6,710.4 L211.6,708.4 L211.5,706.4 L211.5,704.4 L211.5,702.4 L211.5,700.4 L211.5,698.4 L211.5,696.4 L211.4,694.4 L211.4,692.4 L211.4,690.4 L211.4,688.4 L211.4,686.4 L211.3,684.4 L211.3,682.4 L211.3,680.4 L211.3,678.4 L211.3,676.4 L211.3,674.4 L211.2,672.4 L211.2,670.4 L211.2,668.4 L211.2,666.4 L211.2,664.4 L211.2,662.4 L211.2,661.0 L211.1,660.4 L211.1,658.4 L211.1,656.4 L211.1,654.4 L211.1,652.4 L211.1,650.4 L211.1,648.4 L211.1,646.4 L211.1,644.4 L211.1,642.4 L211.1,640.4 L211.0,638.4 L211.0,636.4 L211.0,634.4 L211.0,632.4 L211.0,630.4 L211.0,628.4 L211.0,626.4 L211.0,624.4 L211.0,622.4 L211.0,620.4 L211.0,618.4 L211.0,616.4 L210.9,614.4 L210.9,612.4 L210.9,610.4 L210.9,608.4 L210.9,606.4 L210.9,604.4 L210.9,602.4 L210.9,600.4 L210.9,598.4 L210.9,596.4 L210.9,594.4 L210.8,592.4 L210.8,590.4 L210.8,588.4 L210.8,586.4 L210.8,584.4 L210.8,582.4 L210.8,580.4 L210.8,578.4 L210.8,576.4 L210.8,574.4 L210.8,572.4 L210.8,571.0 L210.7,570.4 L210.7,568.4 L210.7,566.4 L210.6,564.4 L210.6,562.4 L210.6,560.4 L210.5,558.4 L210.5,556.4 L210.5,554.4 L210.4,552.4 L210.4,550.4 L210.4,548.4 L210.3,546.4 L210.3,544.4 L210.2,542.4 L210.2,540.4 L210.2,538.4 L210.1,536.4 L210.1,534.4 L210.1,532.4 L210.0,530.4 L210.0,528.4 L210.0,526.4 L209.9,524.4 L209.9,522.4 L209.9,520.4 L209.8,518.4 L209.8,516.4 L209.9,514.4 L209.9,512.4 L210.0,510.4 L210.1,508.4 L210.2,506.4 L210.4,504.4 L210.8,502.4Z" fill="rgb(248,248,248)"/>
<path d="M373.0,503.8 L373.5,505.8 L373.8,507.8 L374.0,509.8 L374.1,511.8 L374.3,513.8 L374.4,515.8 L374.6,517.8 L374.6,519.8 L374.7,521.8 L374.7,523.8 L374.7,525.8 L374.8,527.8 L374.8,529.8 L374.9,531.8 L374.9,533.8 L375.0,535.8 L375.0,537.8 L375.1,539.8 L375.1,541.8 L375.1,543.8 L375.2,545.8 L375.2,547.8 L375.3,549.8 L375.3,551.8 L375.4,553.8 L375.4,555.8 L375.5,557.8 L375.5,559.8 L375.5,561.8 L375.6,563.8 L375.6,565.8 L375.7,567.8 L375.7,569.8 L375.7,571.0 L375.8,571.8 L375.8,573.8 L375.8,575.8 L375.8,577.8 L375.8,579.8 L375.9,581.8 L375.9,583.8 L375.9,585.8 L375.9,587.8 L376.0,589.8 L376.0,591.8 L376.0,593.8 L376.0,595.8 L376.0,597.8 L376.1,599.8 L376.1,601.8 L376.1,603.8 L376.1,605.8 L376.2,607.8 L376.2,609.8 L376.2,611.8 L376.2,613.8 L376.2,615.8 L376.3,617.8 L376.3,619.8 L376.3,621.8 L376.3,623.8 L376.4,625.8 L376.4,627.8 L376.4,629.8 L376.4,631.8 L376.4,633.8 L376.5,635.8 L376.5,637.8 L376.5,639.8 L376.5,641.8 L376.6,643.8 L376.6,645.8 L376.6,647.8 L376.6,649.8 L376.6,651.8 L376.7,653.8 L376.7,655.8 L376.7,657.8 L376.7,659.8 L376.7,661.0 L376.8,661.8 L376.8,663.8 L376.8,665.8 L376.8,667.8 L376.8,669.8 L376.9,671.8 L376.9,673.8 L376.9,675.8 L376.9,677.8 L376.9,679.8 L376.9,681.8 L377.0,683.8 L377.0,685.8 L377.0,687.8 L377.0,689.8 L377.0,691.8 L377.1,693.8 L377.1,695.8 L377.1,697.8 L377.1,699.8 L377.1,701.8 L377.2,703.8 L377.2,705.8 L377.2,707.8 L377.2,709.8 L377.2,711.8 L377.2,713.8 L377.3,715.8 L377.3,717.8 L377.3,719.8 L377.3,721.8 L377.3,723.8 L377.4,725.8 L377.4,727.8 L377.4,729.8 L377.4,731.8 L377.4,733.8 L377.5,735.8 L377.5,737.8 L377.5,739.8 L377.5,741.8 L377.5,743.8 L377.5,745.8 L377.6,747.8 L377.6,749.8 L377.6,751.8 L377.6,753.8 L377.6,755.8 L377.7,757.8 L377.7,759.8 L377.7,761.8 L377.7,763.8 L377.7,765.8 L377.8,767.8 L377.8,769.8 L377.8,771.8 L377.8,773.8 L377.8,775.8 L377.8,777.8 L377.8,778.0 L375.4,778.0 L375.3,777.8 L375.3,775.8 L375.3,773.8 L375.3,771.8 L375.3,769.8 L375.3,767.8 L375.2,765.8 L375.2,763.8 L375.2,761.8 L375.2,759.8 L375.2,757.8 L375.1,755.8 L375.1,753.8 L375.1,751.8 L375.1,749.8 L375.1,747.8 L375.0,745.8 L375.0,743.8 L375.0,741.8 L375.0,739.8 L375.0,737.8 L375.0,735.8 L374.9,733.8 L374.9,731.8 L374.9,729.8 L374.9,727.8 L374.9,725.8 L374.8,723.8 L374.8,721.8 L374.8,719.8 L374.8,717.8 L374.8,715.8 L374.7,713.8 L374.7,711.8 L374.7,709.8 L374.7,707.8 L374.7,705.8 L374.7,703.8 L374.6,701.8 L374.6,699.8 L374.6,697.8 L374.6,695.8 L374.6,693.8 L374.5,691.8 L374.5,689.8 L374.5,687.8 L374.5,685.8 L374.5,683.8 L374.4,681.8 L374.4,679.8 L374.4,677.8 L374.4,675.8 L374.4,673.8 L374.4,671.8 L374.3,669.8 L374.3,667.8 L374.3,665.8 L374.3,663.8 L374.3,661.8 L374.3,661.0 L374.2,659.8 L374.2,657.8 L374.2,655.8 L374.2,653.8 L374.1,651.8 L374.1,649.8 L374.1,647.8 L374.1,645.8 L374.1,643.8 L374.0,641.8 L374.0,639.8 L374.0,637.8 L374.0,635.8 L373.9,633.8 L373.9,631.8 L373.9,629.8 L373.9,627.8 L373.9,625.8 L373.8,623.8 L373.8,621.8 L373.8,619.8 L373.8,617.8 L373.7,615.8 L373.7,613.8 L373.7,611.8 L373.7,609.8 L373.7,607.8 L373.6,605.8 L373.6,603.8 L373.6,601.8 L373.6,599.8 L373.5,597.8 L373.5,595.8 L373.5,593.8 L373.5,591.8 L373.5,589.8 L373.4,587.8 L373.4,585.8 L373.4,583.8 L373.4,581.8 L373.3,579.8 L373.3,577.8 L373.3,575.8 L373.3,573.8 L373.3,571.8 L373.3,571.0 L373.2,569.8 L373.2,567.8 L373.1,565.8 L373.1,563.8 L373.0,561.8 L373.0,559.8 L373.0,557.8 L372.9,555.8 L372.9,553.8 L372.8,551.8 L372.8,549.8 L372.7,547.8 L372.7,545.8 L372.6,543.8 L372.6,541.8 L372.6,539.8 L372.5,537.8 L372.5,535.8 L372.4,533.8 L372.4,531.8 L372.3,529.8 L372.3,527.8 L372.2,525.8 L372.2,523.8 L372.2,521.8 L372.1,519.8 L372.1,517.8 L372.1,515.8 L372.2,513.8 L372.2,511.8 L372.3,509.8 L372.4,507.8 L372.6,505.8 L373.0,503.8Z" fill="rgb(240,240,240)"/>
<path d="M438.9,508.0 L439.3,510.0 L439.5,512.0 L439.6,514.0 L439.7,516.0 L439.8,518.0 L439.9,520.0 L440.0,522.0 L440.1,524.0 L440.1,526.0 L440.1,528.0 L440.1,530.0 L440.1,532.0 L440.1,534.0 L440.2,536.0 L440.2,538.0 L440.2,540.0 L440.2,542.0 L440.2,544.0 L440.3,546.0 L440.3,548.0 L440.3,550.0 L440.3,552.0 L440.3,554.0 L440.4,556.0 L440.4,558.0 L440.4,560.0 L440.4,562.0 L440.4,564.0 L440.5,566.0 L440.5,568.0 L440.5,570.0 L440.5,571.0 L440.5,572.0 L440.6,574.0 L440.6,576.0 L440.7,578.0 L440.7,580.0 L440.8,582.0 L440.8,584.0 L440.9,586.0 L440.9,588.0 L441.0,590.0 L441.0,592.0 L441.1,594.0 L441.1,596.0 L441.2,598.0 L441.2,600.0 L441.3,602.0 L441.3,604.0 L441.4,606.0 L441.4,608.0 L441.5,610.0 L441.5,612.0 L441.6,614.0 L441.6,616.0 L441.6,618.0 L441.7,620.0 L441.7,622.0 L441.8,624.0 L441.8,626.0 L441.9,628.0 L441.9,630.0 L442.0,632.0 L442.0,634.0 L442.1,636.0 L442.1,638.0 L442.2,640.0 L442.2,642.0 L442.3,644.0 L442.3,646.0 L442.4,647.9 L442.4,649.9 L442.5,651.9 L442.5,653.9 L442.6,655.9 L442.6,657.9 L442.7,659.9 L442.7,661.0 L442.7,662.0 L442.7,664.0 L442.7,666.0 L442.8,668.0 L442.8,670.0 L442.8,672.0 L442.8,674.0 L442.8,676.0 L442.9,678.0 L442.9,680.0 L442.9,682.0 L442.9,684.0 L442.9,686.0 L443.0,688.0 L443.0,690.0 L443.0,692.0 L443.0,694.0 L443.0,696.0 L443.0,698.0 L443.1,700.0 L443.1,702.0 L443.1,704.0 L443.1,706.0 L443.1,708.0 L443.2,710.0 L443.2,712.0 L443.2,714.0 L443.2,716.0 L443.2,718.0 L443.3,720.0 L443.3,722.0 L443.3,724.0 L443.3,726.0 L443.3,728.0 L443.3,730.0 L443.4,732.0 L443.4,734.0 L443.4,736.0 L443.4,738.0 L443.4,740.0 L443.5,742.0 L443.5,744.0 L443.5,746.0 L443.5,748.0 L443.5,750.0 L443.6,752.0 L443.6,754.0 L443.6,756.0 L443.6,758.0 L443.6,760.0 L443.6,762.0 L443.7,764.0 L443.7,766.0 L443.7,768.0 L443.7,770.0 L443.7,772.0 L443.8,774.0 L443.8,776.0 L443.8,778.0 L443.8,778.0 L441.8,778.0 L441.8,778.0 L441.8,776.0 L441.8,774.0 L441.7,772.0 L441.7,770.0 L441.7,768.0 L441.7,766.0 L441.7,764.0 L441.6,762.0 L441.6,760.0 L441.6,758.0 L441.6,756.0 L441.6,754.0 L441.6,752.0 L441.5,750.0 L441.5,748.0 L441.5,746.0 L441.5,744.0 L441.5,742.0 L441.4,740.0 L441.4,738.0 L441.4,736.0 L441.4,734.0 L441.4,732.0 L441.3,730.0 L441.3,728.0 L441.3,726.0 L441.3,724.0 L441.3,722.0 L441.3,720.0 L441.2,718.0 L441.2,716.0 L441.2,714.0 L441.2,712.0 L441.2,710.0 L441.1,708.0 L441.1,706.0 L441.1,704.0 L441.1,702.0 L441.1,700.0 L441.0,698.0 L441.0,696.0 L441.0,694.0 L441.0,692.0 L441.0,690.0 L441.0,688.0 L440.9,686.0 L440.9,684.0 L440.9,682.0 L440.9,680.0 L440.9,678.0 L440.8,676.0 L440.8,674.0 L440.8,672.0 L440.8,670.0 L440.8,668.0 L440.7,666.0 L440.7,664.0 L440.7,662.0 L440.7,661.0 L440.7,660.0 L440.6,658.0 L440.6,656.0 L440.5,654.0 L440.5,652.0 L440.4,650.0 L440.4,648.0 L440.3,646.0 L440.3,644.0 L440.2,642.0 L440.2,640.0 L440.1,638.0 L440.1,636.0 L440.0,634.0 L440.0,632.0 L439.9,630.0 L439.9,628.0 L439.8,626.0 L439.8,624.0 L439.7,622.0 L439.7,620.0 L439.6,618.0 L439.6,616.0 L439.6,614.0 L439.5,612.0 L439.5,610.0 L439.4,608.0 L439.4,606.0 L439.3,604.0 L439.3,602.0 L439.2,600.0 L439.2,598.0 L439.1,596.0 L439.1,594.0 L439.0,592.0 L439.0,590.0 L438.9,588.0 L438.9,586.0 L438.8,584.0 L438.8,582.0 L438.7,580.0 L438.7,578.0 L438.6,576.0 L438.6,574.0 L438.5,572.0 L438.5,571.0 L438.5,570.0 L438.5,568.0 L438.5,566.0 L438.4,564.0 L438.4,562.0 L438.4,560.0 L438.4,558.0 L438.4,556.0 L438.3,554.0 L438.3,552.0 L438.3,550.0 L438.3,548.0 L438.3,546.0 L438.2,544.0 L438.2,542.0 L438.2,540.0 L438.2,538.0 L438.2,536.0 L438.1,534.0 L438.1,532.0 L438.1,530.0 L438.1,528.0 L438.1,526.0 L438.1,524.0 L438.0,522.0 L438.1,520.0 L438.2,518.0 L438.2,516.0 L438.3,514.0 L438.4,512.0 L438.5,510.0 L438.9,508.0Z" fill="rgb(196,196,196)"/>
<path d="M491.5,512.5 L491.9,514.5 L492.0,516.5 L492.1,518.5 L492.2,520.5 L492.2,522.5 L492.3,524.5 L492.4,526.5 L492.3,528.5 L492.3,530.5 L492.3,532.5 L492.3,534.5 L492.3,536.5 L492.2,538.5 L492.2,540.5 L492.2,542.5 L492.2,544.5 L492.2,546.5 L492.1,548.5 L492.1,550.5 L492.1,552.5 L492.1,554.5 L492.0,556.5 L492.0,558.5 L492.0,560.5 L492.0,562.5 L492.0,564.5 L491.9,566.5 L491.9,568.5 L491.9,570.5 L491.9,571.0 L491.9,572.5 L491.9,574.5 L491.9,576.5 L491.9,578.5 L491.9,580.5 L491.9,582.5 L491.9,584.5 L491.9,586.5 L491.9,588.5 L491.9,590.5 L491.9,592.5 L491.9,594.5 L491.9,596.5 L491.9,598.5 L491.9,600.5 L491.9,602.5 L491.9,604.5 L491.9,606.5 L491.9,608.5 L491.9,610.5 L491.9,612.5 L491.9,614.5 L491.9,616.5 L491.9,618.5 L491.9,620.5 L491.9,622.5 L491.9,624.5 L491.9,626.5 L491.9,628.5 L491.9,630.5 L491.9,632.5 L491.9,634.5 L491.9,636.5 L491.9,638.5 L491.9,640.5 L491.9,642.5 L491.9,644.5 L491.9,646.5 L491.9,648.5 L491.9,650.5 L491.9,652.5 L491.9,654.5 L491.9,656.5 L491.9,658.5 L491.9,660.5 L491.9,661.0 L491.9,662.5 L491.9,664.5 L492.0,666.5 L492.0,668.5 L492.0,670.5 L492.0,672.5 L492.1,674.5 L492.1,676.5 L492.1,678.5 L492.1,680.5 L492.2,682.5 L492.2,684.5 L492.2,686.5 L492.3,688.5 L492.3,690.5 L492.3,692.5 L492.3,694.5 L492.4,696.5 L492.4,698.5 L492.4,700.5 L492.4,702.5 L492.5,704.5 L492.5,706.5 L492.5,708.5 L492.5,710.5 L492.6,712.5 L492.6,714.5 L492.6,716.5 L492.6,718.5 L492.7,720.5 L492.7,722.5 L492.7,724.5 L492.7,726.5 L492.8,728.5 L492.8,730.5 L492.8,732.5 L492.8,734.5 L492.9,736.5 L492.9,738.5 L492.9,740.5 L492.9,742.5 L493.0,744.5 L493.0,746.5 L493.0,748.5 L493.0,750.5 L493.1,752.5 L493.1,754.5 L493.1,756.5 L493.1,758.5 L493.2,760.5 L493.2,762.5 L493.2,764.5 L493.3,766.5 L493.3,768.5 L493.3,770.5 L493.3,772.5 L493.4,774.5 L493.4,776.5 L493.4,778.0 L491.4,778.0 L491.4,776.5 L491.4,774.5 L491.3,772.5 L491.3,770.5 L491.3,768.5 L491.3,766.5 L491.2,764.5 L491.2,762.5 L491.2,760.5 L491.1,758.5 L491.1,756.5 L491.1,754.5 L491.1,752.5 L491.0,750.5 L491.0,748.5 L491.0,746.5 L491.0,744.5 L490.9,742.5 L490.9,740.5 L490.9,738.5 L490.9,736.5 L490.8,734.5 L490.8,732.5 L490.8,730.5 L490.8,728.5 L490.7,726.5 L490.7,724.5 L490.7,722.5 L490.7,720.5 L490.6,718.5 L490.6,716.5 L490.6,714.5 L490.6,712.5 L490.5,710.5 L490.5,708.5 L490.5,706.5 L490.5,704.5 L490.4,702.5 L490.4,700.5 L490.4,698.5 L490.4,696.5 L490.3,694.5 L490.3,692.5 L490.3,690.5 L490.3,688.5 L490.2,686.5 L490.2,684.5 L490.2,682.5 L490.2,680.5 L490.1,678.5 L490.1,676.5 L490.1,674.5 L490.0,672.5 L490.0,670.5 L490.0,668.5 L490.0,666.5 L489.9,664.5 L489.9,662.5 L489.9,661.0 L489.9,660.5 L489.9,658.5 L489.9,656.5 L489.9,654.5 L489.9,652.5 L489.9,650.5 L489.9,648.5 L489.9,646.5 L489.9,644.5 L489.9,642.5 L489.9,640.5 L489.9,638.5 L489.9,636.5 L489.9,634.5 L489.9,632.5 L489.9,630.5 L489.9,628.5 L489.9,626.5 L489.9,624.5 L489.9,622.5 L489.9,620.5 L489.9,618.5 L489.9,616.5 L489.9,614.5 L489.9,612.5 L489.9,610.5 L489.9,608.5 L489.9,606.5 L489.9,604.5 L489.9,602.5 L489.9,600.5 L489.9,598.5 L489.9,596.5 L489.9,594.5 L489.9,592.5 L489.9,590.5 L489.9,588.5 L489.9,586.5 L489.9,584.5 L489.9,582.5 L489.9,580.5 L489.9,578.5 L489.9,576.5 L489.9,574.5 L489.9,572.5 L489.9,571.0 L489.9,570.5 L489.9,568.5 L489.9,566.5 L490.0,564.5 L490.0,562.5 L490.0,560.5 L490.0,558.5 L490.0,556.5 L490.1,554.5 L490.1,552.5 L490.1,550.5 L490.1,548.5 L490.2,546.5 L490.2,544.5 L490.2,542.5 L490.2,540.5 L490.2,538.5 L490.3,536.5 L490.3,534.5 L490.3,532.5 L490.3,530.5 L490.3,528.5 L490.4,526.5 L490.5,524.5 L490.6,522.5 L490.7,520.5 L490.8,518.5 L490.9,516.5 L491.1,514.5 L491.5,512.5Z" fill="rgb(196,196,196)"/>
<path d="M601.8,513.6 L602.1,515.6 L602.2,517.6 L602.3,519.6 L602.4,521.6 L602.5,523.6 L602.6,525.6 L602.6,527.6 L602.7,529.6 L602.7,531.6 L602.7,533.6 L602.7,535.6 L602.7,537.6 L602.7,539.6 L602.7,541.6 L602.8,543.6 L602.8,545.6 L602.8,547.6 L602.8,549.6 L602.8,551.6 L602.8,553.6 L602.8,555.6 L602.9,557.6 L602.9,559.6 L602.9,561.6 L602.9,563.6 L602.9,565.6 L602.9,567.6 L602.9,569.6 L602.9,571.0 L603.0,571.6 L603.0,573.6 L603.0,575.6 L603.0,577.6 L603.1,579.6 L603.1,581.6 L603.1,583.6 L603.1,585.6 L603.2,587.6 L603.2,589.6 L603.2,591.6 L603.2,593.6 L603.3,595.6 L603.3,597.6 L603.3,599.6 L603.3,601.6 L603.3,603.6 L603.4,605.6 L603.4,607.6 L603.4,609.6 L603.4,611.6 L603.5,613.6 L603.5,615.6 L603.5,617.6 L603.5,619.6 L603.6,621.6 L603.6,623.6 L603.6,625.6 L603.6,627.6 L603.7,629.6 L603.7,631.6 L603.7,633.6 L603.7,635.6 L603.8,637.6 L603.8,639.6 L603.8,641.6 L603.8,643.6 L603.9,645.6 L603.9,647.6 L603.9,649.6 L603.9,651.6 L604.0,653.6 L604.0,655.6 L604.0,657.6 L604.0,659.6 L604.0,661.0 L604.1,661.6 L604.1,663.6 L604.1,665.6 L604.1,667.6 L604.2,669.6 L604.2,671.6 L604.2,673.6 L604.3,675.6 L604.3,677.6 L604.3,679.6 L604.3,681.6 L604.4,683.6 L604.4,685.6 L604.4,687.6 L604.5,689.6 L604.5,691.6 L604.5,693.6 L604.6,695.6 L604.6,697.6 L604.6,699.6 L604.6,701.6 L604.7,703.6 L604.7,705.6 L604.7,707.6 L604.8,709.6 L604.8,711.6 L604.8,713.6 L604.8,715.6 L604.9,717.6 L604.9,719.6 L604.9,721.6 L605.0,723.6 L605.0,725.6 L605.0,727.6 L605.0,729.6 L605.1,731.6 L605.1,733.6 L605.1,735.6 L605.2,737.6 L605.2,739.6 L605.2,741.6 L605.2,743.6 L605.3,745.6 L605.3,747.6 L605.3,749.6 L605.4,751.6 L605.4,753.6 L605.4,755.6 L605.5,757.6 L605.5,759.6 L605.5,761.6 L605.5,763.6 L605.6,765.6 L605.6,767.6 L605.6,769.6 L605.7,771.6 L605.7,773.6 L605.7,775.6 L605.7,777.6 L605.7,778.0 L604.3,778.0 L604.2,777.6 L604.2,775.6 L604.2,773.6 L604.2,771.6 L604.1,769.6 L604.1,767.6 L604.1,765.6 L604.0,763.6 L604.0,761.6 L604.0,759.6 L604.0,757.6 L603.9,755.6 L603.9,753.6 L603.9,751.6 L603.8,749.6 L603.8,747.6 L603.8,745.6 L603.8,743.6 L603.7,741.6 L603.7,739.6 L603.7,737.6 L603.6,735.6 L603.6,733.6 L603.6,731.6 L603.5,729.6 L603.5,727.6 L603.5,725.6 L603.5,723.6 L603.4,721.6 L603.4,719.6 L603.4,717.6 L603.3,715.6 L603.3,713.6 L603.3,711.6 L603.3,709.6 L603.2,707.6 L603.2,705.6 L603.2,703.6 L603.1,701.6 L603.1,699.6 L603.1,697.6 L603.1,695.6 L603.0,693.6 L603.0,691.6 L603.0,689.6 L602.9,687.6 L602.9,685.6 L602.9,683.6 L602.8,681.6 L602.8,679.6 L602.8,677.6 L602.8,675.6 L602.7,673.6 L602.7,671.6 L602.7,669.6 L602.6,667.6 L602.6,665.6 L602.6,663.6 L602.6,661.6 L602.6,661.0 L602.5,659.6 L602.5,657.6 L602.5,655.6 L602.5,653.6 L602.4,651.6 L602.4,649.6 L602.4,647.6 L602.4,645.6 L602.3,643.6 L602.3,641.6 L602.3,639.6 L602.3,637.6 L602.2,635.6 L602.2,633.6 L602.2,631.6 L602.2,629.6 L602.1,627.6 L602.1,625.6 L602.1,623.6 L602.1,621.6 L602.0,619.6 L602.0,617.6 L602.0,615.6 L602.0,613.6 L601.9,611.6 L601.9,609.6 L601.9,607.6 L601.9,605.6 L601.8,603.6 L601.8,601.6 L601.8,599.6 L601.8,597.6 L601.8,595.6 L601.7,593.6 L601.7,591.6 L601.7,589.6 L601.7,587.6 L601.6,585.6 L601.6,583.6 L601.6,581.6 L601.6,579.6 L601.5,577.6 L601.5,575.6 L601.5,573.6 L601.5,571.6 L601.5,571.0 L601.4,569.6 L601.4,567.6 L601.4,565.6 L601.4,563.6 L601.4,561.6 L601.4,559.6 L601.4,557.6 L601.3,555.6 L601.3,553.6 L601.3,551.6 L601.3,549.6 L601.3,547.6 L601.3,545.6 L601.3,543.6 L601.2,541.6 L601.2,539.6 L601.2,537.6 L601.2,535.6 L601.2,533.6 L601.2,531.6 L601.2,529.6 L601.1,527.6 L601.2,525.6 L601.2,523.6 L601.3,521.6 L601.4,519.6 L601.4,517.6 L601.5,515.6 L601.8,513.6Z" fill="rgb(193,193,193)"/>
<path d="M609.9,517.0 L610.2,519.0 L610.3,521.0 L610.4,523.0 L610.5,525.0 L610.6,527.0 L610.7,529.0 L610.8,531.0 L610.8,533.0 L610.8,535.0 L610.8,537.0 L610.8,539.0 L610.8,541.0 L610.8,543.0 L610.9,545.0 L610.9,547.0 L610.9,549.0 L610.9,551.0 L610.9,553.0 L610.9,555.0 L610.9,557.0 L611.0,559.0 L611.0,561.0 L611.0,563.0 L611.0,565.0 L611.0,567.0 L611.0,569.0 L611.0,571.0 L611.0,571.0 L611.1,573.0 L611.1,575.0 L611.2,577.0 L611.2,579.0 L611.2,581.0 L611.3,583.0 L611.3,585.0 L611.4,587.0 L611.4,589.0 L611.4,591.0 L611.5,593.0 L611.5,595.0 L611.5,597.0 L611.6,599.0 L611.6,601.0 L611.7,603.0 L611.7,605.0 L611.7,607.0 L611.8,609.0 L611.8,611.0 L611.8,613.0 L611.9,615.0 L611.9,617.0 L612.0,619.0 L612.0,621.0 L612.0,623.0 L612.1,625.0 L612.1,627.0 L612.1,629.0 L612.2,631.0 L612.2,633.0 L612.3,635.0 L612.3,637.0 L612.3,639.0 L612.4,641.0 L612.4,643.0 L612.4,645.0 L612.5,647.0 L612.5,649.0 L612.6,651.0 L612.6,653.0 L612.6,655.0 L612.7,657.0 L612.7,659.0 L612.7,661.0 L612.7,661.0 L612.8,663.0 L612.8,665.0 L612.9,667.0 L612.9,669.0 L612.9,671.0 L613.0,673.0 L613.0,675.0 L613.1,677.0 L613.1,679.0 L613.1,681.0 L613.2,683.0 L613.2,685.0 L613.3,687.0 L613.3,689.0 L613.3,691.0 L613.4,693.0 L613.4,695.0 L613.5,697.0 L613.5,699.0 L613.5,701.0 L613.6,703.0 L613.6,705.0 L613.7,707.0 L613.7,709.0 L613.7,711.0 L613.8,713.0 L613.8,715.0 L613.9,717.0 L613.9,719.0 L613.9,721.0 L614.0,723.0 L614.0,725.0 L614.0,727.0 L614.1,729.0 L614.1,731.0 L614.2,733.0 L614.2,735.0 L614.2,737.0 L614.3,739.0 L614.3,741.0 L614.4,743.0 L614.4,745.0 L614.4,747.0 L614.5,749.0 L614.5,751.0 L614.6,752.9 L614.6,754.9 L614.6,756.9 L614.7,758.9 L614.7,760.9 L614.8,762.9 L614.8,764.9 L614.8,766.9 L614.9,768.9 L614.9,770.9 L615.0,772.9 L615.0,774.9 L615.0,776.9 L615.0,778.0 L613.6,778.0 L613.5,777.0 L613.5,775.0 L613.5,773.0 L613.4,771.0 L613.4,769.0 L613.3,767.0 L613.3,765.0 L613.3,763.0 L613.2,761.0 L613.2,759.0 L613.1,757.0 L613.1,755.0 L613.1,753.0 L613.0,751.0 L613.0,749.0 L612.9,747.0 L612.9,745.0 L612.9,743.0 L612.8,741.0 L612.8,739.0 L612.7,737.0 L612.7,735.0 L612.7,733.0 L612.6,731.0 L612.6,729.0 L612.5,727.0 L612.5,725.0 L612.5,723.0 L612.4,721.0 L612.4,719.0 L612.4,717.0 L612.3,715.0 L612.3,713.0 L612.2,711.0 L612.2,709.0 L612.2,707.0 L612.1,705.0 L612.1,703.0 L612.0,701.0 L612.0,699.0 L612.0,697.0 L611.9,695.0 L611.9,693.0 L611.8,691.0 L611.8,689.0 L611.8,687.0 L611.7,685.0 L611.7,683.0 L611.6,681.0 L611.6,679.0 L611.6,677.0 L611.5,675.0 L611.5,673.0 L611.4,671.0 L611.4,669.0 L611.4,667.0 L611.3,665.0 L611.3,663.0 L611.3,661.0 L611.2,661.0 L611.2,659.0 L611.2,657.0 L611.1,655.0 L611.1,653.0 L611.1,651.0 L611.0,649.0 L611.0,647.0 L610.9,645.0 L610.9,643.0 L610.9,641.0 L610.8,639.0 L610.8,637.0 L610.8,635.0 L610.7,633.0 L610.7,631.0 L610.6,629.0 L610.6,627.0 L610.6,625.0 L610.5,623.0 L610.5,621.0 L610.5,619.0 L610.4,617.0 L610.4,615.0 L610.3,613.0 L610.3,611.0 L610.3,609.0 L610.2,607.0 L610.2,605.0 L610.2,603.0 L610.1,601.0 L610.1,599.0 L610.0,597.0 L610.0,595.0 L610.0,593.0 L609.9,591.0 L609.9,589.0 L609.9,587.0 L609.8,585.0 L609.8,583.0 L609.7,581.0 L609.7,579.0 L609.7,577.0 L609.6,575.0 L609.6,573.0 L609.6,571.0 L609.6,571.0 L609.5,569.0 L609.5,567.0 L609.5,565.0 L609.5,563.0 L609.5,561.0 L609.5,559.0 L609.4,557.0 L609.4,555.0 L609.4,553.0 L609.4,551.0 L609.4,549.0 L609.4,547.0 L609.4,545.0 L609.3,543.0 L609.3,541.0 L609.3,539.0 L609.3,537.0 L609.3,535.0 L609.3,533.0 L609.3,531.0 L609.3,529.0 L609.3,527.0 L609.4,525.0 L609.5,523.0 L609.5,521.0 L609.6,519.0 L609.9,517.0Z" fill="rgb(160,160,160)"/>
<path d="M701.0,521.0 L701.3,523.0 L701.5,525.0 L701.6,527.0 L701.7,529.0 L701.8,531.0 L701.9,533.0 L702.0,535.0 L702.1,537.0 L702.1,539.0 L702.1,541.0 L702.2,543.0 L702.2,545.0 L702.3,547.0 L702.3,549.0 L702.3,551.0 L702.4,553.0 L702.4,555.0 L702.5,557.0 L702.5,559.0 L702.5,561.0 L702.6,563.0 L702.6,565.0 L702.6,567.0 L702.7,569.0 L702.7,571.0 L702.8,573.0 L702.8,575.0 L702.8,577.0 L702.9,579.0 L702.9,581.0 L703.0,583.0 L703.0,585.0 L703.0,587.0 L703.1,589.0 L703.1,591.0 L703.2,593.0 L703.2,595.0 L703.2,597.0 L703.3,599.0 L703.3,601.0 L703.3,603.0 L703.4,605.0 L703.4,607.0 L703.5,609.0 L703.5,611.0 L703.5,613.0 L703.6,615.0 L703.6,617.0 L703.7,619.0 L703.7,621.0 L703.7,623.0 L703.8,625.0 L703.8,627.0 L703.9,629.0 L703.9,631.0 L703.9,633.0 L704.0,635.0 L704.0,637.0 L704.0,639.0 L704.1,641.0 L704.1,643.0 L704.2,645.0 L704.2,647.0 L704.2,649.0 L704.3,651.0 L704.3,653.0 L704.4,655.0 L704.4,657.0 L704.4,659.0 L704.5,661.0 L704.5,663.0 L704.6,665.0 L704.6,667.0 L704.6,669.0 L704.7,671.0 L704.7,673.0 L704.7,675.0 L704.8,677.0 L704.8,679.0 L704.9,681.0 L704.9,683.0 L704.9,685.0 L705.0,687.0 L705.0,689.0 L705.1,691.0 L705.1,693.0 L705.1,695.0 L705.2,697.0 L705.2,699.0 L705.3,701.0 L705.3,703.0 L705.3,705.0 L705.4,707.0 L705.4,708.9 L705.4,710.9 L705.5,712.9 L705.5,714.9 L705.6,716.9 L705.6,718.9 L705.6,720.9 L705.7,722.9 L705.7,724.9 L705.8,726.9 L705.8,728.9 L705.8,730.9 L705.9,732.9 L705.9,734.9 L706.0,736.9 L706.0,738.9 L706.0,740.9 L706.1,742.9 L706.1,744.9 L706.1,746.9 L706.2,748.9 L706.2,750.9 L706.3,752.9 L706.3,754.9 L706.3,756.9 L706.4,758.9 L706.4,760.9 L706.5,762.9 L706.5,764.9 L706.5,766.9 L706.6,768.9 L706.6,770.9 L706.7,772.9 L706.7,774.9 L706.7,776.9 L706.7,778.0 L705.3,778.0 L705.2,777.0 L705.2,775.0 L705.2,773.0 L705.1,771.0 L705.1,769.0 L705.0,767.0 L705.0,765.0 L705.0,763.0 L704.9,761.0 L704.9,759.0 L704.8,757.0 L704.8,755.0 L704.8,753.0 L704.7,751.0 L704.7,749.0 L704.6,747.0 L704.6,745.0 L704.6,743.0 L704.5,741.0 L704.5,739.0 L704.5,737.0 L704.4,735.0 L704.4,733.0 L704.3,731.0 L704.3,729.0 L704.3,727.0 L704.2,725.0 L704.2,723.0 L704.1,721.0 L704.1,719.0 L704.1,717.0 L704.0,715.0 L704.0,713.0 L703.9,711.0 L703.9,709.0 L703.9,707.0 L703.8,705.0 L703.8,703.0 L703.8,701.0 L703.7,699.0 L703.7,697.0 L703.6,695.0 L703.6,693.0 L703.6,691.0 L703.5,689.0 L703.5,687.0 L703.4,685.0 L703.4,683.0 L703.4,681.0 L703.3,679.0 L703.3,677.0 L703.2,675.0 L703.2,673.0 L703.2,671.0 L703.1,669.0 L703.1,667.0 L703.1,665.0 L703.0,663.0 L703.0,661.0 L702.9,659.0 L702.9,657.0 L702.9,655.0 L702.8,653.0 L702.8,651.0 L702.7,649.0 L702.7,647.0 L702.7,645.0 L702.6,643.0 L702.6,641.0 L702.5,639.0 L702.5,637.0 L702.5,635.0 L702.4,633.0 L702.4,631.0 L702.4,629.0 L702.3,627.0 L702.3,625.0 L702.2,623.0 L702.2,621.0 L702.2,619.0 L702.1,617.0 L702.1,615.0 L702.0,613.0 L702.0,611.0 L702.0,609.0 L701.9,607.0 L701.9,605.0 L701.8,603.0 L701.8,601.0 L701.8,599.0 L701.7,597.0 L701.7,595.0 L701.7,593.0 L701.6,591.0 L701.6,589.0 L701.5,587.0 L701.5,585.0 L701.5,583.0 L701.4,581.0 L701.4,579.0 L701.3,577.0 L701.3,575.0 L701.3,573.0 L701.2,571.0 L701.2,569.0 L701.1,567.0 L701.1,565.0 L701.1,563.0 L701.0,561.0 L701.0,559.0 L701.0,557.0 L700.9,555.0 L700.9,553.0 L700.8,551.0 L700.8,549.0 L700.8,547.0 L700.7,545.0 L700.7,543.0 L700.6,541.0 L700.6,539.0 L700.6,537.0 L700.5,535.0 L700.5,533.0 L700.6,531.0 L700.6,529.0 L700.6,527.0 L700.7,525.0 L700.8,523.0 L701.0,521.0Z" fill="rgb(100,100,100)"/>
<linearGradient id="lg5" gradientUnits="userSpaceOnUse" x1="0" y1="521" x2="0" y2="778"><stop offset="0.000" stop-color="rgb(26,26,26)"/><stop offset="0.311" stop-color="rgb(39,39,39)"/><stop offset="0.700" stop-color="rgb(52,52,52)"/><stop offset="1.000" stop-color="rgb(70,70,70)"/></linearGradient>
<path d="M878.4,521.0 L879.4,523.0 L879.8,525.0 L880.1,527.0 L880.4,528.9 L880.7,530.9 L880.9,532.9 L881.2,534.9 L881.4,536.9 L881.6,538.9 L881.8,540.9 L882.0,542.9 L882.2,544.9 L882.4,546.9 L882.5,548.9 L882.7,550.9 L882.8,552.9 L882.8,554.9 L882.9,556.9 L882.9,558.9 L883.0,560.9 L883.0,562.9 L883.1,564.9 L883.1,566.9 L883.2,568.9 L883.2,570.9 L883.3,572.9 L883.3,574.9 L883.4,576.9 L883.4,578.9 L883.5,580.9 L883.5,580.9 L883.5,582.9 L883.6,584.9 L883.6,586.9 L883.7,588.9 L883.7,590.9 L883.8,592.9 L883.8,594.9 L883.9,596.9 L883.9,598.9 L884.0,600.9 L884.0,602.9 L884.1,604.9 L884.1,606.9 L884.2,608.9 L884.2,610.9 L884.3,612.9 L884.3,614.9 L884.4,616.9 L884.4,618.9 L884.5,620.9 L884.5,622.9 L884.6,624.9 L884.6,626.9 L884.7,628.9 L884.7,630.9 L884.8,632.9 L884.8,634.9 L884.9,636.9 L884.9,638.9 L885.0,640.9 L885.0,642.9 L885.1,644.9 L885.1,646.9 L885.2,648.9 L885.2,650.9 L885.3,652.9 L885.3,654.9 L885.4,656.9 L885.4,658.9 L885.5,660.9 L885.5,660.9 L885.5,662.9 L885.6,664.9 L885.7,666.9 L885.7,668.9 L885.8,670.9 L885.8,672.9 L885.9,674.9 L885.9,676.9 L886.0,678.9 L886.0,680.9 L886.1,682.9 L886.1,684.9 L886.2,686.9 L886.2,688.9 L886.3,690.9 L886.3,692.9 L886.4,694.9 L886.4,696.9 L886.5,698.9 L886.5,700.9 L886.6,702.9 L886.6,704.8 L886.7,706.8 L886.7,708.8 L886.8,710.8 L886.8,712.8 L886.9,714.8 L886.9,716.8 L887.0,718.8 L887.0,720.8 L887.1,722.8 L887.1,724.8 L887.2,726.8 L887.2,728.8 L887.3,730.8 L887.3,732.8 L887.4,734.8 L887.4,736.8 L887.5,738.8 L887.5,740.8 L887.6,742.8 L887.7,744.8 L887.7,746.8 L887.8,748.8 L887.8,750.8 L887.9,752.8 L887.9,754.8 L888.0,756.8 L888.0,758.8 L888.1,760.8 L888.1,762.8 L888.2,764.8 L888.2,766.8 L888.3,768.8 L888.3,770.8 L888.4,772.8 L888.4,774.8 L888.5,776.8 L888.5,777.9 L881.5,778.1 L881.5,777.0 L881.4,775.0 L881.4,773.0 L881.3,771.0 L881.3,769.0 L881.2,767.0 L881.2,765.0 L881.1,763.0 L881.1,761.0 L881.0,759.0 L881.0,757.0 L880.9,755.0 L880.9,753.0 L880.8,751.0 L880.8,749.0 L880.7,747.0 L880.7,745.0 L880.6,743.0 L880.6,741.0 L880.5,739.0 L880.4,737.0 L880.4,735.0 L880.3,733.0 L880.3,731.0 L880.2,729.0 L880.2,727.0 L880.1,725.0 L880.1,723.0 L880.0,721.0 L880.0,719.0 L879.9,717.0 L879.9,715.0 L879.8,713.0 L879.8,711.0 L879.7,709.0 L879.7,707.0 L879.6,705.0 L879.6,703.0 L879.5,701.0 L879.5,699.0 L879.4,697.0 L879.4,695.0 L879.3,693.0 L879.3,691.0 L879.2,689.0 L879.2,687.0 L879.1,685.0 L879.1,683.0 L879.0,681.0 L879.0,679.0 L878.9,677.0 L878.9,675.0 L878.8,673.0 L878.8,671.0 L878.7,669.0 L878.7,667.0 L878.6,665.0 L878.6,663.0 L878.5,661.1 L878.5,661.0 L878.4,659.0 L878.4,657.0 L878.3,655.0 L878.3,653.0 L878.3,651.0 L878.2,649.0 L878.2,647.0 L878.1,645.0 L878.1,643.0 L878.0,641.0 L878.0,639.0 L877.9,637.0 L877.9,635.0 L877.8,633.0 L877.8,631.1 L877.7,629.1 L877.7,627.1 L877.6,625.1 L877.6,623.1 L877.5,621.1 L877.5,619.1 L877.4,617.1 L877.4,615.1 L877.3,613.1 L877.3,611.1 L877.2,609.1 L877.2,607.1 L877.1,605.1 L877.1,603.1 L877.0,601.1 L877.0,599.1 L876.9,597.1 L876.9,595.1 L876.8,593.1 L876.8,591.1 L876.7,589.1 L876.7,587.1 L876.6,585.1 L876.6,583.1 L876.5,581.1 L876.5,581.1 L876.4,579.1 L876.4,577.1 L876.3,575.1 L876.3,573.1 L876.2,571.1 L876.2,569.1 L876.1,567.1 L876.1,565.1 L876.0,563.1 L876.0,561.1 L875.9,559.1 L875.9,557.1 L875.8,555.1 L875.8,553.1 L875.7,551.1 L875.8,549.1 L875.8,547.1 L875.9,545.1 L876.0,543.1 L876.1,541.1 L876.2,539.1 L876.3,537.1 L876.4,535.1 L876.5,533.1 L876.6,531.1 L876.8,529.0 L877.0,527.0 L877.2,525.0 L877.5,523.0 L878.4,521.0Z" fill="url(#lg5)"/>
<path d="M940.0,606.0 L940.4,608.0 L940.6,610.0 L940.7,612.0 L940.9,614.0 L941.0,616.0 L941.2,618.0 L941.3,620.0 L941.4,622.0 L941.5,624.0 L941.6,626.0 L941.6,628.0 L941.7,629.9 L941.8,631.9 L941.9,633.9 L942.0,635.9 L942.1,637.9 L942.1,639.9 L942.2,641.9 L942.3,643.9 L942.4,645.9 L942.5,647.9 L942.5,649.9 L942.6,651.9 L942.7,653.9 L942.8,655.9 L942.9,657.9 L942.9,659.9 L943.0,661.9 L943.1,663.9 L943.2,665.9 L943.3,667.9 L943.4,669.9 L943.4,671.9 L943.5,673.9 L943.6,675.9 L943.7,677.9 L943.8,679.9 L943.8,681.9 L943.9,683.9 L944.0,685.9 L944.1,687.9 L944.2,689.9 L944.2,691.9 L944.3,693.9 L944.4,695.9 L944.5,697.9 L944.6,699.9 L944.7,701.9 L944.7,703.9 L944.8,705.9 L944.9,707.9 L945.0,709.9 L945.1,711.9 L945.1,713.9 L945.2,715.9 L945.3,717.9 L945.4,719.9 L945.5,721.9 L945.5,723.9 L945.6,725.9 L945.7,727.9 L945.8,729.9 L945.9,731.9 L946.0,733.9 L946.0,735.9 L946.1,737.9 L946.2,739.9 L946.3,741.9 L946.4,743.9 L946.4,745.9 L946.5,747.9 L946.6,749.9 L946.7,751.8 L946.8,753.8 L946.8,755.8 L946.9,757.8 L947.0,759.8 L947.1,761.8 L947.2,763.8 L947.3,765.8 L947.3,767.8 L947.4,769.8 L947.5,771.8 L947.6,773.8 L947.7,775.8 L947.7,777.8 L947.7,778.0 L946.3,778.0 L946.2,777.9 L946.2,775.9 L946.1,773.9 L946.0,771.9 L945.9,769.9 L945.8,767.9 L945.8,765.9 L945.7,763.9 L945.6,761.9 L945.5,759.9 L945.4,757.9 L945.4,755.9 L945.3,753.9 L945.2,751.9 L945.1,749.9 L945.0,747.9 L944.9,745.9 L944.9,743.9 L944.8,741.9 L944.7,739.9 L944.6,737.9 L944.5,735.9 L944.5,733.9 L944.4,731.9 L944.3,729.9 L944.2,727.9 L944.1,725.9 L944.0,723.9 L944.0,721.9 L943.9,719.9 L943.8,717.9 L943.7,715.9 L943.6,713.9 L943.6,711.9 L943.5,709.9 L943.4,707.9 L943.3,705.9 L943.2,703.9 L943.2,702.0 L943.1,700.0 L943.0,698.0 L942.9,696.0 L942.8,694.0 L942.7,692.0 L942.7,690.0 L942.6,688.0 L942.5,686.0 L942.4,684.0 L942.3,682.0 L942.3,680.0 L942.2,678.0 L942.1,676.0 L942.0,674.0 L941.9,672.0 L941.9,670.0 L941.8,668.0 L941.7,666.0 L941.6,664.0 L941.5,662.0 L941.4,660.0 L941.4,658.0 L941.3,656.0 L941.2,654.0 L941.1,652.0 L941.0,650.0 L941.0,648.0 L940.9,646.0 L940.8,644.0 L940.7,642.0 L940.6,640.0 L940.6,638.0 L940.5,636.0 L940.4,634.0 L940.3,632.0 L940.2,630.0 L940.1,628.0 L940.1,626.0 L940.0,624.0 L939.9,622.0 L939.8,620.0 L939.8,618.0 L939.8,616.0 L939.8,614.0 L939.8,612.0 L939.8,610.0 L939.8,608.0 L940.0,606.0Z" fill="rgb(113,113,113)"/>
<path d="M816.7,671.0 L817.1,673.0 L817.3,675.0 L817.5,677.0 L817.7,679.0 L817.9,680.9 L818.1,682.9 L818.2,684.9 L818.3,686.9 L818.4,688.9 L818.5,690.9 L818.7,692.9 L818.8,694.9 L818.9,696.9 L819.0,698.9 L819.1,700.9 L819.2,702.9 L819.3,704.9 L819.4,706.9 L819.5,708.9 L819.7,710.9 L819.8,712.9 L819.9,714.9 L820.0,716.9 L820.1,718.9 L820.2,720.9 L820.3,722.9 L820.4,724.9 L820.5,726.9 L820.6,728.9 L820.8,730.9 L820.9,732.9 L821.0,734.9 L821.1,736.9 L821.2,738.9 L821.3,740.9 L821.4,742.8 L821.5,744.8 L821.6,746.8 L821.7,748.8 L821.9,750.8 L822.0,752.8 L822.1,754.8 L822.2,756.8 L822.3,758.8 L822.4,760.8 L822.5,762.8 L822.6,764.8 L822.7,766.8 L822.8,768.8 L823.0,770.8 L823.1,772.8 L823.2,774.8 L823.3,776.8 L823.3,778.0 L821.9,778.0 L821.8,776.9 L821.7,774.9 L821.6,772.9 L821.5,770.9 L821.3,768.9 L821.2,766.9 L821.1,764.9 L821.0,762.9 L820.9,760.9 L820.8,758.9 L820.7,756.9 L820.6,754.9 L820.5,752.9 L820.4,750.9 L820.2,748.9 L820.1,746.9 L820.0,744.9 L819.9,742.9 L819.8,740.9 L819.7,738.9 L819.6,736.9 L819.5,734.9 L819.4,732.9 L819.3,731.0 L819.1,729.0 L819.0,727.0 L818.9,725.0 L818.8,723.0 L818.7,721.0 L818.6,719.0 L818.5,717.0 L818.4,715.0 L818.3,713.0 L818.2,711.0 L818.0,709.0 L817.9,707.0 L817.8,705.0 L817.7,703.0 L817.6,701.0 L817.5,699.0 L817.4,697.0 L817.3,695.0 L817.2,693.0 L817.1,691.0 L816.9,689.0 L816.8,687.0 L816.7,685.0 L816.7,683.0 L816.6,681.0 L816.6,679.0 L816.5,677.0 L816.5,675.0 L816.5,673.0 L816.7,671.0Z" fill="rgb(47,47,47)"/>
<path d="M1022.7,581.0 L1023.0,583.0 L1023.2,585.0 L1023.3,587.0 L1023.4,589.0 L1023.6,591.0 L1023.7,593.0 L1023.8,595.0 L1023.8,597.0 L1023.8,599.0 L1023.9,601.0 L1023.9,603.0 L1024.0,605.0 L1024.0,607.0 L1024.1,609.0 L1024.1,611.0 L1024.1,613.0 L1024.2,615.0 L1024.2,617.0 L1024.3,619.0 L1024.3,621.0 L1024.4,623.0 L1024.4,625.0 L1024.5,627.0 L1024.5,629.0 L1024.5,631.0 L1024.6,633.0 L1024.6,635.0 L1024.7,637.0 L1024.7,639.0 L1024.8,641.0 L1024.8,643.0 L1024.8,645.0 L1024.9,647.0 L1024.9,649.0 L1025.0,651.0 L1025.0,653.0 L1025.1,655.0 L1025.1,657.0 L1025.2,659.0 L1025.2,661.0 L1025.2,663.0 L1025.3,665.0 L1025.3,667.0 L1025.4,669.0 L1025.4,671.0 L1025.5,673.0 L1025.5,675.0 L1025.5,677.0 L1025.6,679.0 L1025.6,681.0 L1025.7,683.0 L1025.7,685.0 L1025.8,687.0 L1025.8,689.0 L1025.9,691.0 L1025.9,693.0 L1025.9,695.0 L1026.0,697.0 L1026.0,699.0 L1026.1,701.0 L1026.1,703.0 L1026.2,705.0 L1026.2,707.0 L1026.2,709.0 L1026.3,711.0 L1026.3,713.0 L1026.4,715.0 L1026.4,717.0 L1026.5,719.0 L1026.5,721.0 L1026.5,722.9 L1026.6,724.9 L1026.6,726.9 L1026.7,728.9 L1026.7,730.9 L1026.8,732.9 L1026.8,734.9 L1026.9,736.9 L1026.9,738.9 L1026.9,740.9 L1027.0,742.9 L1027.0,744.9 L1027.1,746.9 L1027.1,748.9 L1027.2,750.9 L1027.2,752.9 L1027.2,754.9 L1027.3,756.9 L1027.3,758.9 L1027.4,760.9 L1027.4,762.9 L1027.5,764.9 L1027.5,766.9 L1027.6,768.9 L1027.6,770.9 L1027.6,772.9 L1027.7,774.9 L1027.7,776.9 L1027.7,778.0 L1026.3,778.0 L1026.2,777.0 L1026.2,775.0 L1026.1,773.0 L1026.1,771.0 L1026.1,769.0 L1026.0,767.0 L1026.0,765.0 L1025.9,763.0 L1025.9,761.0 L1025.8,759.0 L1025.8,757.0 L1025.7,755.0 L1025.7,753.0 L1025.7,751.0 L1025.6,749.0 L1025.6,747.0 L1025.5,745.0 L1025.5,743.0 L1025.4,741.0 L1025.4,739.0 L1025.4,737.0 L1025.3,735.0 L1025.3,733.0 L1025.2,731.0 L1025.2,729.0 L1025.1,727.0 L1025.1,725.0 L1025.0,723.0 L1025.0,721.0 L1025.0,719.0 L1024.9,717.0 L1024.9,715.0 L1024.8,713.0 L1024.8,711.0 L1024.7,709.0 L1024.7,707.0 L1024.7,705.0 L1024.6,703.0 L1024.6,701.0 L1024.5,699.0 L1024.5,697.0 L1024.4,695.0 L1024.4,693.0 L1024.4,691.0 L1024.3,689.0 L1024.3,687.0 L1024.2,685.0 L1024.2,683.0 L1024.1,681.0 L1024.1,679.0 L1024.0,677.0 L1024.0,675.0 L1024.0,673.0 L1023.9,671.0 L1023.9,669.0 L1023.8,667.0 L1023.8,665.0 L1023.7,663.0 L1023.7,661.0 L1023.7,659.0 L1023.6,657.0 L1023.6,655.0 L1023.5,653.0 L1023.5,651.0 L1023.4,649.0 L1023.4,647.0 L1023.3,645.0 L1023.3,643.0 L1023.3,641.0 L1023.2,639.0 L1023.2,637.0 L1023.1,635.0 L1023.1,633.0 L1023.0,631.0 L1023.0,629.0 L1023.0,627.0 L1022.9,625.0 L1022.9,623.0 L1022.8,621.0 L1022.8,619.0 L1022.7,617.0 L1022.7,615.0 L1022.6,613.0 L1022.6,611.0 L1022.6,609.0 L1022.5,607.0 L1022.5,605.0 L1022.4,603.0 L1022.4,601.0 L1022.3,599.0 L1022.3,597.0 L1022.3,595.0 L1022.3,593.0 L1022.3,591.0 L1022.3,589.0 L1022.3,587.0 L1022.4,585.0 L1022.5,583.0 L1022.7,581.0Z" fill="rgb(47,47,47)"/>
</g>
</svg>

<div class="yl" style="top:879.6px">-70</div>
<div class="yl" style="top:844.9px">-60</div>
<div class="yl" style="top:810.1px">-50</div>
<div class="yl" style="top:775.3px">-40</div>
<div class="yl" style="top:740.6px">-30</div>
<div class="yl" style="top:705.8px">-20</div>
<div class="yl" style="top:671.1px">-10</div>
<div class="yl" style="top:636.3px">0</div>
<div class="yl" style="top:601.5px">10</div>
<div class="yl" style="top:566.8px">20</div>
<div class="yl" style="top:532.0px">30</div>
<div class="yl" style="top:497.3px">40</div>
<div class="yl" style="top:462.5px">50</div>
<div class="yl" style="top:427.7px">60</div>
<div class="yl" style="top:393.0px">70</div>
<div class="yl" style="top:358.2px">80</div>
<div class="yl" style="top:323.5px">90</div>
<div class="yl" style="top:288.7px">100</div>
<div class="yl" style="top:253.9px">110</div>
<div class="yl" style="top:219.2px">120</div>
<div class="yl" style="top:184.4px">130</div>
<div class="yl" style="top:149.7px">140</div>
<div class="yl" style="top:118.5px">150</div>
<div class="xl" style="left:92.0px;text-align:left;width:20px">10</div>
<div class="xl" style="left:248.5px;width:30px">20</div>
<div class="xl" style="left:421.4px;width:30px">30</div>
<div class="xl" style="left:594.2px;width:30px">40</div>
<div class="xl" style="left:767.0px;width:30px">50</div>
<div class="xl" style="left:939.9px;width:30px">60</div>
<div class="xl" style="left:1112.7px;width:30px">70</div>
<div class="a" style="left:543.5px;top:917px;font-size:12.2px;color:#1e1e1e;white-space:nowrap">Coupled TwoTheta/Theta</div>
<div class="a" style="left:6px;top:498px;width:68px;height:14px;font-size:12px;line-height:14px;color:#222;white-space:nowrap;transform:rotate(-90deg);transform-origin:center;text-align:center">Temperature</div>

<!-- colorbar panel -->
<div class="a" style="left:1138px;top:119px;width:121px;height:813px;border:1px solid #a6b8cc;background:#f3f5f8"></div>
<div class="a" style="left:1220px;top:139px;width:28px;height:759px;background:#f8f6f2"></div>
<div class="a" style="left:1182px;top:139px;width:38px;height:724px;background:linear-gradient(rgb(255,253,240) 0.000% 0.574%,rgb(255,253,239) 0.574% 1.187%,rgb(255,253,238) 1.187% 1.801%,rgb(255,252,237) 1.801% 2.415%,rgb(255,252,236) 2.415% 3.029%,rgb(254,252,235) 3.029% 3.642%,rgb(254,252,234) 3.642% 4.256%,rgb(254,252,233) 4.256% 4.870%,rgb(254,252,233) 4.870% 5.484%,rgb(254,251,232) 5.484% 6.097%,rgb(254,251,231) 6.097% 6.711%,rgb(254,251,230) 6.711% 7.325%,rgb(254,251,229) 7.325% 7.939%,rgb(254,251,228) 7.939% 8.552%,rgb(253,251,227) 8.552% 9.166%,rgb(253,250,226) 9.166% 9.780%,rgb(253,250,225) 9.780% 10.394%,rgb(253,250,225) 10.394% 11.007%,rgb(253,250,224) 11.007% 11.621%,rgb(253,250,223) 11.621% 12.235%,rgb(253,250,222) 12.235% 12.848%,rgb(253,249,221) 12.848% 13.462%,rgb(253,249,220) 13.462% 14.076%,rgb(252,249,219) 14.076% 14.690%,rgb(252,249,218) 14.690% 15.303%,rgb(252,249,218) 15.303% 15.917%,rgb(252,249,217) 15.917% 16.531%,rgb(252,248,216) 16.531% 17.145%,rgb(252,248,215) 17.145% 17.758%,rgb(252,248,214) 17.758% 18.372%,rgb(252,248,213) 18.372% 18.986%,rgb(252,248,212) 18.986% 19.600%,rgb(251,248,211) 19.600% 20.213%,rgb(251,247,210) 20.213% 20.827%,rgb(251,247,210) 20.827% 21.441%,rgb(251,247,209) 21.441% 22.055%,rgb(251,247,208) 22.055% 22.668%,rgb(251,247,206) 22.668% 23.282%,rgb(251,246,205) 23.282% 23.896%,rgb(251,246,203) 23.896% 24.510%,rgb(250,246,202) 24.510% 25.123%,rgb(250,245,201) 25.123% 25.737%,rgb(250,245,199) 25.737% 26.351%,rgb(250,245,198) 26.351% 26.965%,rgb(250,244,196) 26.965% 27.578%,rgb(250,244,195) 27.578% 28.192%,rgb(250,244,193) 28.192% 28.806%,rgb(250,244,192) 28.806% 29.420%,rgb(249,243,191) 29.420% 30.033%,rgb(249,243,189) 30.033% 30.647%,rgb(249,243,188) 30.647% 31.261%,rgb(249,242,186) 31.261% 31.875%,rgb(249,242,185) 31.875% 32.488%,rgb(249,242,184) 32.488% 33.102%,rgb(249,241,182) 33.102% 33.716%,rgb(248,241,181) 33.716% 34.329%,rgb(248,241,179) 34.329% 34.943%,rgb(248,240,178) 34.943% 35.557%,rgb(248,240,176) 35.557% 36.171%,rgb(248,240,174) 36.171% 36.784%,rgb(247,240,171) 36.784% 37.398%,rgb(247,239,168) 37.398% 38.012%,rgb(247,239,165) 38.012% 38.626%,rgb(247,239,162) 38.626% 39.239%,rgb(246,239,159) 39.239% 39.853%,rgb(246,238,156) 39.853% 40.467%,rgb(246,238,153) 40.467% 41.081%,rgb(245,238,150) 41.081% 41.694%,rgb(245,238,146) 41.694% 42.308%,rgb(245,237,143) 42.308% 42.922%,rgb(244,237,140) 42.922% 43.536%,rgb(244,237,137) 43.536% 44.149%,rgb(244,237,134) 44.149% 44.763%,rgb(243,236,131) 44.763% 45.377%,rgb(243,236,128) 45.377% 45.991%,rgb(243,236,120) 45.991% 46.604%,rgb(243,235,112) 46.604% 47.218%,rgb(243,235,104) 47.218% 47.832%,rgb(243,234,96) 47.832% 48.446%,rgb(243,233,88) 48.446% 49.059%,rgb(243,233,80) 49.059% 49.673%,rgb(243,232,72) 49.673% 50.287%,rgb(242,232,63) 50.287% 50.901%,rgb(242,231,55) 50.901% 51.514%,rgb(242,231,47) 51.514% 52.128%,rgb(242,230,39) 52.128% 52.742%,rgb(242,230,31) 52.742% 53.356%,rgb(242,229,23) 53.356% 53.969%,rgb(242,229,15) 53.969% 54.583%,rgb(242,228,7) 54.583% 55.197%,rgb(242,228,0) 55.197% 55.810%,rgb(243,228,0) 55.810% 56.424%,rgb(244,228,0) 56.424% 57.038%,rgb(245,228,0) 57.038% 57.652%,rgb(246,229,0) 57.652% 58.265%,rgb(247,229,0) 58.265% 58.879%,rgb(248,229,0) 58.879% 59.493%,rgb(249,229,0) 59.493% 60.107%,rgb(250,229,0) 60.107% 60.720%,rgb(251,229,0) 60.720% 61.334%,rgb(252,230,0) 61.334% 61.948%,rgb(253,230,0) 61.948% 62.562%,rgb(254,230,0) 62.562% 63.175%,rgb(255,230,0) 63.175% 63.789%,rgb(255,228,0) 63.789% 64.403%,rgb(254,224,0) 64.403% 65.017%,rgb(253,221,0) 65.017% 65.630%,rgb(253,218,0) 65.630% 66.244%,rgb(252,214,0) 66.244% 66.858%,rgb(251,211,0) 66.858% 67.472%,rgb(251,207,0) 67.472% 68.085%,rgb(250,204,0) 68.085% 68.699%,rgb(250,201,0) 68.699% 69.313%,rgb(249,197,0) 69.313% 69.927%,rgb(248,194,0) 69.927% 70.540%,rgb(248,191,1) 70.540% 71.154%,rgb(248,189,3) 71.154% 71.768%,rgb(247,187,6) 71.768% 72.382%,rgb(247,185,8) 72.382% 72.995%,rgb(247,183,10) 72.995% 73.609%,rgb(247,180,13) 73.609% 74.223%,rgb(246,178,15) 74.223% 74.837%,rgb(246,176,17) 74.837% 75.450%,rgb(246,174,19) 75.450% 76.064%,rgb(245,172,22) 76.064% 76.678%,rgb(245,170,24) 76.678% 77.292%,rgb(245,167,26) 77.292% 77.905%,rgb(244,163,27) 77.905% 78.519%,rgb(244,158,27) 78.519% 79.133%,rgb(243,154,28) 79.133% 79.746%,rgb(243,149,29) 79.746% 80.360%,rgb(242,145,29) 80.360% 80.974%,rgb(242,141,30) 80.974% 81.588%,rgb(241,136,31) 81.588% 82.201%,rgb(240,132,31) 82.201% 82.815%,rgb(240,127,32) 82.815% 83.429%,rgb(239,123,32) 83.429% 84.043%,rgb(238,119,32) 84.043% 84.656%,rgb(237,115,33) 84.656% 85.270%,rgb(236,110,33) 85.270% 85.884%,rgb(235,106,33) 85.884% 86.498%,rgb(235,102,33) 86.498% 87.111%,rgb(234,98,34) 87.111% 87.725%,rgb(233,93,34) 87.725% 88.339%,rgb(232,88,34) 88.339% 88.953%,rgb(231,79,33) 88.953% 89.566%,rgb(230,70,33) 89.566% 90.180%,rgb(229,60,33) 90.180% 90.794%,rgb(228,51,32) 90.794% 91.408%,rgb(227,40,32) 91.408% 92.021%,rgb(226,28,32) 92.021% 92.635%,rgb(224,16,32) 92.635% 93.249%,rgb(208,16,32) 93.249% 93.863%,rgb(192,16,32) 93.863% 94.476%,rgb(175,16,32) 94.476% 95.090%,rgb(160,21,32) 95.090% 95.704%,rgb(141,24,30) 95.704% 96.318%,rgb(119,24,25) 96.318% 96.931%,rgb(100,21,21) 96.931% 97.545%,rgb(82,17,17) 97.545% 98.159%,rgb(53,12,12) 98.159% 98.773%,rgb(29,7,7) 98.773% 99.386%,rgb(19,5,5) 99.386% 100.000%)"></div>
<div class="a" style="left:1182px;top:863px;width:38px;height:1px;background:#e8e4e0"></div>
<div class="a" style="left:1182px;top:864px;width:38px;height:34px;background:#000"></div>
<div class="a" style="left:1220px;top:139px;width:1px;height:759px;background:#111"></div>
<div class="cl" style="top:815.0px">1000</div>
<div class="cl" style="top:726.1px">2000</div>
<div class="cl" style="top:637.2px">3000</div>
<div class="cl" style="top:548.4px">4000</div>
<div class="cl" style="top:459.5px">5000</div>
<div class="cl" style="top:370.6px">6000</div>
<div class="cl" style="top:281.8px">7000</div>
<div class="cl" style="top:192.9px">8000</div>
<!-- slider -->
<div class="a" style="left:1160.5px;top:138px;width:9px;height:764px;border:1px solid #c4cedb;border-left-color:#dde3ea;border-radius:2px;background:linear-gradient(90deg,#e6ebf1,#eef2f6,#d6dde6)"></div>
<div class="a" style="left:1162px;top:140px;width:5.5px;height:725px;background:linear-gradient(90deg,#fbe0c0,#f8c283 45%,#f4b264 75%,#f9d0a0)"></div>
<svg class="a" style="left:1153px;top:133px" width="25" height="9"><defs><linearGradient id="th" x1="0" y1="0" x2="0" y2="1"><stop offset="0" stop-color="#eef2f6"/><stop offset="1" stop-color="#b9c5d3"/></linearGradient></defs><path d="M1.2,7.8 C0.8,5 1.5,2.2 3.5,1.8 L19,1.8 L23.8,7.8 Z" fill="url(#th)" stroke="#9fafc2" stroke-width="1"/></svg>
<svg class="a" style="left:1153px;top:864px" width="25" height="9"><defs><linearGradient id="th2" x1="0" y1="0" x2="0" y2="1"><stop offset="0" stop-color="#eef2f6"/><stop offset="1" stop-color="#b9c5d3"/></linearGradient></defs><path d="M1.2,1.2 C0.8,4 1.5,6.8 3.5,7.2 L19,7.2 L23.8,1.2 Z" fill="url(#th2)" stroke="#9fafc2" stroke-width="1"/></svg>

<!-- status bar -->
<div class="a" style="left:3px;top:951px;width:1277px;height:27px;background:#f0f3f7"></div>
<div class="a" style="left:3px;top:953px;width:1275px;height:23px;border:1px solid #a9b9cc;border-top-color:#dfe5ec;background:#f2f4f7"></div>
<div class="a" style="left:6px;top:956px;width:162px;height:18px;border:1px solid #c9d2dd;border-radius:2px;background:linear-gradient(#f8f9fb,#dfe4ea)"></div>
<div class="a" style="left:171px;top:956px;width:138px;height:18px;border:1px solid #c9d2dd;border-radius:2px;background:linear-gradient(#f8f9fb,#dfe4ea)"></div>
<div class="a" style="left:176px;top:958px;font-size:12px;letter-spacing:-0.35px;color:#111;white-space:pre">2Th=18,964  d=4,67573</div>
<div class="a" style="left:311px;top:956px;width:81px;height:18px;border:1px solid #c9d2dd;border-radius:2px;background:linear-gradient(#f8f9fb,#dfe4ea)"></div>
<div class="a" style="left:394px;top:956px;width:81px;height:18px;border:1px solid #c9d2dd;border-radius:2px;background:linear-gradient(#f8f9fb,#dfe4ea)"></div>
<div class="a" style="left:477px;top:956px;width:800px;height:18px;border:1px solid #c9d2dd;border-radius:2px;background:linear-gradient(#f8f9fb,#dfe4ea)"></div>
<!-- axes ticks -->
<svg class="a" style="left:0;top:0" width="1282" height="978" fill="#111"><rect x="87.0" y="889" width="3" height="1"/><rect x="83.0" y="886" width="7" height="1"/><rect x="87.0" y="882" width="3" height="1"/><rect x="87.0" y="879" width="3" height="1"/><rect x="87.0" y="875" width="3" height="1"/><rect x="87.0" y="872" width="3" height="1"/><rect x="86.0" y="868" width="4" height="1"/><rect x="87.0" y="865" width="3" height="1"/><rect x="87.0" y="861" width="3" height="1"/><rect x="87.0" y="858" width="3" height="1"/><rect x="87.0" y="854" width="3" height="1"/><rect x="83.0" y="851" width="7" height="1"/><rect x="87.0" y="847" width="3" height="1"/><rect x="87.0" y="844" width="3" height="1"/><rect x="87.0" y="840" width="3" height="1"/><rect x="87.0" y="837" width="3" height="1"/><rect x="86.0" y="833" width="4" height="1"/><rect x="87.0" y="830" width="3" height="1"/><rect x="87.0" y="827" width="3" height="1"/><rect x="87.0" y="823" width="3" height="1"/><rect x="87.0" y="820" width="3" height="1"/><rect x="83.0" y="816" width="7" height="1"/><rect x="87.0" y="813" width="3" height="1"/><rect x="87.0" y="809" width="3" height="1"/><rect x="87.0" y="806" width="3" height="1"/><rect x="87.0" y="802" width="3" height="1"/><rect x="86.0" y="799" width="4" height="1"/><rect x="87.0" y="795" width="3" height="1"/><rect x="87.0" y="792" width="3" height="1"/><rect x="87.0" y="788" width="3" height="1"/><rect x="87.0" y="785" width="3" height="1"/><rect x="83.0" y="781" width="7" height="1"/><rect x="87.0" y="778" width="3" height="1"/><rect x="87.0" y="774" width="3" height="1"/><rect x="87.0" y="771" width="3" height="1"/><rect x="87.0" y="767" width="3" height="1"/><rect x="86.0" y="764" width="4" height="1"/><rect x="87.0" y="760" width="3" height="1"/><rect x="87.0" y="757" width="3" height="1"/><rect x="87.0" y="754" width="3" height="1"/><rect x="87.0" y="750" width="3" height="1"/><rect x="83.0" y="747" width="7" height="1"/><rect x="87.0" y="743" width="3" height="1"/><rect x="87.0" y="740" width="3" height="1"/><rect x="87.0" y="736" width="3" height="1"/><rect x="87.0" y="733" width="3" height="1"/><rect x="86.0" y="729" width="4" height="1"/><rect x="87.0" y="726" width="3" height="1"/><rect x="87.0" y="722" width="3" height="1"/><rect x="87.0" y="719" width="3" height="1"/><rect x="87.0" y="715" width="3" height="1"/><rect x="83.0" y="712" width="7" height="1"/><rect x="87.0" y="708" width="3" height="1"/><rect x="87.0" y="705" width="3" height="1"/><rect x="87.0" y="701" width="3" height="1"/><rect x="87.0" y="698" width="3" height="1"/><rect x="86.0" y="694" width="4" height="1"/><rect x="87.0" y="691" width="3" height="1"/><rect x="87.0" y="687" width="3" height="1"/><rect x="87.0" y="684" width="3" height="1"/><rect x="87.0" y="681" width="3" height="1"/><rect x="83.0" y="677" width="7" height="1"/><rect x="87.0" y="674" width="3" height="1"/><rect x="87.0" y="670" width="3" height="1"/><rect x="87.0" y="667" width="3" height="1"/><rect x="87.0" y="663" width="3" height="1"/><rect x="86.0" y="660" width="4" height="1"/><rect x="87.0" y="656" width="3" height="1"/><rect x="87.0" y="653" width="3" height="1"/><rect x="87.0" y="649" width="3" height="1"/><rect x="87.0" y="646" width="3" height="1"/><rect x="83.0" y="642" width="7" height="1"/><rect x="87.0" y="639" width="3" height="1"/><rect x="87.0" y="635" width="3" height="1"/><rect x="87.0" y="632" width="3" height="1"/><rect x="87.0" y="628" width="3" height="1"/><rect x="86.0" y="625" width="4" height="1"/><rect x="87.0" y="621" width="3" height="1"/><rect x="87.0" y="618" width="3" height="1"/><rect x="87.0" y="614" width="3" height="1"/><rect x="87.0" y="611" width="3" height="1"/><rect x="83.0" y="608" width="7" height="1"/><rect x="87.0" y="604" width="3" height="1"/><rect x="87.0" y="601" width="3" height="1"/><rect x="87.0" y="597" width="3" height="1"/><rect x="87.0" y="594" width="3" height="1"/><rect x="86.0" y="590" width="4" height="1"/><rect x="87.0" y="587" width="3" height="1"/><rect x="87.0" y="583" width="3" height="1"/><rect x="87.0" y="580" width="3" height="1"/><rect x="87.0" y="576" width="3" height="1"/><rect x="83.0" y="573" width="7" height="1"/><rect x="87.0" y="569" width="3" height="1"/><rect x="87.0" y="566" width="3" height="1"/><rect x="87.0" y="562" width="3" height="1"/><rect x="87.0" y="559" width="3" height="1"/><rect x="86.0" y="555" width="4" height="1"/><rect x="87.0" y="552" width="3" height="1"/><rect x="87.0" y="548" width="3" height="1"/><rect x="87.0" y="545" width="3" height="1"/><rect x="87.0" y="541" width="3" height="1"/><rect x="83.0" y="538" width="7" height="1"/><rect x="87.0" y="535" width="3" height="1"/><rect x="87.0" y="531" width="3" height="1"/><rect x="87.0" y="528" width="3" height="1"/><rect x="87.0" y="524" width="3" height="1"/><rect x="86.0" y="521" width="4" height="1"/><rect x="87.0" y="517" width="3" height="1"/><rect x="87.0" y="514" width="3" height="1"/><rect x="87.0" y="510" width="3" height="1"/><rect x="87.0" y="507" width="3" height="1"/><rect x="83.0" y="503" width="7" height="1"/><rect x="87.0" y="500" width="3" height="1"/><rect x="87.0" y="496" width="3" height="1"/><rect x="87.0" y="493" width="3" height="1"/><rect x="87.0" y="489" width="3" height="1"/><rect x="86.0" y="486" width="4" height="1"/><rect x="87.0" y="482" width="3" height="1"/><rect x="87.0" y="479" width="3" height="1"/><rect x="87.0" y="475" width="3" height="1"/><rect x="87.0" y="472" width="3" height="1"/><rect x="83.0" y="469" width="7" height="1"/><rect x="87.0" y="465" width="3" height="1"/><rect x="87.0" y="462" width="3" height="1"/><rect x="87.0" y="458" width="3" height="1"/><rect x="87.0" y="455" width="3" height="1"/><rect x="86.0" y="451" width="4" height="1"/><rect x="87.0" y="448" width="3" height="1"/><rect x="87.0" y="444" width="3" height="1"/><rect x="87.0" y="441" width="3" height="1"/><rect x="87.0" y="437" width="3" height="1"/><rect x="83.0" y="434" width="7" height="1"/><rect x="87.0" y="430" width="3" height="1"/><rect x="87.0" y="427" width="3" height="1"/><rect x="87.0" y="423" width="3" height="1"/><rect x="87.0" y="420" width="3" height="1"/><rect x="86.0" y="416" width="4" height="1"/><rect x="87.0" y="413" width="3" height="1"/><rect x="87.0" y="409" width="3" height="1"/><rect x="87.0" y="406" width="3" height="1"/><rect x="87.0" y="402" width="3" height="1"/><rect x="83.0" y="399" width="7" height="1"/><rect x="87.0" y="396" width="3" height="1"/><rect x="87.0" y="392" width="3" height="1"/><rect x="87.0" y="389" width="3" height="1"/><rect x="87.0" y="385" width="3" height="1"/><rect x="86.0" y="382" width="4" height="1"/><rect x="87.0" y="378" width="3" height="1"/><rect x="87.0" y="375" width="3" height="1"/><rect x="87.0" y="371" width="3" height="1"/><rect x="87.0" y="368" width="3" height="1"/><rect x="83.0" y="364" width="7" height="1"/><rect x="87.0" y="361" width="3" height="1"/><rect x="87.0" y="357" width="3" height="1"/><rect x="87.0" y="354" width="3" height="1"/><rect x="87.0" y="350" width="3" height="1"/><rect x="86.0" y="347" width="4" height="1"/><rect x="87.0" y="343" width="3" height="1"/><rect x="87.0" y="340" width="3" height="1"/><rect x="87.0" y="336" width="3" height="1"/><rect x="87.0" y="333" width="3" height="1"/><rect x="83.0" y="329" width="7" height="1"/><rect x="87.0" y="326" width="3" height="1"/><rect x="87.0" y="323" width="3" height="1"/><rect x="87.0" y="319" width="3" height="1"/><rect x="87.0" y="316" width="3" height="1"/><rect x="86.0" y="312" width="4" height="1"/><rect x="87.0" y="309" width="3" height="1"/><rect x="87.0" y="305" width="3" height="1"/><rect x="87.0" y="302" width="3" height="1"/><rect x="87.0" y="298" width="3" height="1"/><rect x="83.0" y="295" width="7" height="1"/><rect x="87.0" y="291" width="3" height="1"/><rect x="87.0" y="288" width="3" height="1"/><rect x="87.0" y="284" width="3" height="1"/><rect x="87.0" y="281" width="3" height="1"/><rect x="86.0" y="277" width="4" height="1"/><rect x="87.0" y="274" width="3" height="1"/><rect x="87.0" y="270" width="3" height="1"/><rect x="87.0" y="267" width="3" height="1"/><rect x="87.0" y="263" width="3" height="1"/><rect x="83.0" y="260" width="7" height="1"/><rect x="87.0" y="256" width="3" height="1"/><rect x="87.0" y="253" width="3" height="1"/><rect x="87.0" y="250" width="3" height="1"/><rect x="87.0" y="246" width="3" height="1"/><rect x="86.0" y="243" width="4" height="1"/><rect x="87.0" y="239" width="3" height="1"/><rect x="87.0" y="236" width="3" height="1"/><rect x="87.0" y="232" width="3" height="1"/><rect x="87.0" y="229" width="3" height="1"/><rect x="83.0" y="225" width="7" height="1"/><rect x="87.0" y="222" width="3" height="1"/><rect x="87.0" y="218" width="3" height="1"/><rect x="87.0" y="215" width="3" height="1"/><rect x="87.0" y="211" width="3" height="1"/><rect x="86.0" y="208" width="4" height="1"/><rect x="87.0" y="204" width="3" height="1"/><rect x="87.0" y="201" width="3" height="1"/><rect x="87.0" y="197" width="3" height="1"/><rect x="87.0" y="194" width="3" height="1"/><rect x="83.0" y="190" width="7" height="1"/><rect x="87.0" y="187" width="3" height="1"/><rect x="87.0" y="183" width="3" height="1"/><rect x="87.0" y="180" width="3" height="1"/><rect x="87.0" y="177" width="3" height="1"/><rect x="86.0" y="173" width="4" height="1"/><rect x="87.0" y="170" width="3" height="1"/><rect x="87.0" y="166" width="3" height="1"/><rect x="87.0" y="163" width="3" height="1"/><rect x="87.0" y="159" width="3" height="1"/><rect x="83.0" y="156" width="7" height="1"/><rect x="87.0" y="152" width="3" height="1"/><rect x="87.0" y="149" width="3" height="1"/><rect x="87.0" y="145" width="3" height="1"/><rect x="87.0" y="142" width="3" height="1"/><rect x="86.0" y="138" width="4" height="1"/><rect x="87.0" y="135" width="3" height="1"/><rect x="87.0" y="131" width="3" height="1"/><rect x="87.0" y="128" width="3" height="1"/><rect x="87.0" y="124" width="3" height="1"/><rect x="83.0" y="121" width="7" height="1"/><rect x="92" y="894" width="1" height="7"/><rect x="109" y="894" width="1" height="1.5"/><rect x="126" y="894" width="1" height="1.5"/><rect x="144" y="894" width="1" height="1.5"/><rect x="161" y="894" width="1" height="1.5"/><rect x="178" y="894" width="1" height="3.5"/><rect x="195" y="894" width="1" height="1.5"/><rect x="213" y="894" width="1" height="1.5"/><rect x="230" y="894" width="1" height="1.5"/><rect x="247" y="894" width="1" height="1.5"/><rect x="265" y="894" width="1" height="7"/><rect x="282" y="894" width="1" height="1.5"/><rect x="299" y="894" width="1" height="1.5"/><rect x="316" y="894" width="1" height="1.5"/><rect x="334" y="894" width="1" height="1.5"/><rect x="351" y="894" width="1" height="3.5"/><rect x="368" y="894" width="1" height="1.5"/><rect x="386" y="894" width="1" height="1.5"/><rect x="403" y="894" width="1" height="1.5"/><rect x="420" y="894" width="1" height="1.5"/><rect x="437" y="894" width="1" height="7"/><rect x="455" y="894" width="1" height="1.5"/><rect x="472" y="894" width="1" height="1.5"/><rect x="489" y="894" width="1" height="1.5"/><rect x="506" y="894" width="1" height="1.5"/><rect x="524" y="894" width="1" height="3.5"/><rect x="541" y="894" width="1" height="1.5"/><rect x="558" y="894" width="1" height="1.5"/><rect x="576" y="894" width="1" height="1.5"/><rect x="593" y="894" width="1" height="1.5"/><rect x="610" y="894" width="1" height="7"/><rect x="627" y="894" width="1" height="1.5"/><rect x="645" y="894" width="1" height="1.5"/><rect x="662" y="894" width="1" height="1.5"/><rect x="679" y="894" width="1" height="1.5"/><rect x="697" y="894" width="1" height="3.5"/><rect x="714" y="894" width="1" height="1.5"/><rect x="731" y="894" width="1" height="1.5"/><rect x="748" y="894" width="1" height="1.5"/><rect x="766" y="894" width="1" height="1.5"/><rect x="783" y="894" width="1" height="7"/><rect x="800" y="894" width="1" height="1.5"/><rect x="818" y="894" width="1" height="1.5"/><rect x="835" y="894" width="1" height="1.5"/><rect x="852" y="894" width="1" height="1.5"/><rect x="869" y="894" width="1" height="3.5"/><rect x="887" y="894" width="1" height="1.5"/><rect x="904" y="894" width="1" height="1.5"/><rect x="921" y="894" width="1" height="1.5"/><rect x="939" y="894" width="1" height="1.5"/><rect x="956" y="894" width="1" height="7"/><rect x="973" y="894" width="1" height="1.5"/><rect x="990" y="894" width="1" height="1.5"/><rect x="1008" y="894" width="1" height="1.5"/><rect x="1025" y="894" width="1" height="1.5"/><rect x="1042" y="894" width="1" height="3.5"/><rect x="1060" y="894" width="1" height="1.5"/><rect x="1077" y="894" width="1" height="1.5"/><rect x="1094" y="894" width="1" height="1.5"/><rect x="1111" y="894" width="1" height="1.5"/><rect x="1129" y="894" width="1" height="7"/><rect x="1220" y="896" width="2.2" height="1"/><rect x="1220" y="887" width="2.2" height="1"/><rect x="1220" y="878" width="2.2" height="1"/><rect x="1220" y="869" width="4" height="1"/><rect x="1220" y="860" width="2.2" height="1"/><rect x="1220" y="851" width="2.2" height="1"/><rect x="1220" y="842" width="2.2" height="1"/><rect x="1220" y="833" width="2.2" height="1"/><rect x="1220" y="824" width="7" height="1"/><rect x="1220" y="816" width="2.2" height="1"/><rect x="1220" y="807" width="2.2" height="1"/><rect x="1220" y="798" width="2.2" height="1"/><rect x="1220" y="789" width="2.2" height="1"/><rect x="1220" y="780" width="4" height="1"/><rect x="1220" y="771" width="2.2" height="1"/><rect x="1220" y="762" width="2.2" height="1"/><rect x="1220" y="753" width="2.2" height="1"/><rect x="1220" y="745" width="2.2" height="1"/><rect x="1220" y="736" width="7" height="1"/><rect x="1220" y="727" width="2.2" height="1"/><rect x="1220" y="718" width="2.2" height="1"/><rect x="1220" y="709" width="2.2" height="1"/><rect x="1220" y="700" width="2.2" height="1"/><rect x="1220" y="691" width="4" height="1"/><rect x="1220" y="682" width="2.2" height="1"/><rect x="1220" y="673" width="2.2" height="1"/><rect x="1220" y="665" width="2.2" height="1"/><rect x="1220" y="656" width="2.2" height="1"/><rect x="1220" y="647" width="7" height="1"/><rect x="1220" y="638" width="2.2" height="1"/><rect x="1220" y="629" width="2.2" height="1"/><rect x="1220" y="620" width="2.2" height="1"/><rect x="1220" y="611" width="2.2" height="1"/><rect x="1220" y="602" width="4" height="1"/><rect x="1220" y="593" width="2.2" height="1"/><rect x="1220" y="585" width="2.2" height="1"/><rect x="1220" y="576" width="2.2" height="1"/><rect x="1220" y="567" width="2.2" height="1"/><rect x="1220" y="558" width="7" height="1"/><rect x="1220" y="549" width="2.2" height="1"/><rect x="1220" y="540" width="2.2" height="1"/><rect x="1220" y="531" width="2.2" height="1"/><rect x="1220" y="522" width="2.2" height="1"/><rect x="1220" y="513" width="4" height="1"/><rect x="1220" y="505" width="2.2" height="1"/><rect x="1220" y="496" width="2.2" height="1"/><rect x="1220" y="487" width="2.2" height="1"/><rect x="1220" y="478" width="2.2" height="1"/><rect x="1220" y="469" width="7" height="1"/><rect x="1220" y="460" width="2.2" height="1"/><rect x="1220" y="451" width="2.2" height="1"/><rect x="1220" y="442" width="2.2" height="1"/><rect x="1220" y="433" width="2.2" height="1"/><rect x="1220" y="425" width="4" height="1"/><rect x="1220" y="416" width="2.2" height="1"/><rect x="1220" y="407" width="2.2" height="1"/><rect x="1220" y="398" width="2.2" height="1"/><rect x="1220" y="389" width="2.2" height="1"/><rect x="1220" y="380" width="7" height="1"/><rect x="1220" y="371" width="2.2" height="1"/><rect x="1220" y="362" width="2.2" height="1"/><rect x="1220" y="353" width="2.2" height="1"/><rect x="1220" y="345" width="2.2" height="1"/><rect x="1220" y="336" width="4" height="1"/><rect x="1220" y="327" width="2.2" height="1"/><rect x="1220" y="318" width="2.2" height="1"/><rect x="1220" y="309" width="2.2" height="1"/><rect x="1220" y="300" width="2.2" height="1"/><rect x="1220" y="291" width="7" height="1"/><rect x="1220" y="282" width="2.2" height="1"/><rect x="1220" y="273" width="2.2" height="1"/><rect x="1220" y="265" width="2.2" height="1"/><rect x="1220" y="256" width="2.2" height="1"/><rect x="1220" y="247" width="4" height="1"/><rect x="1220" y="238" width="2.2" height="1"/><rect x="1220" y="229" width="2.2" height="1"/><rect x="1220" y="220" width="2.2" height="1"/><rect x="1220" y="211" width="2.2" height="1"/><rect x="1220" y="202" width="7" height="1"/><rect x="1220" y="194" width="2.2" height="1"/><rect x="1220" y="185" width="2.2" height="1"/><rect x="1220" y="176" width="2.2" height="1"/><rect x="1220" y="167" width="2.2" height="1"/><rect x="1220" y="158" width="4" height="1"/><rect x="1220" y="149" width="2.2" height="1"/><rect x="1220" y="140" width="2.2" height="1"/></svg>
</body></html>
